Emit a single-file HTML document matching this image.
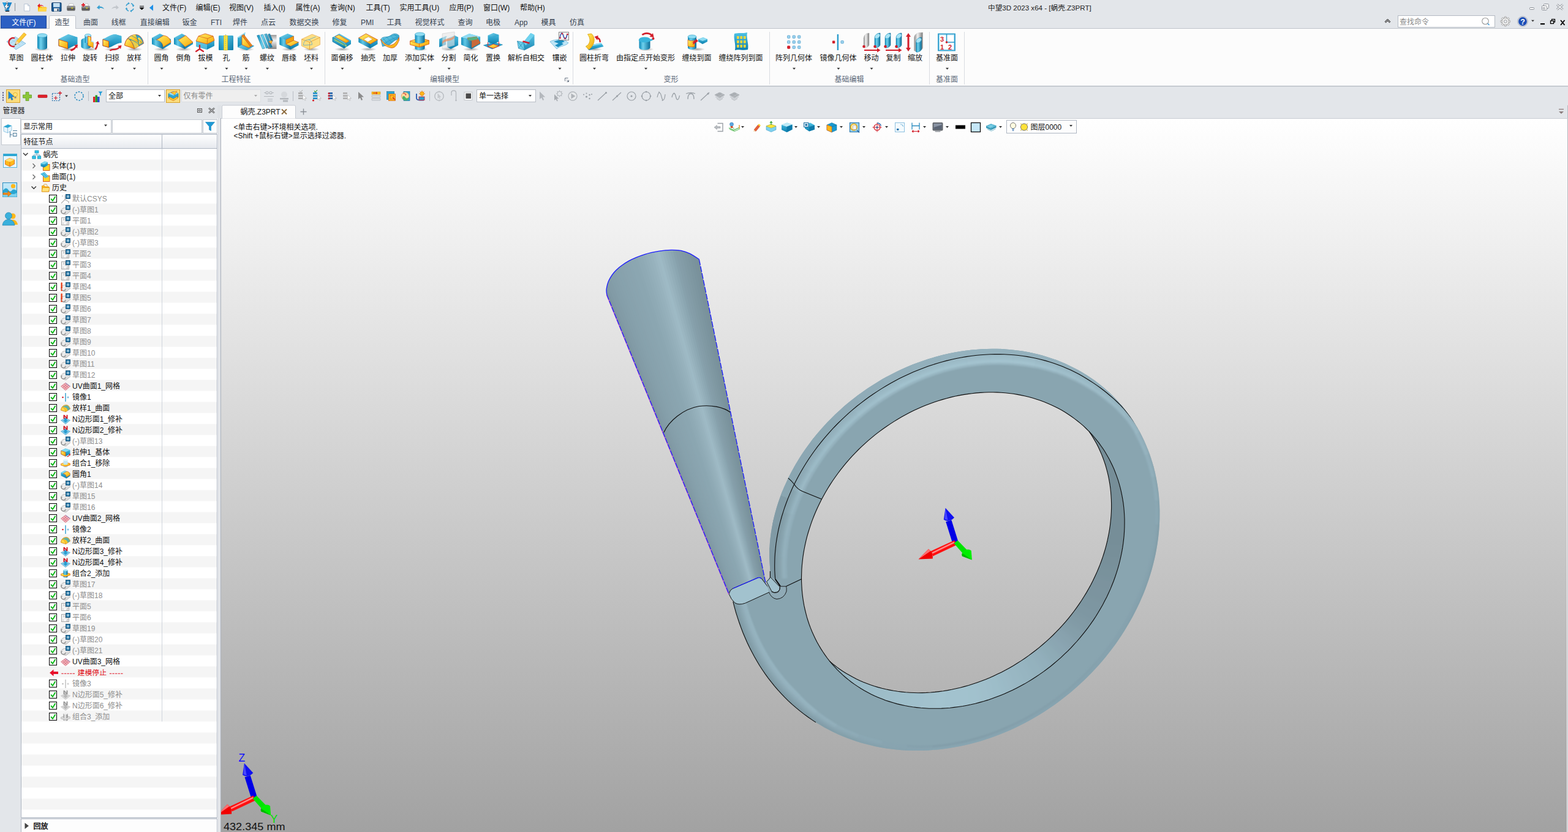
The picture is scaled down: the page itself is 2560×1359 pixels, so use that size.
<!DOCTYPE html>
<html><head><meta charset="utf-8"><title>ZW3D</title>
<style>
html,body{margin:0;padding:0;background:#e3e6ea;overflow:hidden}
body{width:2560px;height:1359px;position:relative;font-family:"Liberation Sans",sans-serif}
#scr{position:absolute;left:0;top:0;display:block}
#txt span{position:absolute;white-space:pre;color:transparent;line-height:1;pointer-events:none}
#txt{position:absolute;left:0;top:0;width:2560px;height:1359px;overflow:hidden}
#scr text.t{font-family:"Liberation Sans","Noto Sans CJK SC",sans-serif}
</style></head><body>
<div id="txt"><span style="left:1613px;top:5px;font-size:11.6px">中望3D 2023 x64 - [蜗壳.Z3PRT]</span><span style="left:265px;top:5px;font-size:12px">文件(F)</span><span style="left:320px;top:5px;font-size:12px">编辑(E)</span><span style="left:374px;top:5px;font-size:12px">视图(V)</span><span style="left:430px;top:5px;font-size:12px">插入(I)</span><span style="left:482px;top:5px;font-size:12px">属性(A)</span><span style="left:539px;top:5px;font-size:12px">查询(N)</span><span style="left:598px;top:5px;font-size:12px">工具(T)</span><span style="left:652px;top:5px;font-size:12px">实用工具(U)</span><span style="left:734px;top:5px;font-size:12px">应用(P)</span><span style="left:789px;top:5px;font-size:12px">窗口(W)</span><span style="left:849px;top:5px;font-size:12px">帮助(H)</span><span style="left:19px;top:29px;font-size:12px">文件(F)</span><span style="left:90px;top:29px;font-size:12px">造型</span><span style="left:136px;top:29px;font-size:12px">曲面</span><span style="left:182px;top:29px;font-size:12px">线框</span><span style="left:229px;top:29px;font-size:12px">直接编辑</span><span style="left:298px;top:29px;font-size:12px">钣金</span><span style="left:344px;top:29px;font-size:12px">FTI</span><span style="left:380px;top:29px;font-size:12px">焊件</span><span style="left:426px;top:29px;font-size:12px">点云</span><span style="left:472px;top:29px;font-size:12px">数据交换</span><span style="left:542px;top:29px;font-size:12px">修复</span><span style="left:589px;top:29px;font-size:12px">PMI</span><span style="left:632px;top:29px;font-size:12px">工具</span><span style="left:678px;top:29px;font-size:12px">视觉样式</span><span style="left:748px;top:29px;font-size:12px">查询</span><span style="left:793px;top:29px;font-size:12px">电极</span><span style="left:840px;top:29px;font-size:12px">App</span><span style="left:884px;top:29px;font-size:12px">模具</span><span style="left:930px;top:29px;font-size:12px">仿真</span><span style="left:14px;top:87px;font-size:12px">草图</span><span style="left:50px;top:87px;font-size:12px">圆柱体</span><span style="left:99px;top:87px;font-size:12px">拉伸</span><span style="left:135px;top:87px;font-size:12px">旋转</span><span style="left:171px;top:87px;font-size:12px">扫掠</span><span style="left:207px;top:87px;font-size:12px">放样</span><span style="left:252px;top:87px;font-size:12px">圆角</span><span style="left:288px;top:87px;font-size:12px">倒角</span><span style="left:324px;top:87px;font-size:12px">拔模</span><span style="left:364px;top:87px;font-size:12px">孔</span><span style="left:396px;top:87px;font-size:12px">筋</span><span style="left:424px;top:87px;font-size:12px">螺纹</span><span style="left:460px;top:87px;font-size:12px">唇缘</span><span style="left:496px;top:87px;font-size:12px">坯料</span><span style="left:540px;top:87px;font-size:12px">面偏移</span><span style="left:589px;top:87px;font-size:12px">抽壳</span><span style="left:625px;top:87px;font-size:12px">加厚</span><span style="left:661px;top:87px;font-size:12px">添加实体</span><span style="left:721px;top:87px;font-size:12px">分割</span><span style="left:757px;top:87px;font-size:12px">简化</span><span style="left:793px;top:87px;font-size:12px">置换</span><span style="left:829px;top:87px;font-size:12px">解析自相交</span><span style="left:902px;top:87px;font-size:12px">镶嵌</span><span style="left:946px;top:87px;font-size:12px">圆柱折弯</span><span style="left:1006px;top:87px;font-size:12px">由指定点开始变形</span><span style="left:1114px;top:87px;font-size:12px">缠绕到面</span><span style="left:1174px;top:87px;font-size:12px">缠绕阵列到面</span><span style="left:1266px;top:87px;font-size:12px">阵列几何体</span><span style="left:1338px;top:87px;font-size:12px">镜像几何体</span><span style="left:1410px;top:87px;font-size:12px">移动</span><span style="left:1446px;top:87px;font-size:12px">复制</span><span style="left:1482px;top:87px;font-size:12px">缩放</span><span style="left:1528px;top:87px;font-size:12px">基准面</span><span style="left:98px;top:122px;font-size:12px">基础造型</span><span style="left:362px;top:122px;font-size:12px">工程特征</span><span style="left:702px;top:122px;font-size:12px">编辑模型</span><span style="left:1084px;top:122px;font-size:12px">变形</span><span style="left:1362px;top:122px;font-size:12px">基础编辑</span><span style="left:1528px;top:122px;font-size:12px">基准面</span><span style="left:177px;top:149px;font-size:12px">全部</span><span style="left:300px;top:149px;font-size:12px">仅有零件</span><span style="left:782px;top:149px;font-size:12px">单一选择</span><span style="left:4px;top:173px;font-size:12px">管理器</span><span style="left:38px;top:199px;font-size:12px">显示常用</span><span style="left:38px;top:224px;font-size:12px">特征节点</span><span style="left:54px;top:1342px;font-size:12px">回放</span><span style="left:392px;top:175px;font-size:12px">蜗壳.Z3PRT</span><span style="left:382px;top:200px;font-size:12px">&lt;单击右键&gt;环境相关选项.</span><span style="left:382px;top:214px;font-size:12px">&lt;Shift +鼠标右键&gt;显示选择过滤器.</span><span style="left:1682px;top:200px;font-size:12px">图层0000</span><span style="left:70px;top:245px;font-size:12px">蜗壳</span><span style="left:84px;top:263px;font-size:12px">实体(1)</span><span style="left:84px;top:281px;font-size:12px">曲面(1)</span><span style="left:85px;top:299px;font-size:12px">历史</span><span style="left:118px;top:317px;font-size:12px">默认CSYS</span><span style="left:118px;top:335px;font-size:12px">(-)草图1</span><span style="left:118px;top:353px;font-size:12px">平面1</span><span style="left:118px;top:371px;font-size:12px">(-)草图2</span><span style="left:118px;top:389px;font-size:12px">(-)草图3</span><span style="left:118px;top:407px;font-size:12px">平面2</span><span style="left:118px;top:425px;font-size:12px">平面3</span><span style="left:118px;top:443px;font-size:12px">平面4</span><span style="left:118px;top:461px;font-size:12px">草图4</span><span style="left:118px;top:479px;font-size:12px">草图5</span><span style="left:118px;top:497px;font-size:12px">草图6</span><span style="left:118px;top:515px;font-size:12px">草图7</span><span style="left:118px;top:533px;font-size:12px">草图8</span><span style="left:118px;top:551px;font-size:12px">草图9</span><span style="left:118px;top:569px;font-size:12px">草图10</span><span style="left:118px;top:587px;font-size:12px">草图11</span><span style="left:118px;top:605px;font-size:12px">草图12</span><span style="left:118px;top:623px;font-size:12px">UV曲面1_网格</span><span style="left:118px;top:641px;font-size:12px">镜像1</span><span style="left:118px;top:659px;font-size:12px">放样1_曲面</span><span style="left:118px;top:677px;font-size:12px">N边形面1_修补</span><span style="left:118px;top:695px;font-size:12px">N边形面2_修补</span><span style="left:118px;top:713px;font-size:12px">(-)草图13</span><span style="left:118px;top:731px;font-size:12px">拉伸1_基体</span><span style="left:118px;top:749px;font-size:12px">组合1_移除</span><span style="left:118px;top:767px;font-size:12px">圆角1</span><span style="left:118px;top:785px;font-size:12px">(-)草图14</span><span style="left:118px;top:803px;font-size:12px">草图15</span><span style="left:118px;top:821px;font-size:12px">草图16</span><span style="left:118px;top:839px;font-size:12px">UV曲面2_网格</span><span style="left:118px;top:857px;font-size:12px">镜像2</span><span style="left:118px;top:875px;font-size:12px">放样2_曲面</span><span style="left:118px;top:893px;font-size:12px">N边形面3_修补</span><span style="left:118px;top:911px;font-size:12px">N边形面4_修补</span><span style="left:118px;top:929px;font-size:12px">组合2_添加</span><span style="left:118px;top:947px;font-size:12px">草图17</span><span style="left:118px;top:965px;font-size:12px">(-)草图18</span><span style="left:118px;top:983px;font-size:12px">平面5</span><span style="left:118px;top:1001px;font-size:12px">平面6</span><span style="left:118px;top:1019px;font-size:12px">草图19</span><span style="left:118px;top:1037px;font-size:12px">(-)草图20</span><span style="left:118px;top:1055px;font-size:12px">(-)草图21</span><span style="left:118px;top:1073px;font-size:12px">UV曲面3_网格</span><span style="left:126px;top:1092px;font-size:11.9px">建模停止</span><span style="left:99px;top:1092px;font-size:12px">----- 建模停止 -----</span><span style="left:118px;top:1109px;font-size:12px">镜像3</span><span style="left:118px;top:1127px;font-size:12px">N边形面5_修补</span><span style="left:118px;top:1145px;font-size:12px">N边形面6_修补</span><span style="left:118px;top:1163px;font-size:12px">组合3_添加</span><span style="left:2285px;top:28px;font-size:12px">查找命令</span></div>
<svg id="scr" width="2560" height="1359" viewBox="0 0 2560 1359">
<defs><linearGradient id="vbg" x1="0" y1="0" x2="0" y2="1"><stop offset="0" stop-color="#ffffff"/><stop offset="1" stop-color="#a2a2a2"/></linearGradient><linearGradient id="hdr" x1="0" y1="0" x2="0" y2="1"><stop offset="0" stop-color="#ffffff"/><stop offset="1" stop-color="#e6e9ee"/></linearGradient></defs>
<rect x="0" y="0" width="2560" height="1359" fill="#e3e6ea"/>
<rect x="0" y="47" width="2560" height="93" fill="#fcfcfc"/>
<line x1="0" y1="46.5" x2="2560" y2="46.5" stroke="#bfc4cb" stroke-width="1"/>
<line x1="0" y1="140.5" x2="2560" y2="140.5" stroke="#b4bac3" stroke-width="1"/>
<line x1="0" y1="141.5" x2="2560" y2="141.5" stroke="#d5d9de" stroke-width="1"/>
<rect x="361" y="194" width="2197" height="1165" fill="url(#vbg)"/>
<line x1="2558.5" y1="194" x2="2558.5" y2="1359" stroke="#fafafa" stroke-width="1"/>
<line x1="2559.5" y1="172" x2="2559.5" y2="1359" stroke="#b4b9c0" stroke-width="1"/>
<line x1="361" y1="193.5" x2="2560" y2="193.5" stroke="#c9cdd3" stroke-width="1"/>
<text class="t" x="1613.1" y="16.79" font-size="11.6" fill="#222">中望3D 2023 x64 - [蜗壳.Z3PRT]</text>
<text class="t" x="265" y="17.44" font-size="12" fill="#111">文件(F)</text>
<text class="t" x="319.5" y="17.44" font-size="12" fill="#111">编辑(E)</text>
<text class="t" x="374" y="17.44" font-size="12" fill="#111">视图(V)</text>
<text class="t" x="430.5" y="17.44" font-size="12" fill="#111">插入(I)</text>
<text class="t" x="482.5" y="17.44" font-size="12" fill="#111">属性(A)</text>
<text class="t" x="539" y="17.44" font-size="12" fill="#111">查询(N)</text>
<text class="t" x="597.5" y="17.44" font-size="12" fill="#111">工具(T)</text>
<text class="t" x="652.5" y="17.44" font-size="12" fill="#111">实用工具(U)</text>
<text class="t" x="733.5" y="17.44" font-size="12" fill="#111">应用(P)</text>
<text class="t" x="789" y="17.44" font-size="12" fill="#111">窗口(W)</text>
<text class="t" x="849" y="17.44" font-size="12" fill="#111">帮助(H)</text>
<rect x="1.5" y="26" width="74" height="20" fill="#2b5fc3" stroke="#1d469b" stroke-width="1"/>
<text class="t" x="19.13" y="40.94" font-size="12" fill="#fff">文件(F)</text>
<path d="M80.5 47V27.5a2 2 0 0 1 2-2h39a2 2 0 0 1 2 2V47" fill="#fcfcfc" stroke="#bfc4cb"/>
<text class="t" x="89.5" y="40.94" font-size="12" fill="#35414f">造型</text>
<text class="t" x="136" y="40.94" font-size="12" fill="#35414f">曲面</text>
<text class="t" x="181.7" y="40.94" font-size="12" fill="#35414f">线框</text>
<text class="t" x="228.7" y="40.94" font-size="12" fill="#35414f">直接编辑</text>
<text class="t" x="297.5" y="40.94" font-size="12" fill="#35414f">钣金</text>
<text class="t" x="344" y="40.94" font-size="12" fill="#35414f">FTI</text>
<text class="t" x="380" y="40.94" font-size="12" fill="#35414f">焊件</text>
<text class="t" x="426" y="40.94" font-size="12" fill="#35414f">点云</text>
<text class="t" x="472.5" y="40.94" font-size="12" fill="#35414f">数据交换</text>
<text class="t" x="542.5" y="40.94" font-size="12" fill="#35414f">修复</text>
<text class="t" x="589" y="40.94" font-size="12" fill="#35414f">PMI</text>
<text class="t" x="631.5" y="40.94" font-size="12" fill="#35414f">工具</text>
<text class="t" x="677.5" y="40.94" font-size="12" fill="#35414f">视觉样式</text>
<text class="t" x="747.5" y="40.94" font-size="12" fill="#35414f">查询</text>
<text class="t" x="793" y="40.94" font-size="12" fill="#35414f">电极</text>
<text class="t" x="840" y="40.94" font-size="12" fill="#35414f">App</text>
<text class="t" x="883.5" y="40.94" font-size="12" fill="#35414f">模具</text>
<text class="t" x="930" y="40.94" font-size="12" fill="#35414f">仿真</text>
<text class="t" x="14.5" y="99.44" font-size="12" fill="#111">草图</text>
<path d="M24.5 110.8h5l-2.5 3z" fill="#333"/>
<text class="t" x="50.5" y="99.44" font-size="12" fill="#111">圆柱体</text>
<path d="M66.5 110.8h5l-2.5 3z" fill="#333"/>
<text class="t" x="99" y="99.44" font-size="12" fill="#111">拉伸</text>
<text class="t" x="135" y="99.44" font-size="12" fill="#111">旋转</text>
<text class="t" x="171" y="99.44" font-size="12" fill="#111">扫掠</text>
<path d="M181 110.8h5l-2.5 3z" fill="#333"/>
<text class="t" x="207" y="99.44" font-size="12" fill="#111">放样</text>
<path d="M217 110.8h5l-2.5 3z" fill="#333"/>
<text class="t" x="251.5" y="99.44" font-size="12" fill="#111">圆角</text>
<path d="M261.5 110.8h5l-2.5 3z" fill="#333"/>
<text class="t" x="287.5" y="99.44" font-size="12" fill="#111">倒角</text>
<text class="t" x="323.5" y="99.44" font-size="12" fill="#111">拔模</text>
<path d="M333.5 110.8h5l-2.5 3z" fill="#333"/>
<text class="t" x="363.5" y="99.44" font-size="12" fill="#111">孔</text>
<path d="M367.5 110.8h5l-2.5 3z" fill="#333"/>
<text class="t" x="395.5" y="99.44" font-size="12" fill="#111">筋</text>
<path d="M399.5 110.8h5l-2.5 3z" fill="#333"/>
<text class="t" x="424" y="99.44" font-size="12" fill="#111">螺纹</text>
<path d="M434 110.8h5l-2.5 3z" fill="#333"/>
<text class="t" x="460" y="99.44" font-size="12" fill="#111">唇缘</text>
<text class="t" x="496" y="99.44" font-size="12" fill="#111">坯料</text>
<path d="M506 110.8h5l-2.5 3z" fill="#333"/>
<text class="t" x="540.5" y="99.44" font-size="12" fill="#111">面偏移</text>
<path d="M556.5 110.8h5l-2.5 3z" fill="#333"/>
<text class="t" x="589" y="99.44" font-size="12" fill="#111">抽壳</text>
<text class="t" x="625" y="99.44" font-size="12" fill="#111">加厚</text>
<text class="t" x="661" y="99.44" font-size="12" fill="#111">添加实体</text>
<path d="M683 110.8h5l-2.5 3z" fill="#333"/>
<text class="t" x="720.6" y="99.44" font-size="12" fill="#111">分割</text>
<path d="M730.6 110.8h5l-2.5 3z" fill="#333"/>
<text class="t" x="756.6" y="99.44" font-size="12" fill="#111">简化</text>
<text class="t" x="793" y="99.44" font-size="12" fill="#111">置换</text>
<text class="t" x="829" y="99.44" font-size="12" fill="#111">解析自相交</text>
<text class="t" x="901.5" y="99.44" font-size="12" fill="#111">镶嵌</text>
<path d="M911.5 110.8h5l-2.5 3z" fill="#333"/>
<text class="t" x="946" y="99.44" font-size="12" fill="#111">圆柱折弯</text>
<path d="M968 110.8h5l-2.5 3z" fill="#333"/>
<text class="t" x="1006" y="99.44" font-size="12" fill="#111">由指定点开始变形</text>
<path d="M1052 110.8h5l-2.5 3z" fill="#333"/>
<text class="t" x="1113.5" y="99.44" font-size="12" fill="#111">缠绕到面</text>
<text class="t" x="1173.5" y="99.44" font-size="12" fill="#111">缠绕阵列到面</text>
<text class="t" x="1266" y="99.44" font-size="12" fill="#111">阵列几何体</text>
<path d="M1294 110.8h5l-2.5 3z" fill="#333"/>
<text class="t" x="1338.4" y="99.44" font-size="12" fill="#111">镜像几何体</text>
<path d="M1366.4 110.8h5l-2.5 3z" fill="#333"/>
<text class="t" x="1410.5" y="99.44" font-size="12" fill="#111">移动</text>
<path d="M1420.5 110.8h5l-2.5 3z" fill="#333"/>
<text class="t" x="1446.5" y="99.44" font-size="12" fill="#111">复制</text>
<text class="t" x="1482" y="99.44" font-size="12" fill="#111">缩放</text>
<text class="t" x="1528" y="99.44" font-size="12" fill="#111">基准面</text>
<path d="M1544 110.8h5l-2.5 3z" fill="#333"/>
<text class="t" x="98.5" y="134.44" font-size="12" fill="#5b6878">基础造型</text>
<text class="t" x="361.5" y="134.44" font-size="12" fill="#5b6878">工程特征</text>
<text class="t" x="702" y="134.44" font-size="12" fill="#5b6878">编辑模型</text>
<text class="t" x="1083.5" y="134.44" font-size="12" fill="#5b6878">变形</text>
<text class="t" x="1362.5" y="134.44" font-size="12" fill="#5b6878">基础编辑</text>
<text class="t" x="1528" y="134.44" font-size="12" fill="#5b6878">基准面</text>
<line x1="241.5" y1="52" x2="241.5" y2="138" stroke="#d9dce1" stroke-width="1"/>
<line x1="530.5" y1="52" x2="530.5" y2="138" stroke="#d9dce1" stroke-width="1"/>
<line x1="935.5" y1="52" x2="935.5" y2="138" stroke="#d9dce1" stroke-width="1"/>
<line x1="1256.5" y1="52" x2="1256.5" y2="138" stroke="#d9dce1" stroke-width="1"/>
<line x1="1517.5" y1="52" x2="1517.5" y2="138" stroke="#d9dce1" stroke-width="1"/>
<line x1="1574.5" y1="52" x2="1574.5" y2="138" stroke="#d9dce1" stroke-width="1"/>
<path d="M922.5 127.5h5M922.5 127.5v5M925 130l3.5 3.5M928.5 130.5v3h-3" stroke="#6b7685" fill="none"/>
<rect x="4" y="150.5" width="2" height="2" fill="#4a4a7a"/>
<rect x="4" y="154.5" width="2" height="2" fill="#4a4a7a"/>
<rect x="4" y="158.5" width="2" height="2" fill="#4a4a7a"/>
<rect x="4" y="162.5" width="2" height="2" fill="#4a4a7a"/>
<rect x="10.5" y="146.5" width="22" height="21" fill="#fbdc7c" stroke="#d6a12c" stroke-width="1"/>
<rect x="271.5" y="146.5" width="22" height="21" fill="#fbdc7c" stroke="#d6a12c" stroke-width="1"/>
<rect x="173.5" y="146.5" width="95" height="20" fill="#fff" stroke="#b9bec6" stroke-width="1"/>
<text class="t" x="177" y="161.44" font-size="12" fill="#111">全部</text>
<path d="M258 155h5l-2.5 3z" fill="#333"/>
<rect x="296.5" y="146.5" width="129" height="20" fill="#efefef" stroke="#dcdfe3" stroke-width="1"/>
<text class="t" x="299.5" y="161.44" font-size="12" fill="#8a8a8a">仅有零件</text>
<path d="M415 155h5l-2.5 3z" fill="#aaa"/>
<rect x="778.5" y="146.5" width="96" height="20" fill="#fff" stroke="#b9bec6" stroke-width="1"/>
<text class="t" x="782" y="161.44" font-size="12" fill="#111">单一选择</text>
<path d="M863 155h5l-2.5 3z" fill="#333"/>
<line x1="144.5" y1="149" x2="144.5" y2="165" stroke="#b9bec6" stroke-width="1"/>
<line x1="478.5" y1="149" x2="478.5" y2="165" stroke="#b9bec6" stroke-width="1"/>
<line x1="701.5" y1="149" x2="701.5" y2="165" stroke="#b9bec6" stroke-width="1"/>
<text class="t" x="4.5" y="185.44" font-size="12" fill="#222">管理器</text>
<rect x="322.5" y="177.5" width="7" height="6" fill="none" stroke="#555"/><rect x="324.5" y="179.5" width="3" height="2" fill="none" stroke="#555" stroke-width=".8"/>
<path d="M341 176.5l9 8M350 176.5l-9 8" stroke="#555" stroke-width="2.6" fill="none"/><path d="M341 176.5l9 8M350 176.5l-9 8" stroke="#e3e6ea" stroke-width="1" fill="none"/>
<rect x="2.5" y="193.5" width="31" height="43" fill="#fdfdfd" stroke="#c5cad1" stroke-width="1"/>
<rect x="34.5" y="195.5" width="147" height="22" fill="#fff" stroke="#c5cad1" stroke-width="1"/>
<text class="t" x="38" y="211.44" font-size="12" fill="#111">显示常用</text>
<path d="M170 203.5h5l-2.5 3z" fill="#333"/>
<rect x="183.5" y="195.5" width="146" height="22" fill="#fff" stroke="#c5cad1" stroke-width="1"/>
<rect x="331.5" y="195.5" width="23" height="22" fill="#fdfdfd" stroke="#c5cad1" stroke-width="1"/>
<path d="M335.5 199.5h15l-6 7v7l-3-1.5v-5.5z" fill="#1e9ad6" stroke="#0f7db5" stroke-width=".6"/>
<rect x="34.5" y="219.5" width="320" height="1116" fill="#fff" stroke="#aeb6c2" stroke-width="1"/>
<rect x="35" y="220" width="319" height="22" fill="url(#hdr)"/>
<line x1="35" y1="242.5" x2="354" y2="242.5" stroke="#aeb6c2" stroke-width="1"/>
<line x1="264.5" y1="220" x2="264.5" y2="242" stroke="#aeb6c2" stroke-width="1"/>
<text class="t" x="38.5" y="235.94" font-size="12" fill="#111">特征节点</text>
<rect x="35" y="260.5" width="319" height="18" fill="#f5f5f5"/>
<rect x="35" y="296.5" width="319" height="18" fill="#f5f5f5"/>
<rect x="35" y="332.5" width="319" height="18" fill="#f5f5f5"/>
<rect x="35" y="368.5" width="319" height="18" fill="#f5f5f5"/>
<rect x="35" y="404.5" width="319" height="18" fill="#f5f5f5"/>
<rect x="35" y="440.5" width="319" height="18" fill="#f5f5f5"/>
<rect x="35" y="476.5" width="319" height="18" fill="#f5f5f5"/>
<rect x="35" y="512.5" width="319" height="18" fill="#f5f5f5"/>
<rect x="35" y="548.5" width="319" height="18" fill="#f5f5f5"/>
<rect x="35" y="584.5" width="319" height="18" fill="#f5f5f5"/>
<rect x="35" y="620.5" width="319" height="18" fill="#f5f5f5"/>
<rect x="35" y="656.5" width="319" height="18" fill="#f5f5f5"/>
<rect x="35" y="692.5" width="319" height="18" fill="#f5f5f5"/>
<rect x="35" y="728.5" width="319" height="18" fill="#f5f5f5"/>
<rect x="35" y="764.5" width="319" height="18" fill="#f5f5f5"/>
<rect x="35" y="800.5" width="319" height="18" fill="#f5f5f5"/>
<rect x="35" y="836.5" width="319" height="18" fill="#f5f5f5"/>
<rect x="35" y="872.5" width="319" height="18" fill="#f5f5f5"/>
<rect x="35" y="908.5" width="319" height="18" fill="#f5f5f5"/>
<rect x="35" y="944.5" width="319" height="18" fill="#f5f5f5"/>
<rect x="35" y="980.5" width="319" height="18" fill="#f5f5f5"/>
<rect x="35" y="1016.5" width="319" height="18" fill="#f5f5f5"/>
<rect x="35" y="1052.5" width="319" height="18" fill="#f5f5f5"/>
<rect x="35" y="1088.5" width="319" height="18" fill="#f5f5f5"/>
<rect x="35" y="1124.5" width="319" height="18" fill="#f5f5f5"/>
<rect x="35" y="1160.5" width="319" height="18" fill="#f5f5f5"/>
<rect x="35" y="1196.5" width="319" height="18" fill="#f5f5f5"/>
<rect x="35" y="1232.5" width="319" height="18" fill="#f5f5f5"/>
<rect x="35" y="1268.5" width="319" height="18" fill="#f5f5f5"/>
<rect x="35" y="1304.5" width="319" height="18" fill="#f5f5f5"/>
<line x1="264.5" y1="243" x2="264.5" y2="1178.5" stroke="#d0d5dd" stroke-width="1"/>
<rect x="355" y="172" width="6" height="1187" fill="#dfe2e6"/>
<line x1="356" y1="193" x2="356" y2="1359" stroke="#fafbfc" stroke-width="1.4"/>
<line x1="358.6" y1="193" x2="358.6" y2="1359" stroke="#fafbfc" stroke-width="1.6"/>
<line x1="357.3" y1="193" x2="357.3" y2="1359" stroke="#c3c8cf" stroke-width="1"/>
<line x1="360.3" y1="193" x2="360.3" y2="1359" stroke="#a9afb8" stroke-width="1.2"/>
<rect x="34.5" y="1337.5" width="320" height="24" fill="#fdfdfd" stroke="#aeb6c2" stroke-width="1"/>
<path d="M40.5 1344l6.500 5-6.500 5z" fill="#444"/>
<text class="t" x="54.5" y="1353.94" font-size="12" fill="#111" stroke="#111" stroke-width="0.54">回放</text>
<path d="M362.5 193.5V174a2 2 0 0 1 2-2h116a2 2 0 0 1 2 2v19.5" fill="#fdfdfd" stroke="#c5cad1"/>
<text class="t" x="392.5" y="186.94" font-size="12" fill="#111">蜗壳.Z3PRT</text>
<path d="M460 178.5l8 8M468 178.5l-8 8" stroke="#8c6a3c" stroke-width="1.8"/>
<path d="M490.5 182.5h10M495.5 177.5v10" stroke="#8a8f96" stroke-width="1.4"/>
<path d="M2545 178.500h8" stroke="#9a8c8c" stroke-width="1.600"/><path d="M2545 182h8l-4 4z" fill="#8a7c7c"/>
<text class="t" x="381.5" y="211.94" font-size="12" fill="#111">&lt;单击右键&gt;环境相关选项.</text>
<text class="t" x="381.5" y="226.44" font-size="12" fill="#111">&lt;Shift +鼠标右键&gt;显示选择过滤器.</text>
<rect x="1643.5" y="196.5" width="114" height="21" fill="#fdfdfd" stroke="#aeb6c2" stroke-width="1"/>
<text class="t" x="1682.5" y="211.94" font-size="12" fill="#111">图层0000</text>
<path d="M1746 204h5l-2.5 3z" fill="#333"/>
<path d="M38 250l3.7 3.7 3.7-3.7" stroke="#333" stroke-width="1.4" fill="none"/>
<text class="t" x="70.5" y="257.44" font-size="12" fill="#111">蜗壳</text>
<path d="M53.5 267.3l3.7 3.7-3.7 3.7" stroke="#666" stroke-width="1.3" fill="none"/>
<text class="t" x="84.5" y="275.44" font-size="12" fill="#111">实体(1)</text>
<path d="M53.5 285.3l3.7 3.7-3.7 3.7" stroke="#666" stroke-width="1.3" fill="none"/>
<text class="t" x="84.5" y="293.44" font-size="12" fill="#111">曲面(1)</text>
<path d="M51.5 304.5l3.7 3.7 3.7-3.7" stroke="#333" stroke-width="1.4" fill="none"/>
<text class="t" x="85" y="311.44" font-size="12" fill="#111">历史</text>
<rect x="80.5" y="318.5" width="12" height="12" fill="#fff" stroke="#000" stroke-width="1"/>
<path d="M83 324.7l3 3.3 4.5-7.3" stroke="#0cb818" stroke-width="1.9" fill="none"/>
<text class="t" x="118" y="329.44" font-size="12" fill="#8e8e8e">默认CSYS</text>
<rect x="80.5" y="336.5" width="12" height="12" fill="#fff" stroke="#000" stroke-width="1"/>
<path d="M83 342.7l3 3.3 4.5-7.3" stroke="#0cb818" stroke-width="1.9" fill="none"/>
<text class="t" x="118" y="347.44" font-size="12" fill="#8e8e8e">(-)草图1</text>
<rect x="80.5" y="354.5" width="12" height="12" fill="#fff" stroke="#000" stroke-width="1"/>
<path d="M83 360.7l3 3.3 4.5-7.3" stroke="#0cb818" stroke-width="1.9" fill="none"/>
<text class="t" x="118" y="365.44" font-size="12" fill="#8e8e8e">平面1</text>
<rect x="80.5" y="372.5" width="12" height="12" fill="#fff" stroke="#000" stroke-width="1"/>
<path d="M83 378.7l3 3.3 4.5-7.3" stroke="#0cb818" stroke-width="1.9" fill="none"/>
<text class="t" x="118" y="383.44" font-size="12" fill="#8e8e8e">(-)草图2</text>
<rect x="80.5" y="390.5" width="12" height="12" fill="#fff" stroke="#000" stroke-width="1"/>
<path d="M83 396.7l3 3.3 4.5-7.3" stroke="#0cb818" stroke-width="1.9" fill="none"/>
<text class="t" x="118" y="401.44" font-size="12" fill="#8e8e8e">(-)草图3</text>
<rect x="80.5" y="408.5" width="12" height="12" fill="#fff" stroke="#000" stroke-width="1"/>
<path d="M83 414.7l3 3.3 4.5-7.3" stroke="#0cb818" stroke-width="1.9" fill="none"/>
<text class="t" x="118" y="419.44" font-size="12" fill="#8e8e8e">平面2</text>
<rect x="80.5" y="426.5" width="12" height="12" fill="#fff" stroke="#000" stroke-width="1"/>
<path d="M83 432.7l3 3.3 4.5-7.3" stroke="#0cb818" stroke-width="1.9" fill="none"/>
<text class="t" x="118" y="437.44" font-size="12" fill="#8e8e8e">平面3</text>
<rect x="80.5" y="444.5" width="12" height="12" fill="#fff" stroke="#000" stroke-width="1"/>
<path d="M83 450.7l3 3.3 4.5-7.3" stroke="#0cb818" stroke-width="1.9" fill="none"/>
<text class="t" x="118" y="455.44" font-size="12" fill="#8e8e8e">平面4</text>
<rect x="80.5" y="462.5" width="12" height="12" fill="#fff" stroke="#000" stroke-width="1"/>
<path d="M83 468.7l3 3.3 4.5-7.3" stroke="#0cb818" stroke-width="1.9" fill="none"/>
<text class="t" x="118" y="473.44" font-size="12" fill="#8e8e8e">草图4</text>
<rect x="80.5" y="480.5" width="12" height="12" fill="#fff" stroke="#000" stroke-width="1"/>
<path d="M83 486.7l3 3.3 4.5-7.3" stroke="#0cb818" stroke-width="1.9" fill="none"/>
<text class="t" x="118" y="491.44" font-size="12" fill="#8e8e8e">草图5</text>
<rect x="80.5" y="498.5" width="12" height="12" fill="#fff" stroke="#000" stroke-width="1"/>
<path d="M83 504.7l3 3.3 4.5-7.3" stroke="#0cb818" stroke-width="1.9" fill="none"/>
<text class="t" x="118" y="509.44" font-size="12" fill="#8e8e8e">草图6</text>
<rect x="80.5" y="516.5" width="12" height="12" fill="#fff" stroke="#000" stroke-width="1"/>
<path d="M83 522.7l3 3.3 4.5-7.3" stroke="#0cb818" stroke-width="1.9" fill="none"/>
<text class="t" x="118" y="527.44" font-size="12" fill="#8e8e8e">草图7</text>
<rect x="80.5" y="534.5" width="12" height="12" fill="#fff" stroke="#000" stroke-width="1"/>
<path d="M83 540.7l3 3.3 4.5-7.3" stroke="#0cb818" stroke-width="1.9" fill="none"/>
<text class="t" x="118" y="545.44" font-size="12" fill="#8e8e8e">草图8</text>
<rect x="80.5" y="552.5" width="12" height="12" fill="#fff" stroke="#000" stroke-width="1"/>
<path d="M83 558.7l3 3.3 4.5-7.3" stroke="#0cb818" stroke-width="1.9" fill="none"/>
<text class="t" x="118" y="563.44" font-size="12" fill="#8e8e8e">草图9</text>
<rect x="80.5" y="570.5" width="12" height="12" fill="#fff" stroke="#000" stroke-width="1"/>
<path d="M83 576.7l3 3.3 4.5-7.3" stroke="#0cb818" stroke-width="1.9" fill="none"/>
<text class="t" x="118" y="581.44" font-size="12" fill="#8e8e8e">草图10</text>
<rect x="80.5" y="588.5" width="12" height="12" fill="#fff" stroke="#000" stroke-width="1"/>
<path d="M83 594.7l3 3.3 4.5-7.3" stroke="#0cb818" stroke-width="1.9" fill="none"/>
<text class="t" x="118" y="599.44" font-size="12" fill="#8e8e8e">草图11</text>
<rect x="80.5" y="606.5" width="12" height="12" fill="#fff" stroke="#000" stroke-width="1"/>
<path d="M83 612.7l3 3.3 4.5-7.3" stroke="#0cb818" stroke-width="1.9" fill="none"/>
<text class="t" x="118" y="617.44" font-size="12" fill="#8e8e8e">草图12</text>
<rect x="80.5" y="624.5" width="12" height="12" fill="#fff" stroke="#000" stroke-width="1"/>
<path d="M83 630.7l3 3.3 4.5-7.3" stroke="#0cb818" stroke-width="1.9" fill="none"/>
<text class="t" x="118" y="635.44" font-size="12" fill="#111">UV曲面1_网格</text>
<rect x="80.5" y="642.5" width="12" height="12" fill="#fff" stroke="#000" stroke-width="1"/>
<path d="M83 648.7l3 3.3 4.5-7.3" stroke="#0cb818" stroke-width="1.9" fill="none"/>
<text class="t" x="118" y="653.44" font-size="12" fill="#111">镜像1</text>
<rect x="80.5" y="660.5" width="12" height="12" fill="#fff" stroke="#000" stroke-width="1"/>
<path d="M83 666.7l3 3.3 4.5-7.3" stroke="#0cb818" stroke-width="1.9" fill="none"/>
<text class="t" x="118" y="671.44" font-size="12" fill="#111">放样1_曲面</text>
<rect x="80.5" y="678.5" width="12" height="12" fill="#fff" stroke="#000" stroke-width="1"/>
<path d="M83 684.7l3 3.3 4.5-7.3" stroke="#0cb818" stroke-width="1.9" fill="none"/>
<text class="t" x="118" y="689.44" font-size="12" fill="#111">N边形面1_修补</text>
<rect x="80.5" y="696.5" width="12" height="12" fill="#fff" stroke="#000" stroke-width="1"/>
<path d="M83 702.7l3 3.3 4.5-7.3" stroke="#0cb818" stroke-width="1.9" fill="none"/>
<text class="t" x="118" y="707.44" font-size="12" fill="#111">N边形面2_修补</text>
<rect x="80.5" y="714.5" width="12" height="12" fill="#fff" stroke="#000" stroke-width="1"/>
<path d="M83 720.7l3 3.3 4.5-7.3" stroke="#0cb818" stroke-width="1.9" fill="none"/>
<text class="t" x="118" y="725.44" font-size="12" fill="#8e8e8e">(-)草图13</text>
<rect x="80.5" y="732.5" width="12" height="12" fill="#fff" stroke="#000" stroke-width="1"/>
<path d="M83 738.7l3 3.3 4.5-7.3" stroke="#0cb818" stroke-width="1.9" fill="none"/>
<text class="t" x="118" y="743.44" font-size="12" fill="#111">拉伸1_基体</text>
<rect x="80.5" y="750.5" width="12" height="12" fill="#fff" stroke="#000" stroke-width="1"/>
<path d="M83 756.7l3 3.3 4.5-7.3" stroke="#0cb818" stroke-width="1.9" fill="none"/>
<text class="t" x="118" y="761.44" font-size="12" fill="#111">组合1_移除</text>
<rect x="80.5" y="768.5" width="12" height="12" fill="#fff" stroke="#000" stroke-width="1"/>
<path d="M83 774.7l3 3.3 4.5-7.3" stroke="#0cb818" stroke-width="1.9" fill="none"/>
<text class="t" x="118" y="779.44" font-size="12" fill="#111">圆角1</text>
<rect x="80.5" y="786.5" width="12" height="12" fill="#fff" stroke="#000" stroke-width="1"/>
<path d="M83 792.7l3 3.3 4.5-7.3" stroke="#0cb818" stroke-width="1.9" fill="none"/>
<text class="t" x="118" y="797.44" font-size="12" fill="#8e8e8e">(-)草图14</text>
<rect x="80.5" y="804.5" width="12" height="12" fill="#fff" stroke="#000" stroke-width="1"/>
<path d="M83 810.7l3 3.3 4.5-7.3" stroke="#0cb818" stroke-width="1.9" fill="none"/>
<text class="t" x="118" y="815.44" font-size="12" fill="#8e8e8e">草图15</text>
<rect x="80.5" y="822.5" width="12" height="12" fill="#fff" stroke="#000" stroke-width="1"/>
<path d="M83 828.7l3 3.3 4.5-7.3" stroke="#0cb818" stroke-width="1.9" fill="none"/>
<text class="t" x="118" y="833.44" font-size="12" fill="#8e8e8e">草图16</text>
<rect x="80.5" y="840.5" width="12" height="12" fill="#fff" stroke="#000" stroke-width="1"/>
<path d="M83 846.7l3 3.3 4.5-7.3" stroke="#0cb818" stroke-width="1.9" fill="none"/>
<text class="t" x="118" y="851.44" font-size="12" fill="#111">UV曲面2_网格</text>
<rect x="80.5" y="858.5" width="12" height="12" fill="#fff" stroke="#000" stroke-width="1"/>
<path d="M83 864.7l3 3.3 4.5-7.3" stroke="#0cb818" stroke-width="1.9" fill="none"/>
<text class="t" x="118" y="869.44" font-size="12" fill="#111">镜像2</text>
<rect x="80.5" y="876.5" width="12" height="12" fill="#fff" stroke="#000" stroke-width="1"/>
<path d="M83 882.7l3 3.3 4.5-7.3" stroke="#0cb818" stroke-width="1.9" fill="none"/>
<text class="t" x="118" y="887.44" font-size="12" fill="#111">放样2_曲面</text>
<rect x="80.5" y="894.5" width="12" height="12" fill="#fff" stroke="#000" stroke-width="1"/>
<path d="M83 900.7l3 3.3 4.5-7.3" stroke="#0cb818" stroke-width="1.9" fill="none"/>
<text class="t" x="118" y="905.44" font-size="12" fill="#111">N边形面3_修补</text>
<rect x="80.5" y="912.5" width="12" height="12" fill="#fff" stroke="#000" stroke-width="1"/>
<path d="M83 918.7l3 3.3 4.5-7.3" stroke="#0cb818" stroke-width="1.9" fill="none"/>
<text class="t" x="118" y="923.44" font-size="12" fill="#111">N边形面4_修补</text>
<rect x="80.5" y="930.5" width="12" height="12" fill="#fff" stroke="#000" stroke-width="1"/>
<path d="M83 936.7l3 3.3 4.5-7.3" stroke="#0cb818" stroke-width="1.9" fill="none"/>
<text class="t" x="118" y="941.44" font-size="12" fill="#111">组合2_添加</text>
<rect x="80.5" y="948.5" width="12" height="12" fill="#fff" stroke="#000" stroke-width="1"/>
<path d="M83 954.7l3 3.3 4.5-7.3" stroke="#0cb818" stroke-width="1.9" fill="none"/>
<text class="t" x="118" y="959.44" font-size="12" fill="#8e8e8e">草图17</text>
<rect x="80.5" y="966.5" width="12" height="12" fill="#fff" stroke="#000" stroke-width="1"/>
<path d="M83 972.7l3 3.3 4.5-7.3" stroke="#0cb818" stroke-width="1.9" fill="none"/>
<text class="t" x="118" y="977.44" font-size="12" fill="#8e8e8e">(-)草图18</text>
<rect x="80.5" y="984.5" width="12" height="12" fill="#fff" stroke="#000" stroke-width="1"/>
<path d="M83 990.7l3 3.3 4.5-7.3" stroke="#0cb818" stroke-width="1.9" fill="none"/>
<text class="t" x="118" y="995.44" font-size="12" fill="#8e8e8e">平面5</text>
<rect x="80.5" y="1002.5" width="12" height="12" fill="#fff" stroke="#000" stroke-width="1"/>
<path d="M83 1008.7l3 3.3 4.5-7.3" stroke="#0cb818" stroke-width="1.9" fill="none"/>
<text class="t" x="118" y="1013.44" font-size="12" fill="#8e8e8e">平面6</text>
<rect x="80.5" y="1020.5" width="12" height="12" fill="#fff" stroke="#000" stroke-width="1"/>
<path d="M83 1026.7l3 3.3 4.5-7.3" stroke="#0cb818" stroke-width="1.9" fill="none"/>
<text class="t" x="118" y="1031.44" font-size="12" fill="#8e8e8e">草图19</text>
<rect x="80.5" y="1038.5" width="12" height="12" fill="#fff" stroke="#000" stroke-width="1"/>
<path d="M83 1044.7l3 3.3 4.5-7.3" stroke="#0cb818" stroke-width="1.9" fill="none"/>
<text class="t" x="118" y="1049.44" font-size="12" fill="#8e8e8e">(-)草图20</text>
<rect x="80.5" y="1056.5" width="12" height="12" fill="#fff" stroke="#000" stroke-width="1"/>
<path d="M83 1062.7l3 3.3 4.5-7.3" stroke="#0cb818" stroke-width="1.9" fill="none"/>
<text class="t" x="118" y="1067.44" font-size="12" fill="#8e8e8e">(-)草图21</text>
<rect x="80.5" y="1074.5" width="12" height="12" fill="#fff" stroke="#000" stroke-width="1"/>
<path d="M83 1080.7l3 3.3 4.5-7.3" stroke="#0cb818" stroke-width="1.9" fill="none"/>
<text class="t" x="118" y="1085.44" font-size="12" fill="#111">UV曲面3_网格</text>
<path d="M81 1099l6.5-5.5v3.5h7.5v4h-7.5v3.5z" fill="#e8102a"/>
<path d="M100.300 1100.2h22.800M178.800 1100.2h22.800" stroke="#e01020" stroke-width="1.100" stroke-dasharray="3.300 1.300"/>
<text class="t" x="126.5" y="1103.4" font-size="11.9" fill="#e01020">建模停止</text>
<rect x="80.5" y="1110.5" width="12" height="12" fill="#fff" stroke="#000" stroke-width="1"/>
<path d="M83 1116.7l3 3.3 4.5-7.3" stroke="#0cb818" stroke-width="1.9" fill="none"/>
<text class="t" x="118" y="1121.44" font-size="12" fill="#8e8e8e">镜像3</text>
<rect x="80.5" y="1128.5" width="12" height="12" fill="#fff" stroke="#000" stroke-width="1"/>
<path d="M83 1134.7l3 3.3 4.5-7.3" stroke="#0cb818" stroke-width="1.9" fill="none"/>
<text class="t" x="118" y="1139.44" font-size="12" fill="#8e8e8e">N边形面5_修补</text>
<rect x="80.5" y="1146.5" width="12" height="12" fill="#fff" stroke="#000" stroke-width="1"/>
<path d="M83 1152.7l3 3.3 4.5-7.3" stroke="#0cb818" stroke-width="1.9" fill="none"/>
<text class="t" x="118" y="1157.44" font-size="12" fill="#8e8e8e">N边形面6_修补</text>
<rect x="80.5" y="1164.5" width="12" height="12" fill="#fff" stroke="#000" stroke-width="1"/>
<path d="M83 1170.7l3 3.3 4.5-7.3" stroke="#0cb818" stroke-width="1.9" fill="none"/>
<text class="t" x="118" y="1175.44" font-size="12" fill="#8e8e8e">组合3_添加</text>
<defs><clipPath id="ringclip"><path d="M1259.1 942.8 1258.0 935.1 1257.1 927.3 1256.6 919.4 1256.2 911.4 1256.2 903.4 1256.4 895.3 1256.9 887.1 1257.7 878.9 1258.8 870.6 1260.1 862.3 1261.7 854.0 1263.5 845.7 1265.6 837.4 1268.0 829.1 1270.6 820.8 1273.5 812.5 1276.6 804.2 1280.0 796.0 1283.7 787.9 1287.5 779.8 1291.6 771.7 1296.0 763.7 1300.5 755.9 1305.3 748.1 1310.3 740.3 1315.5 732.7 1321.0 725.2 1326.6 717.8 1332.4 710.6 1338.4 703.4 1344.6 696.4 1351.0 689.6 1357.6 682.9 1364.3 676.3 1371.2 669.9 1378.2 663.6 1385.4 657.6 1392.7 651.7 1400.2 645.9 1407.8 640.4 1415.5 635.0 1423.3 629.9 1431.3 624.9 1439.3 620.1 1447.5 615.5 1455.7 611.2 1464.0 607.0 1472.4 603.0 1480.8 599.3 1489.3 595.8 1497.9 592.5 1506.5 589.4 1515.1 586.5 1523.8 583.9 1532.5 581.5 1541.2 579.3 1549.9 577.3 1558.7 575.5 1567.4 574.0 1576.1 572.8 1584.8 571.7 1593.5 570.9 1602.2 570.3 1610.8 569.9 1619.4 569.8 1627.9 569.8 1636.4 570.1 1644.9 570.7 1653.2 571.4 1661.5 572.4 1669.7 573.6 1677.9 575.0 1685.9 576.7 1693.9 578.5 1701.7 580.6 1709.5 582.9 1717.1 585.4 1724.7 588.1 1732.1 591.0 1739.4 594.1 1746.5 597.4 1753.6 600.9 1760.5 604.5 1767.2 608.4 1773.9 612.5 1780.3 616.7 1786.7 621.1 1792.8 625.7 1798.8 630.5 1804.7 635.4 1810.4 640.5 1815.9 645.8 1821.2 651.2 1826.4 656.8 1831.4 662.5 1836.2 668.4 1840.8 674.4 1845.3 680.5 1849.5 686.8 1853.6 693.2 1857.5 699.7 1861.2 706.3 1864.7 713.1 1868.0 719.9 1871.1 726.9 1874.0 734.0 1876.7 741.1 1879.2 748.4 1881.5 755.7 1883.6 763.1 1885.5 770.6 1887.2 778.2 1888.7 785.9 1890.0 793.6 1891.1 801.3 1892.0 809.1 1892.6 817.0 1893.1 824.9 1893.4 832.9 1893.4 840.9 1893.3 848.9 1892.9 856.9 1892.4 865.0 1891.6 873.1 1890.7 881.2 1889.5 889.3 1888.1 897.4 1886.6 905.5 1884.8 913.6 1882.8 921.7 1880.7 929.7 1878.3 937.8 1875.8 945.8 1873.0 953.8 1870.1 961.7 1867.0 969.7 1863.6 977.5 1860.1 985.4 1856.5 993.1 1852.6 1000.8 1848.6 1008.5 1844.3 1016.1 1839.9 1023.6 1835.4 1031.1 1830.6 1038.4 1825.7 1045.7 1820.7 1052.9 1815.4 1060.0 1810.0 1067.0 1804.5 1073.9 1798.8 1080.7 1792.9 1087.4 1786.9 1094.0 1780.7 1100.4 1774.5 1106.8 1768.0 1113.0 1761.5 1119.1 1754.8 1125.0 1747.9 1130.9 1741.0 1136.5 1733.9 1142.1 1726.8 1147.5 1719.5 1152.7 1712.1 1157.8 1704.6 1162.7 1697.0 1167.5 1689.3 1172.0 1681.5 1176.5 1673.6 1180.7 1665.7 1184.8 1657.7 1188.7 1649.6 1192.4 1641.4 1196.0 1633.2 1199.3 1624.9 1202.5 1616.5 1205.5 1608.2 1208.3 1599.7 1210.9 1591.3 1213.3 1582.8 1215.5 1574.3 1217.5 1565.7 1219.2 1557.2 1220.8 1548.6 1222.2 1540.0 1223.4 1531.4 1224.4 1522.9 1225.1 1514.3 1225.7 1505.7 1226.0 1497.2 1226.1 1488.7 1226.0 1480.2 1225.7 1471.8 1225.2 1463.4 1224.5 1455.1 1223.5 1446.8 1222.4 1438.5 1221.0 1430.4 1219.4 1422.3 1217.6 1414.2 1215.6 1406.3 1213.4 1398.4 1210.9 1390.6 1208.3 1382.9 1205.5 1375.3 1202.4 1367.8 1199.2 1360.4 1195.7 1353.1 1192.0 1345.9 1188.2 1338.9 1184.1 1331.9 1179.9 1325.1 1175.4 1318.5 1170.8 1311.9 1165.9 1305.5 1160.9 1299.2 1155.7 1293.1 1150.4 1287.1 1144.8 1281.3 1139.1 1275.6 1133.2 1270.1 1127.1 1264.7 1120.8 1259.5 1114.4 1254.4 1107.8 1249.5 1101.1 1244.8 1094.2 1240.2 1087.2 1235.9 1080.0 1231.6 1072.6 1227.6 1065.1 1223.7 1057.5 1220.0 1049.7 1216.5 1041.8 1213.1 1033.8 1210.0 1025.6 1207.0 1017.3 1204.2 1008.8 1201.5 1000.3 1199.1 991.6 1196.8 982.7L1195.6 983L1212 986L1259.2 965.8L1257.4 943Z M1354.5 1079.8 1350.7 1075.0 1347.0 1069.9 1343.5 1064.8 1340.2 1059.6 1337.0 1054.2 1333.9 1048.8 1331.1 1043.2 1328.4 1037.5 1325.8 1031.8 1323.4 1025.9 1321.2 1020.0 1319.2 1014.0 1317.3 1007.9 1315.7 1001.7 1314.2 995.5 1312.8 989.2 1311.7 982.8 1310.7 976.4 1309.9 969.9 1309.3 963.4 1308.9 956.8 1308.6 950.2 1308.5 943.6 1308.7 936.9 1308.9 930.2 1309.4 923.5 1310.1 916.7 1310.9 910.0 1311.9 903.2 1313.1 896.5 1314.5 889.7 1316.0 882.9 1317.7 876.2 1319.6 869.5 1321.7 862.8 1323.9 856.1 1326.3 849.4 1328.9 842.8 1331.6 836.2 1334.5 829.7 1337.6 823.2 1340.8 816.8 1344.2 810.4 1347.8 804.1 1351.5 797.8 1355.3 791.6 1359.3 785.5 1363.5 779.5 1367.8 773.5 1372.2 767.7 1376.8 761.9 1381.5 756.2 1386.3 750.6 1391.2 745.2 1396.3 739.8 1401.5 734.5 1406.8 729.4 1412.3 724.3 1417.8 719.4 1423.5 714.6 1429.2 709.9 1435.1 705.4 1441.0 701.0 1447.1 696.7 1453.2 692.6 1459.4 688.6 1465.7 684.7 1472.0 681.0 1478.4 677.5 1484.9 674.1 1491.4 670.8 1498.0 667.8 1504.7 664.8 1511.4 662.1 1518.1 659.5 1524.9 657.0 1531.7 654.7 1538.6 652.6 1545.4 650.7 1552.3 648.9 1559.2 647.3 1566.1 645.9 1573.0 644.6 1579.9 643.6 1586.8 642.7 1593.7 641.9 1600.6 641.4 1607.4 641.0 1614.2 640.8 1621.0 640.8 1627.8 640.9 1634.5 641.3 1641.2 641.8 1647.9 642.5 1654.5 643.3 1661.0 644.4 1667.5 645.6 1673.9 647.0 1680.2 648.5 1686.5 650.3 1692.6 652.2 1698.8 654.2 1704.8 656.5 1710.7 658.9 1716.5 661.4 1722.3 664.2 1727.9 667.1 1733.4 670.1 1738.8 673.3 1744.1 676.7 1749.3 680.2 1754.3 683.9 1759.3 687.7 1764.1 691.6 1768.8 695.7 1773.3 700.0 1777.7 704.3L1781.1 709.2 1784.4 714.4 1787.5 719.7 1790.5 725.1 1793.3 730.6 1795.9 736.2 1798.4 741.9 1800.7 747.7 1802.8 753.6 1804.8 759.5 1806.5 765.6 1808.1 771.7 1809.6 777.9 1810.8 784.1 1811.9 790.4 1812.8 796.8 1813.5 803.2 1814.0 809.7 1814.4 816.2 1814.6 822.8 1814.6 829.4 1814.4 836.0 1814.0 842.7 1813.4 849.4 1812.7 856.0 1811.8 862.8 1810.7 869.5 1809.4 876.2 1808.0 882.9 1806.4 889.6 1804.6 896.3 1802.6 903.0 1800.5 909.7 1798.2 916.3 1795.7 922.9 1793.0 929.5 1790.2 936.1 1787.2 942.6 1784.1 949.0 1780.8 955.4 1777.3 961.8 1773.7 968.1 1769.9 974.3 1766.0 980.5 1761.9 986.6 1757.7 992.6 1753.4 998.5 1748.9 1004.4 1744.3 1010.1 1739.5 1015.8 1734.6 1021.4 1729.6 1026.8 1724.4 1032.2 1719.2 1037.5 1713.8 1042.6 1708.3 1047.6 1702.7 1052.5 1697.0 1057.3 1691.2 1062.0 1685.3 1066.5 1679.4 1070.9 1673.3 1075.2 1667.1 1079.4 1660.9 1083.3 1654.6 1087.2 1648.2 1090.9 1641.7 1094.5 1635.2 1097.9 1628.6 1101.1 1622.0 1104.2 1615.3 1107.2 1608.6 1110.0 1601.9 1112.6 1595.1 1115.0 1588.2 1117.3 1581.4 1119.5 1574.5 1121.4 1567.6 1123.2 1560.7 1124.8 1553.8 1126.3 1546.9 1127.6 1540.0 1128.7 1533.1 1129.6 1526.2 1130.4 1519.4 1131.0 1512.5 1131.4 1505.7 1131.6 1498.9 1131.7 1492.1 1131.5 1485.4 1131.2 1478.7 1130.8 1472.1 1130.1 1465.6 1129.3 1459.1 1128.3 1452.6 1127.1 1446.2 1125.8 1439.9 1124.3 1433.7 1122.6 1427.5 1120.7 1421.5 1118.7 1415.5 1116.5 1409.6 1114.2 1403.8 1111.7 1398.1 1109.0 1392.5 1106.1 1387.1 1103.1 1381.7 1100.0 1376.4 1096.7 1371.3 1093.2 1366.3 1089.6 1361.4 1085.8 1356.7 1081.9 1354.5 1079.8Z" clip-rule="evenodd"/></clipPath>
<clipPath id="coneclip"><path d="M990.7 481.3C990.6 479.7 989.6 475.8 990.2 471.9C990.8 468.0 991.6 462.8 994.2 457.7C996.8 452.6 1000.5 446.5 1006.0 441.2C1011.5 435.9 1019.4 430.2 1027.2 425.9C1035.0 421.6 1044.9 417.9 1053.1 415.3C1061.3 412.7 1069.5 411.3 1076.6 410.1C1083.7 408.9 1089.6 408.4 1095.5 408.3C1101.4 408.2 1106.9 408.4 1112.0 409.4C1117.1 410.4 1121.2 411.8 1126.1 414.2C1131.0 416.6 1138.9 422.0 1141.4 423.6 L1250.4 953.9 L1190.3 970.6 Z"/></clipPath>
<linearGradient id="innerg" gradientUnits="userSpaceOnUse" x1="1815" y1="800" x2="1500" y2="1140"><stop offset="0" stop-color="#768e98"/><stop offset=".35" stop-color="#7e97a2"/><stop offset=".7" stop-color="#94b1bd"/><stop offset="1" stop-color="#a2c2ce"/></linearGradient>
<filter id="b2" x="-5%" y="-5%" width="110%" height="110%"><feGaussianBlur stdDeviation="1.6"/></filter>
<filter id="b3" filterUnits="userSpaceOnUse" x="1100" y="450" width="900" height="900"><feGaussianBlur stdDeviation="5"/></filter>
<filter id="b1" x="-5%" y="-5%" width="110%" height="110%"><feGaussianBlur stdDeviation="0.8"/></filter></defs>
<defs><clipPath id="innerclip"><path d="M1777.7 704.3 1782.0 708.9 1786.1 713.5 1790.0 718.3 1793.9 723.1 1797.5 728.2 1801.1 733.3 1804.4 738.5 1807.6 743.9 1810.6 749.3 1813.5 754.9 1816.2 760.6 1818.8 766.3 1821.1 772.2 1823.3 778.1 1825.4 784.1 1827.2 790.2 1828.9 796.4 1830.4 802.6 1831.7 808.9 1832.9 815.3 1833.9 821.7 1834.7 828.2 1835.3 834.7 1835.7 841.3 1836.0 847.9 1836.0 854.5 1835.9 861.2 1835.6 867.9 1835.2 874.6 1834.5 881.4 1833.7 888.1 1832.7 894.9 1831.5 901.6 1830.1 908.4 1828.6 915.2 1826.9 921.9 1825.0 928.6 1822.9 935.3 1820.7 942.0 1818.3 948.7 1815.7 955.3 1813.0 961.9 1810.0 968.4 1807.0 974.9 1803.7 981.3 1800.4 987.7 1796.8 994.0 1793.1 1000.3 1789.3 1006.5 1785.3 1012.6 1781.1 1018.6 1776.8 1024.6 1772.4 1030.4 1767.8 1036.2 1763.1 1041.9 1758.3 1047.5 1753.3 1052.9 1748.3 1058.3 1743.1 1063.6 1737.7 1068.7 1732.3 1073.8 1726.8 1078.7 1721.1 1083.5 1715.4 1088.2 1709.5 1092.7 1703.6 1097.1 1697.5 1101.4 1691.4 1105.5 1685.2 1109.5 1678.9 1113.4 1672.6 1117.1 1666.2 1120.6 1659.7 1124.0 1653.1 1127.3 1646.5 1130.3 1639.9 1133.3 1633.2 1136.0 1626.4 1138.6 1619.7 1141.1 1612.9 1143.4 1606.0 1145.5 1599.2 1147.4 1592.3 1149.2 1585.4 1150.8 1578.5 1152.2 1571.6 1153.5 1564.7 1154.5 1557.8 1155.4 1550.9 1156.2 1544.0 1156.7 1537.2 1157.1 1530.3 1157.3 1523.5 1157.3 1516.8 1157.2 1510.0 1156.8 1503.4 1156.3 1496.7 1155.6 1490.1 1154.8 1483.6 1153.7 1477.1 1152.5 1470.7 1151.1 1464.4 1149.6 1458.1 1147.8 1451.9 1145.9 1445.8 1143.9 1439.8 1141.6 1433.9 1139.2 1428.1 1136.7 1422.3 1133.9 1416.7 1131.0 1411.2 1128.0 1405.8 1124.8 1400.5 1121.4 1395.3 1117.9 1390.2 1114.2 1385.3 1110.4 1380.5 1106.5 1375.8 1102.4 1371.3 1098.1 1366.9 1093.8 1362.6 1089.2 1358.5 1084.6 1354.5 1079.8L1354.5 1079.8 1356.7 1081.9 1361.4 1085.8 1366.3 1089.6 1371.3 1093.2 1376.4 1096.7 1381.7 1100.0 1387.1 1103.1 1392.5 1106.1 1398.1 1109.0 1403.8 1111.7 1409.6 1114.2 1415.5 1116.5 1421.5 1118.7 1427.5 1120.7 1433.7 1122.6 1439.9 1124.3 1446.2 1125.8 1452.6 1127.1 1459.1 1128.3 1465.6 1129.3 1472.1 1130.1 1478.7 1130.8 1485.4 1131.2 1492.1 1131.5 1498.9 1131.7 1505.7 1131.6 1512.5 1131.4 1519.4 1131.0 1526.2 1130.4 1533.1 1129.6 1540.0 1128.7 1546.9 1127.6 1553.8 1126.3 1560.7 1124.8 1567.6 1123.2 1574.5 1121.4 1581.4 1119.5 1588.2 1117.3 1595.1 1115.0 1601.9 1112.6 1608.6 1110.0 1615.3 1107.2 1622.0 1104.2 1628.6 1101.1 1635.2 1097.9 1641.7 1094.5 1648.2 1090.9 1654.6 1087.2 1660.9 1083.3 1667.1 1079.4 1673.3 1075.2 1679.4 1070.9 1685.3 1066.5 1691.2 1062.0 1697.0 1057.3 1702.7 1052.5 1708.3 1047.6 1713.8 1042.6 1719.2 1037.5 1724.4 1032.2 1729.6 1026.8 1734.6 1021.4 1739.5 1015.8 1744.3 1010.1 1748.9 1004.4 1753.4 998.5 1757.7 992.6 1761.9 986.6 1766.0 980.5 1769.9 974.3 1773.7 968.1 1777.3 961.8 1780.8 955.4 1784.1 949.0 1787.2 942.6 1790.2 936.1 1793.0 929.5 1795.7 922.9 1798.2 916.3 1800.5 909.7 1802.6 903.0 1804.6 896.3 1806.4 889.6 1808.0 882.9 1809.4 876.2 1810.7 869.5 1811.8 862.8 1812.7 856.0 1813.4 849.4 1814.0 842.7 1814.4 836.0 1814.6 829.4 1814.6 822.8 1814.4 816.2 1814.0 809.7 1813.5 803.2 1812.8 796.8 1811.9 790.4 1810.8 784.1 1809.6 777.9 1808.1 771.7 1806.5 765.6 1804.8 759.5 1802.8 753.6 1800.7 747.7 1798.4 741.9 1795.9 736.2 1793.3 730.6 1790.5 725.1 1787.5 719.7 1784.4 714.4 1781.1 709.2 1777.7 704.3Z"/></clipPath></defs>
<g clip-path="url(#innerclip)"><g filter="url(#b3)">
<path d="M1560 890L1770.0 526.3L1801.3 546.3Z" fill="#768e98"/>
<path d="M1560 890L1796.5 542.9L1826.3 565.2Z" fill="#768e98"/>
<path d="M1560 890L1821.7 561.5L1849.7 585.9Z" fill="#768e98"/>
<path d="M1560 890L1845.4 581.9L1871.5 608.3Z" fill="#768e98"/>
<path d="M1560 890L1867.6 604.0L1891.7 632.3Z" fill="#768e98"/>
<path d="M1560 890L1888.0 627.7L1909.9 657.7Z" fill="#768e98"/>
<path d="M1560 890L1906.7 652.9L1926.3 684.4Z" fill="#768e98"/>
<path d="M1560 890L1923.3 679.3L1940.5 712.3Z" fill="#768e98"/>
<path d="M1560 890L1938.0 707.0L1952.7 741.1Z" fill="#768e98"/>
<path d="M1560 890L1950.6 735.6L1962.7 770.8Z" fill="#768e98"/>
<path d="M1560 890L1961.0 765.2L1970.5 801.1Z" fill="#768e98"/>
<path d="M1560 890L1969.2 795.4L1976.0 831.9Z" fill="#768e98"/>
<path d="M1560 890L1975.1 826.1L1979.1 863.0Z" fill="#768e98"/>
<path d="M1560 890L1978.7 857.2L1980.0 894.3Z" fill="#768e98"/>
<path d="M1560 890L1980.0 888.5L1978.5 925.6Z" fill="#778f99"/>
<path d="M1560 890L1978.9 919.8L1974.7 956.7Z" fill="#78909a"/>
<path d="M1560 890L1975.6 950.9L1968.6 987.4Z" fill="#79929c"/>
<path d="M1560 890L1969.9 981.6L1960.2 1017.5Z" fill="#7b939e"/>
<path d="M1560 890L1961.9 1011.9L1949.6 1047.0Z" fill="#7c949f"/>
<path d="M1560 890L1951.7 1041.5L1936.8 1075.5Z" fill="#7d96a1"/>
<path d="M1560 890L1939.3 1070.3L1921.9 1103.1Z" fill="#7e97a2"/>
<path d="M1560 890L1924.9 1098.0L1905.1 1129.4Z" fill="#819aa5"/>
<path d="M1560 890L1908.4 1124.6L1886.3 1154.5Z" fill="#849ea9"/>
<path d="M1560 890L1889.9 1149.9L1865.7 1178.0Z" fill="#88a2ae"/>
<path d="M1560 890L1869.7 1173.7L1843.4 1200.0Z" fill="#8ba6b2"/>
<path d="M1560 890L1847.7 1196.0L1819.5 1220.2Z" fill="#8eabb6"/>
<path d="M1560 890L1824.1 1216.6L1794.2 1238.7Z" fill="#92afbb"/>
<path d="M1560 890L1799.0 1235.4L1767.6 1255.1Z" fill="#94b2be"/>
<path d="M1560 890L1772.6 1252.2L1739.8 1269.6Z" fill="#97b5c1"/>
<path d="M1560 890L1745.1 1267.0L1711.0 1281.9Z" fill="#99b7c3"/>
<path d="M1560 890L1716.5 1279.8L1681.4 1292.1Z" fill="#9bbac6"/>
<path d="M1560 890L1687.0 1290.3L1651.1 1300.0Z" fill="#9dbdc9"/>
<path d="M1560 890L1656.9 1298.7L1620.4 1305.6Z" fill="#a0bfcb"/>
<path d="M1560 890L1626.2 1304.8L1589.2 1309.0Z" fill="#a1c1cd"/>
<path d="M1560 890L1595.1 1308.5L1558.0 1310.0Z" fill="#a2c2ce"/>
<path d="M1560 890L1563.8 1310.0L1526.7 1308.7Z" fill="#a2c2ce"/>
<path d="M1560 890L1532.5 1309.1L1495.6 1305.0Z" fill="#a3c3cf"/>
<path d="M1560 890L1501.4 1305.9L1464.9 1299.1Z" fill="#a2c1cd"/>
<path d="M1560 890L1470.6 1300.4L1434.7 1290.9Z" fill="#a0c0cc"/>
<path d="M1560 890L1440.3 1292.6L1405.2 1280.4Z" fill="#9fbfcb"/>
<path d="M1560 890L1410.6 1282.5L1376.5 1267.8Z" fill="#9ebdc9"/>
<path d="M1560 890L1381.8 1270.3L1348.9 1253.1Z" fill="#9dbcc8"/>
<path d="M1560 890L1354.0 1256.0L1322.4 1236.4Z" fill="#9cbbc7"/>
<path d="M1560 890L1327.3 1239.6L1297.3 1217.7Z" fill="#9ab9c5"/>
<path d="M1560 890L1301.9 1221.3L1273.6 1197.2Z" fill="#98b6c2"/>
<path d="M1560 890L1277.9 1201.2L1251.5 1175.1Z" fill="#95b3bf"/>
<path d="M1560 890L1255.6 1179.3L1231.2 1151.3Z" fill="#93afbb"/>
<path d="M1560 890L1234.9 1155.9L1212.6 1126.1Z" fill="#91adb9"/>
</g></g>
<path d="M1259.1 942.8 1258.0 935.1 1257.1 927.3 1256.6 919.4 1256.2 911.4 1256.2 903.4 1256.4 895.3 1256.9 887.1 1257.7 878.9 1258.8 870.6 1260.1 862.3 1261.7 854.0 1263.5 845.7 1265.6 837.4 1268.0 829.1 1270.6 820.8 1273.5 812.5 1276.6 804.2 1280.0 796.0 1283.7 787.9 1287.5 779.8 1291.6 771.7 1296.0 763.7 1300.5 755.9 1305.3 748.1 1310.3 740.3 1315.5 732.7 1321.0 725.2 1326.6 717.8 1332.4 710.6 1338.4 703.4 1344.6 696.4 1351.0 689.6 1357.6 682.9 1364.3 676.3 1371.2 669.9 1378.2 663.6 1385.4 657.6 1392.7 651.7 1400.2 645.9 1407.8 640.4 1415.5 635.0 1423.3 629.9 1431.3 624.9 1439.3 620.1 1447.5 615.5 1455.7 611.2 1464.0 607.0 1472.4 603.0 1480.8 599.3 1489.3 595.8 1497.9 592.5 1506.5 589.4 1515.1 586.5 1523.8 583.9 1532.5 581.5 1541.2 579.3 1549.9 577.3 1558.7 575.5 1567.4 574.0 1576.1 572.8 1584.8 571.7 1593.5 570.9 1602.2 570.3 1610.8 569.9 1619.4 569.8 1627.9 569.8 1636.4 570.1 1644.9 570.7 1653.2 571.4 1661.5 572.4 1669.7 573.6 1677.9 575.0 1685.9 576.7 1693.9 578.5 1701.7 580.6 1709.5 582.9 1717.1 585.4 1724.7 588.1 1732.1 591.0 1739.4 594.1 1746.5 597.4 1753.6 600.9 1760.5 604.5 1767.2 608.4 1773.9 612.5 1780.3 616.7 1786.7 621.1 1792.8 625.7 1798.8 630.5 1804.7 635.4 1810.4 640.5 1815.9 645.8 1821.2 651.2 1826.4 656.8 1831.4 662.5 1836.2 668.4 1840.8 674.4 1845.3 680.5 1849.5 686.8 1853.6 693.2 1857.5 699.7 1861.2 706.3 1864.7 713.1 1868.0 719.9 1871.1 726.9 1874.0 734.0 1876.7 741.1 1879.2 748.4 1881.5 755.7 1883.6 763.1 1885.5 770.6 1887.2 778.2 1888.7 785.9 1890.0 793.6 1891.1 801.3 1892.0 809.1 1892.6 817.0 1893.1 824.9 1893.4 832.9 1893.4 840.9 1893.3 848.9 1892.9 856.9 1892.4 865.0 1891.6 873.1 1890.7 881.2 1889.5 889.3 1888.1 897.4 1886.6 905.5 1884.8 913.6 1882.8 921.7 1880.7 929.7 1878.3 937.8 1875.8 945.8 1873.0 953.8 1870.1 961.7 1867.0 969.7 1863.6 977.5 1860.1 985.4 1856.5 993.1 1852.6 1000.8 1848.6 1008.5 1844.3 1016.1 1839.9 1023.6 1835.4 1031.1 1830.6 1038.4 1825.7 1045.7 1820.7 1052.9 1815.4 1060.0 1810.0 1067.0 1804.5 1073.9 1798.8 1080.7 1792.9 1087.4 1786.9 1094.0 1780.7 1100.4 1774.5 1106.8 1768.0 1113.0 1761.5 1119.1 1754.8 1125.0 1747.9 1130.9 1741.0 1136.5 1733.9 1142.1 1726.8 1147.5 1719.5 1152.7 1712.1 1157.8 1704.6 1162.7 1697.0 1167.5 1689.3 1172.0 1681.5 1176.5 1673.6 1180.7 1665.7 1184.8 1657.7 1188.7 1649.6 1192.4 1641.4 1196.0 1633.2 1199.3 1624.9 1202.5 1616.5 1205.5 1608.2 1208.3 1599.7 1210.9 1591.3 1213.3 1582.8 1215.5 1574.3 1217.5 1565.7 1219.2 1557.2 1220.8 1548.6 1222.2 1540.0 1223.4 1531.4 1224.4 1522.9 1225.1 1514.3 1225.7 1505.7 1226.0 1497.2 1226.1 1488.7 1226.0 1480.2 1225.7 1471.8 1225.2 1463.4 1224.5 1455.1 1223.5 1446.8 1222.4 1438.5 1221.0 1430.4 1219.4 1422.3 1217.6 1414.2 1215.6 1406.3 1213.4 1398.4 1210.9 1390.6 1208.3 1382.9 1205.5 1375.3 1202.4 1367.8 1199.2 1360.4 1195.7 1353.1 1192.0 1345.9 1188.2 1338.9 1184.1 1331.9 1179.9 1325.1 1175.4 1318.5 1170.8 1311.9 1165.9 1305.5 1160.9 1299.2 1155.7 1293.1 1150.4 1287.1 1144.8 1281.3 1139.1 1275.6 1133.2 1270.1 1127.1 1264.7 1120.8 1259.5 1114.4 1254.4 1107.8 1249.5 1101.1 1244.8 1094.2 1240.2 1087.2 1235.9 1080.0 1231.6 1072.6 1227.6 1065.1 1223.7 1057.5 1220.0 1049.7 1216.5 1041.8 1213.1 1033.8 1210.0 1025.6 1207.0 1017.3 1204.2 1008.8 1201.5 1000.3 1199.1 991.6 1196.8 982.7L1195.6 983L1212 986L1259.2 965.8L1257.4 943Z M1354.5 1079.8 1350.7 1075.0 1347.0 1069.9 1343.5 1064.8 1340.2 1059.6 1337.0 1054.2 1333.9 1048.8 1331.1 1043.2 1328.4 1037.5 1325.8 1031.8 1323.4 1025.9 1321.2 1020.0 1319.2 1014.0 1317.3 1007.9 1315.7 1001.7 1314.2 995.5 1312.8 989.2 1311.7 982.8 1310.7 976.4 1309.9 969.9 1309.3 963.4 1308.9 956.8 1308.6 950.2 1308.5 943.6 1308.7 936.9 1308.9 930.2 1309.4 923.5 1310.1 916.7 1310.9 910.0 1311.9 903.2 1313.1 896.5 1314.5 889.7 1316.0 882.9 1317.7 876.2 1319.6 869.5 1321.7 862.8 1323.9 856.1 1326.3 849.4 1328.9 842.8 1331.6 836.2 1334.5 829.7 1337.6 823.2 1340.8 816.8 1344.2 810.4 1347.8 804.1 1351.5 797.8 1355.3 791.6 1359.3 785.5 1363.5 779.5 1367.8 773.5 1372.2 767.7 1376.8 761.9 1381.5 756.2 1386.3 750.6 1391.2 745.2 1396.3 739.8 1401.5 734.5 1406.8 729.4 1412.3 724.3 1417.8 719.4 1423.5 714.6 1429.2 709.9 1435.1 705.4 1441.0 701.0 1447.1 696.7 1453.2 692.6 1459.4 688.6 1465.7 684.7 1472.0 681.0 1478.4 677.5 1484.9 674.1 1491.4 670.8 1498.0 667.8 1504.7 664.8 1511.4 662.1 1518.1 659.5 1524.9 657.0 1531.7 654.7 1538.6 652.6 1545.4 650.7 1552.3 648.9 1559.2 647.3 1566.1 645.9 1573.0 644.6 1579.9 643.6 1586.8 642.7 1593.7 641.9 1600.6 641.4 1607.4 641.0 1614.2 640.8 1621.0 640.8 1627.8 640.9 1634.5 641.3 1641.2 641.8 1647.9 642.5 1654.5 643.3 1661.0 644.4 1667.5 645.6 1673.9 647.0 1680.2 648.5 1686.5 650.3 1692.6 652.2 1698.8 654.2 1704.8 656.5 1710.7 658.9 1716.5 661.4 1722.3 664.2 1727.9 667.1 1733.4 670.1 1738.8 673.3 1744.1 676.7 1749.3 680.2 1754.3 683.9 1759.3 687.7 1764.1 691.6 1768.8 695.7 1773.3 700.0 1777.7 704.3L1782.0 708.9 1786.1 713.5 1790.0 718.3 1793.9 723.1 1797.5 728.2 1801.1 733.3 1804.4 738.5 1807.6 743.9 1810.6 749.3 1813.5 754.9 1816.2 760.6 1818.8 766.3 1821.1 772.2 1823.3 778.1 1825.4 784.1 1827.2 790.2 1828.9 796.4 1830.4 802.6 1831.7 808.9 1832.9 815.3 1833.9 821.7 1834.7 828.2 1835.3 834.7 1835.7 841.3 1836.0 847.9 1836.0 854.5 1835.9 861.2 1835.6 867.9 1835.2 874.6 1834.5 881.4 1833.7 888.1 1832.7 894.9 1831.5 901.6 1830.1 908.4 1828.6 915.2 1826.9 921.9 1825.0 928.6 1822.9 935.3 1820.7 942.0 1818.3 948.7 1815.7 955.3 1813.0 961.9 1810.0 968.4 1807.0 974.9 1803.7 981.3 1800.4 987.7 1796.8 994.0 1793.1 1000.3 1789.3 1006.5 1785.3 1012.6 1781.1 1018.6 1776.8 1024.6 1772.4 1030.4 1767.8 1036.2 1763.1 1041.9 1758.3 1047.5 1753.3 1052.9 1748.3 1058.3 1743.1 1063.6 1737.7 1068.7 1732.3 1073.8 1726.8 1078.7 1721.1 1083.5 1715.4 1088.2 1709.5 1092.7 1703.6 1097.1 1697.5 1101.4 1691.4 1105.5 1685.2 1109.5 1678.9 1113.4 1672.6 1117.1 1666.2 1120.6 1659.7 1124.0 1653.1 1127.3 1646.5 1130.3 1639.9 1133.3 1633.2 1136.0 1626.4 1138.6 1619.7 1141.1 1612.9 1143.4 1606.0 1145.5 1599.2 1147.4 1592.3 1149.2 1585.4 1150.8 1578.5 1152.2 1571.6 1153.5 1564.7 1154.5 1557.8 1155.4 1550.9 1156.2 1544.0 1156.7 1537.2 1157.1 1530.3 1157.3 1523.5 1157.3 1516.8 1157.2 1510.0 1156.8 1503.4 1156.3 1496.7 1155.6 1490.1 1154.8 1483.6 1153.7 1477.1 1152.5 1470.7 1151.1 1464.4 1149.6 1458.1 1147.8 1451.9 1145.9 1445.8 1143.9 1439.8 1141.6 1433.9 1139.2 1428.1 1136.7 1422.3 1133.9 1416.7 1131.0 1411.2 1128.0 1405.8 1124.8 1400.5 1121.4 1395.3 1117.9 1390.2 1114.2 1385.3 1110.4 1380.5 1106.5 1375.8 1102.4 1371.3 1098.1 1366.9 1093.8 1362.6 1089.2 1358.5 1084.6 1354.5 1079.8Z" fill="#89a5b0" fill-rule="evenodd"/>
<g clip-path="url(#ringclip)">
<path d="M1265.7 945.9 1265.2 938.9 1264.8 931.7 1264.7 924.6 1264.8 917.3 1265.0 910.1 1265.5 902.7 1266.2 895.4L1236.3 892.3 1235.6 900.4 1235.1 908.6 1234.8 916.7 1234.7 924.7 1234.9 932.7 1235.2 940.7 1235.8 948.2Z" fill="#7e98a3"/>
<path d="M1265.5 902.7 1266.2 895.4 1267.0 888.0 1268.1 880.6 1269.4 873.2 1270.8 865.8 1272.5 858.4 1274.4 850.9L1245.4 843.3 1243.3 851.4 1241.5 859.6 1239.9 867.8 1238.5 876.0 1237.3 884.1 1236.3 892.3 1235.6 900.4Z" fill="#809aa5"/>
<path d="M1272.5 858.4 1274.4 850.9 1276.4 843.5 1278.7 836.1 1281.1 828.7 1283.8 821.3 1286.6 813.9 1289.6 806.6L1262.0 794.8 1258.7 802.8 1255.7 810.8 1252.8 818.9 1250.1 827.0 1247.6 835.1 1245.4 843.3 1243.3 851.4Z" fill="#829ca7"/>
<path d="M1286.6 813.9 1289.6 806.6 1292.8 799.3 1296.2 792.1 1299.8 784.9 1303.6 777.8 1307.5 770.7 1311.6 763.7L1285.9 748.2 1281.5 755.8 1277.2 763.5 1273.1 771.2 1269.2 779.0 1265.5 786.9 1262.0 794.8 1258.7 802.8Z" fill="#8aa6b1"/>
<path d="M1307.5 770.7 1311.6 763.7 1315.9 756.7 1320.4 749.8 1325.0 743.0 1329.8 736.3 1334.7 729.7 1339.8 723.2L1316.4 704.5 1310.9 711.5 1305.5 718.7 1300.4 725.9 1295.4 733.3 1290.6 740.7 1285.9 748.2 1281.5 755.8Z" fill="#8ca7b3"/>
<path d="M1334.7 729.7 1339.8 723.2 1345.1 716.7 1350.5 710.4 1356.0 704.2 1361.7 698.0 1367.5 692.0 1373.5 686.1L1352.7 664.6 1346.2 670.9 1340.0 677.4 1333.8 684.0 1327.9 690.7 1322.0 697.5 1316.4 704.5 1310.9 711.5Z" fill="#8da9b4"/>
<path d="M1367.5 692.0 1373.5 686.1 1379.6 680.4 1385.8 674.7 1392.2 669.2 1398.6 663.8 1405.2 658.6 1411.9 653.5L1394.0 629.4 1386.8 634.9 1379.7 640.6 1372.7 646.4 1365.9 652.3 1359.2 658.4 1352.7 664.6 1346.2 670.9Z" fill="#8faab6"/>
<path d="M1405.2 658.6 1411.9 653.5 1418.7 648.5 1425.6 643.7 1432.6 639.1 1439.6 634.6 1446.8 630.2 1454.1 626.0L1439.3 599.9 1431.5 604.4 1423.8 609.1 1416.2 613.9 1408.7 618.9 1401.3 624.1 1394.0 629.4 1386.8 634.9Z" fill="#90acb8"/>
<path d="M1446.8 630.2 1454.1 626.0 1461.4 622.0 1468.8 618.1 1476.2 614.5 1483.8 610.9 1491.4 607.6 1499.0 604.4L1487.8 576.6 1479.5 580.0 1471.4 583.6 1463.2 587.4 1455.2 591.4 1447.2 595.6 1439.3 599.9 1431.5 604.4Z" fill="#92aeba"/>
<path d="M1491.4 607.6 1499.0 604.4 1506.7 601.4 1514.4 598.6 1522.2 596.0 1530.0 593.5 1537.8 591.2 1545.6 589.1L1538.3 560.1 1529.7 562.3 1521.3 564.8 1512.8 567.4 1504.4 570.3 1496.1 573.3 1487.8 576.6 1479.5 580.0Z" fill="#93b0bc"/>
<path d="M1537.8 591.2 1545.6 589.1 1553.5 587.2 1561.4 585.5 1569.3 584.0 1577.2 582.6 1585.1 581.5 1592.9 580.5L1589.7 550.7 1581.1 551.8 1572.5 553.0 1563.9 554.5 1555.3 556.1 1546.8 558.0 1538.3 560.1 1529.7 562.3Z" fill="#95b2be"/>
<path d="M1585.1 581.5 1592.9 580.5 1600.8 579.8 1608.6 579.2 1616.5 578.8 1624.3 578.6 1632.0 578.6 1639.8 578.8L1640.9 548.8 1632.4 548.6 1623.9 548.6 1615.4 548.8 1606.8 549.2 1598.2 549.9 1589.7 550.7 1581.1 551.8Z" fill="#95b2be"/>
<path d="M1632.0 578.6 1639.8 578.8 1647.4 579.2 1655.1 579.8 1662.7 580.5 1670.2 581.5 1677.7 582.6 1685.1 584.0L1690.8 554.5 1682.6 553.1 1674.4 551.8 1666.1 550.7 1657.7 549.9 1649.3 549.3 1640.9 548.8 1632.4 548.6Z" fill="#94b1bd"/>
<path d="M1677.7 582.6 1685.1 584.0 1692.4 585.5 1699.6 587.2 1706.8 589.1 1713.9 591.2 1720.9 593.5 1727.8 595.9L1738.2 567.8 1730.5 565.1 1722.8 562.5 1714.9 560.2 1706.9 558.1 1698.9 556.2 1690.8 554.5 1682.6 553.1Z" fill="#94b1bd"/>
<path d="M1720.9 593.5 1727.8 595.9 1734.6 598.5 1741.3 601.4 1747.9 604.3 1754.4 607.5 1760.8 610.8 1767.0 614.3L1782.0 588.3 1775.0 584.4 1767.9 580.7 1760.7 577.2 1753.3 573.8 1745.8 570.7 1738.2 567.8 1730.5 565.1Z" fill="#94b1bd"/>
<path d="M1760.8 610.8 1767.0 614.3 1773.2 618.0 1779.2 621.7 1785.2 625.6 1791.1 629.6 1796.8 633.7 1802.4 638.0L1820.9 614.4 1814.7 609.6 1808.3 605.0 1801.8 600.6 1795.3 596.4 1788.7 592.3 1782.0 588.3 1775.0 584.4Z" fill="#93b0bc"/>
<path d="M1796.8 633.7 1802.4 638.0 1808.0 642.5 1813.3 647.0 1818.7 651.7 1823.9 656.5 1828.9 661.4 1833.8 666.5L1855.9 646.3 1850.3 640.4 1844.5 634.7 1838.7 629.3 1832.9 624.3 1827.1 619.3 1820.9 614.4 1814.7 609.6Z" fill="#93b0bc"/>
<path d="M1828.9 661.4 1833.8 666.5 1838.4 671.8 1842.9 677.3 1847.2 682.9 1851.3 688.6 1855.3 694.5 1859.0 700.6L1884.8 685.3 1880.5 678.4 1876.0 671.6 1871.3 665.0 1866.4 658.6 1861.2 652.3 1855.9 646.3 1850.3 640.4Z" fill="#91aeba"/>
<path d="M1855.3 694.5 1859.0 700.6 1862.5 706.7 1865.8 713.0 1868.9 719.4 1871.9 725.9 1874.6 732.5 1877.2 739.2L1905.3 728.8 1902.5 721.4 1899.4 714.0 1896.1 706.7 1892.6 699.4 1888.8 692.3 1884.8 685.3 1880.5 678.4Z" fill="#90adb9"/>
<path d="M1874.6 732.5 1877.2 739.2 1879.6 746.0 1881.8 752.8 1883.8 759.8 1885.7 766.8 1887.4 773.8L1916.6 766.8 1914.8 759.4 1912.7 751.7 1910.5 744.0 1908.0 736.4 1905.3 728.8 1902.5 721.4Z" fill="#8facb8"/>
<g filter="url(#b1)" fill="none" stroke-linecap="butt">
<path d="M1267.1 945.8 1266.6 938.8 1266.2 931.7 1266.1 924.6 1266.1 917.4 1266.4 910.1" stroke="#809aa5" stroke-width="4.0"/>
<path d="M1266.4 910.1 1266.9 902.9 1267.5 895.5 1268.4 888.2 1269.4 880.8 1270.7 873.5" stroke="#819ba5" stroke-width="4.0"/>
<path d="M1270.7 873.5 1272.2 866.1 1273.8 858.7 1275.7 851.3 1277.7 843.9 1280.0 836.5" stroke="#819ba5" stroke-width="4.0"/>
<path d="M1280.0 836.5 1282.4 829.1 1285.1 821.8 1287.9 814.5 1290.9 807.2 1294.1 799.9" stroke="#85a0aa" stroke-width="4.0"/>
<path d="M1294.1 799.9 1297.5 792.7 1301.0 785.5 1304.8 778.4 1308.7 771.4 1312.8 764.4" stroke="#8ca8b3" stroke-width="4.0"/>
<path d="M1312.8 764.4 1317.1 757.4 1321.5 750.6 1326.1 743.8 1330.9 737.1 1335.8 730.5" stroke="#8fabb6" stroke-width="3.9"/>
<path d="M1335.8 730.5 1340.9 724.0 1346.1 717.6 1351.5 711.3 1357.0 705.0 1362.7 698.9" stroke="#91aeb9" stroke-width="3.9"/>
<path d="M1362.7 698.9 1368.5 692.9 1374.4 687.1 1380.5 681.3 1386.7 675.7 1393.0 670.2" stroke="#93b0bb" stroke-width="3.8"/>
<path d="M1393.0 670.2 1399.4 664.8 1406.0 659.6 1412.7 654.5 1419.4 649.6 1426.3 644.8" stroke="#95b2be" stroke-width="3.7"/>
<path d="M1426.3 644.8 1433.3 640.1 1440.3 635.6 1447.4 631.3 1454.7 627.1 1462.0 623.1" stroke="#97b5c1" stroke-width="3.6"/>
<path d="M1462.0 623.1 1469.3 619.3 1476.8 615.6 1484.3 612.1 1491.8 608.7 1499.4 605.5" stroke="#99b7c3" stroke-width="3.6"/>
<path d="M1499.4 605.5 1507.1 602.5 1514.8 599.7 1522.5 597.1 1530.3 594.6 1538.1 592.4" stroke="#99b7c3" stroke-width="3.5"/>
<path d="M1538.1 592.4 1545.9 590.3 1553.8 588.4 1561.6 586.7 1569.5 585.2 1577.4 583.8" stroke="#9ab8c4" stroke-width="3.5"/>
<path d="M1577.4 583.8 1585.2 582.7 1593.1 581.7 1600.9 581.0 1608.7 580.4 1616.5 580.0" stroke="#9ab8c4" stroke-width="3.5"/>
<path d="M1616.5 580.0 1624.3 579.8 1632.0 579.8 1639.7 580.0 1647.4 580.4 1655.0 580.9" stroke="#9bb9c5" stroke-width="3.4"/>
<path d="M1655.0 580.9 1662.5 581.7 1670.0 582.7 1677.5 583.8 1684.8 585.1 1692.1 586.6" stroke="#9bb9c5" stroke-width="3.4"/>
<path d="M1692.1 586.6 1699.4 588.3 1706.5 590.2 1713.6 592.2 1720.6 594.5 1727.4 596.9" stroke="#9ab7c3" stroke-width="3.1"/>
<path d="M1727.4 596.9 1734.2 599.5 1740.9 602.3 1747.5 605.2 1754.0 608.4 1760.3 611.7" stroke="#98b6c2" stroke-width="2.9"/>
<path d="M1760.3 611.7 1766.6 615.1 1772.7 618.7 1778.7 622.5 1784.7 626.3 1790.6 630.3" stroke="#97b5c1" stroke-width="2.6"/>
<path d="M1790.6 630.3 1796.3 634.4 1801.9 638.7 1807.4 643.1 1812.8 647.6 1818.1 652.3" stroke="#96b3bf" stroke-width="2.4"/>
<path d="M1818.1 652.3 1823.3 657.0 1828.4 661.9 1833.2 667.0 1837.9 672.3 1842.4 677.7" stroke="#95b2be" stroke-width="2.1"/>
<path d="M1842.4 677.7 1846.7 683.3 1850.8 689.0 1854.7 694.9 1858.4 700.8 1860.6 706.6" stroke="#93b0bc" stroke-width="1.9"/>
<path d="M1860.6 706.6 1864.1 713.4 1867.4 720.2 1870.5 727.1 1873.4 734.2 1876.1 741.3" stroke="#90acb8" stroke-width="1.9"/>
<path d="M1876.1 741.3 1878.6 748.6 1880.9 755.9 1883.0 763.3 1884.9 770.8 1886.6 778.3" stroke="#8ca8b3" stroke-width="1.8"/>
<path d="M1886.6 778.3 1888.1 786.0 1889.4 793.7 1890.5 801.4 1891.4 809.2 1892.1 817.1" stroke="#88a3af" stroke-width="1.7"/>
<path d="M1892.1 817.1 1892.6 824.9 1892.8 832.9 1892.9 840.9 1892.7 848.9 1892.4 856.9" stroke="#849faa" stroke-width="1.6"/>
<path d="M1892.4 856.9 1891.8 864.9 1891.1 873.0 1890.1 881.1 1889.0 889.2 1887.6 897.3" stroke="#819ba6" stroke-width="1.6"/>
<path d="M1887.6 897.3 1886.0 905.4 1884.3 913.4 1882.3 921.5 1880.2 929.6 1877.8 937.6" stroke="#819ba6" stroke-width="1.6"/>
<path d="M1877.8 937.6 1875.3 945.6 1872.5 953.6 1869.6 961.5 1866.5 969.5 1863.2 977.3" stroke="#829da8" stroke-width="1.6"/>
<path d="M1863.2 977.3 1859.7 985.1 1856.0 992.9 1852.1 1000.6 1848.1 1008.2 1843.9 1015.8" stroke="#839eaa" stroke-width="1.6"/>
<path d="M1843.9 1015.8 1839.5 1023.3 1834.9 1030.8 1830.2 1038.1 1825.3 1045.4 1820.2 1052.6" stroke="#84a0ab" stroke-width="1.6"/>
<path d="M1820.2 1052.6 1815.0 1059.7 1809.6 1066.7 1804.1 1073.6 1798.4 1080.4 1792.5 1087.0" stroke="#85a1ad" stroke-width="1.6"/>
<path d="M1792.5 1087.0 1786.5 1093.6 1780.4 1100.1 1774.1 1106.4 1767.7 1112.6 1761.1 1118.7" stroke="#86a2ae" stroke-width="1.6"/>
<path d="M1761.1 1118.7 1754.4 1124.6 1747.6 1130.4 1740.7 1136.1 1733.6 1141.6 1726.4 1147.0" stroke="#86a3af" stroke-width="1.6"/>
<path d="M1726.4 1147.0 1719.2 1152.3 1711.8 1157.3 1704.3 1162.2 1696.7 1167.0 1689.0 1171.6" stroke="#87a4b0" stroke-width="1.6"/>
<path d="M1689.0 1171.6 1681.2 1176.0 1673.4 1180.3 1665.4 1184.3 1657.4 1188.2 1649.3 1192.0" stroke="#88a5b1" stroke-width="1.6"/>
<path d="M1649.3 1192.0 1641.2 1195.5 1633.0 1198.8 1624.7 1202.0 1616.4 1205.0 1608.0 1207.8" stroke="#89a6b2" stroke-width="1.6"/>
<path d="M1608.0 1207.8 1599.6 1210.4 1591.1 1212.7 1582.7 1214.9 1574.1 1216.9 1565.6 1218.7" stroke="#89a6b2" stroke-width="1.6"/>
<path d="M1565.6 1218.7 1557.1 1220.3 1548.5 1221.7 1539.9 1222.9 1531.4 1223.8 1522.8 1224.6" stroke="#8aa7b3" stroke-width="1.6"/>
<path d="M1522.8 1224.6 1514.3 1225.1 1505.7 1225.4 1497.2 1225.5 1488.7 1225.4 1480.3 1225.1" stroke="#88a4b0" stroke-width="1.7"/>
<path d="M1480.3 1225.1 1471.9 1224.5 1463.5 1223.8 1455.2 1222.8 1446.9 1221.7 1438.7 1220.3" stroke="#86a2ad" stroke-width="2.0"/>
<path d="M1438.7 1220.3 1430.5 1218.7 1422.4 1216.9 1414.4 1214.8 1406.5 1212.6 1398.6 1210.2" stroke="#84a0ab" stroke-width="2.3"/>
<path d="M1398.6 1210.2 1390.9 1207.5 1383.2 1204.6 1375.6 1201.6 1368.2 1198.3 1360.8 1194.8" stroke="#829ea8" stroke-width="2.6"/>
<path d="M1360.8 1194.8 1353.6 1191.1 1346.4 1187.3 1339.4 1183.2 1332.5 1178.9 1325.8 1174.4" stroke="#809ba6" stroke-width="3.0"/>
<path d="M1325.8 1174.4 1319.2 1169.8 1312.7 1164.9 1306.3 1159.9 1300.1 1154.7 1294.0 1149.3" stroke="#7e99a3" stroke-width="3.6"/>
<path d="M1294.0 1149.3 1288.1 1143.8 1282.3 1138.1 1276.6 1132.2 1271.1 1126.1 1265.8 1119.9" stroke="#7e99a3" stroke-width="4.1"/>
<path d="M1265.8 1119.9 1260.6 1113.5 1255.6 1107.0 1250.7 1100.3 1246.0 1093.4 1241.5 1086.4" stroke="#7e99a3" stroke-width="4.1"/>
<path d="M1241.5 1086.4 1237.1 1079.3 1232.9 1071.9 1228.9 1064.5 1225.0 1056.9 1221.3 1049.1" stroke="#7e99a3" stroke-width="4.1"/>
<path d="M1221.3 1049.1 1217.8 1041.3 1214.5 1033.2 1211.3 1025.1 1208.3 1016.8 1205.5 1008.4" stroke="#7e99a3" stroke-width="4.1"/>
<path d="M1205.5 1008.4 1202.9 999.8 1200.4 991.2 1198.2 982.4" stroke="#7e99a3" stroke-width="4.1"/>
<path d="M1269.9 945.6 1269.3 938.6 1269.0 931.6 1268.9 924.5 1268.9 917.4 1269.2 910.3" stroke="#829da7" stroke-width="4.0"/>
<path d="M1269.2 910.3 1269.6 903.1 1270.3 895.8 1271.1 888.6 1272.2 881.3 1273.4 874.0" stroke="#839da8" stroke-width="4.0"/>
<path d="M1273.4 874.0 1274.9 866.6 1276.5 859.3 1278.3 852.0 1280.4 844.6 1282.6 837.3" stroke="#839ea8" stroke-width="4.0"/>
<path d="M1282.6 837.3 1285.0 830.0 1287.6 822.7 1290.4 815.5 1293.4 808.2 1296.6 801.0" stroke="#87a2ad" stroke-width="4.0"/>
<path d="M1296.6 801.0 1299.9 793.9 1303.5 786.8 1307.2 779.7 1311.1 772.7 1315.1 765.8" stroke="#8ea9b5" stroke-width="4.0"/>
<path d="M1315.1 765.8 1319.4 758.9 1323.8 752.1 1328.3 745.4 1333.0 738.7 1337.9 732.1" stroke="#91acb8" stroke-width="3.9"/>
<path d="M1337.9 732.1 1342.9 725.7 1348.1 719.3 1353.5 713.0 1359.0 706.8 1364.6 700.7" stroke="#93afbb" stroke-width="3.9"/>
<path d="M1364.6 700.7 1370.3 694.8 1376.2 688.9 1382.3 683.2 1388.4 677.6 1394.7 672.2" stroke="#95b1bd" stroke-width="3.8"/>
<path d="M1394.7 672.2 1401.1 666.8 1407.6 661.6 1414.2 656.6 1420.9 651.6 1427.7 646.9" stroke="#97b4c0" stroke-width="3.7"/>
<path d="M1427.7 646.9 1434.6 642.2 1441.6 637.8 1448.7 633.5 1455.9 629.3 1463.1 625.3" stroke="#99b7c3" stroke-width="3.6"/>
<path d="M1463.1 625.3 1470.5 621.5 1477.8 617.8 1485.3 614.3 1492.8 611.0 1500.4 607.8" stroke="#9bb9c5" stroke-width="3.6"/>
<path d="M1500.4 607.8 1508.0 604.8 1515.6 602.0 1523.3 599.4 1531.0 597.0 1538.8 594.7" stroke="#9bb9c5" stroke-width="3.5"/>
<path d="M1538.8 594.7 1546.5 592.6 1554.3 590.7 1562.1 589.0 1569.9 587.5 1577.7 586.2" stroke="#9cbac6" stroke-width="3.5"/>
<path d="M1577.7 586.2 1585.5 585.0 1593.3 584.1 1601.1 583.3 1608.9 582.8 1616.6 582.4" stroke="#9cbac6" stroke-width="3.5"/>
<path d="M1616.6 582.4 1624.3 582.2 1632.0 582.2 1639.6 582.4 1647.2 582.7 1654.8 583.3" stroke="#9dbbc7" stroke-width="3.4"/>
<path d="M1654.8 583.3 1662.3 584.1 1669.7 585.0 1677.1 586.1 1684.4 587.3 1691.7 588.8" stroke="#9dbbc7" stroke-width="3.4"/>
<path d="M1691.7 588.8 1698.8 590.4 1705.9 592.3 1713.0 594.3 1719.9 596.4 1726.7 598.8" stroke="#9cb9c5" stroke-width="3.1"/>
<path d="M1726.7 598.8 1733.5 601.4 1740.1 604.1 1746.7 607.0 1753.1 610.1 1759.4 613.3" stroke="#9ab8c4" stroke-width="2.9"/>
<path d="M1759.4 613.3 1765.6 616.7 1771.8 620.3 1777.8 624.0 1783.7 627.8 1789.6 631.7" stroke="#99b7c3" stroke-width="2.6"/>
<path d="M1789.6 631.7 1795.3 635.8 1800.9 640.0 1806.4 644.3 1811.8 648.8 1817.1 653.4" stroke="#98b5c1" stroke-width="2.4"/>
<path d="M1817.1 653.4 1822.3 658.1 1827.3 663.0 1832.2 668.0 1836.8 673.2 1841.3 678.5" stroke="#97b4c0" stroke-width="2.1"/>
<path d="M1841.3 678.5 1845.6 684.1 1849.7 689.8 1853.6 695.6 1857.2 701.4 1859.4 707.1" stroke="#95b2be" stroke-width="1.9"/>
<path d="M1859.4 707.1 1862.9 713.9 1866.2 720.7 1869.3 727.6 1872.2 734.7 1874.9 741.8" stroke="#92aeba" stroke-width="1.9"/>
<path d="M1874.9 741.8 1877.5 749.0 1879.8 756.2 1881.9 763.6 1883.8 771.1 1885.5 778.6" stroke="#8eaab6" stroke-width="1.8"/>
<path d="M1885.5 778.6 1887.0 786.2 1888.3 793.8 1889.4 801.5 1890.3 809.3 1891.0 817.1" stroke="#8aa6b1" stroke-width="1.7"/>
<path d="M1891.0 817.1 1891.4 825.0 1891.7 832.9 1891.8 840.9 1891.7 848.8 1891.3 856.8" stroke="#86a2ad" stroke-width="1.6"/>
<path d="M1891.3 856.8 1890.8 864.9 1890.0 872.9 1889.1 881.0 1887.9 889.0 1886.5 897.1" stroke="#839ea9" stroke-width="1.6"/>
<path d="M1886.5 897.1 1885.0 905.2 1883.2 913.2 1881.3 921.3 1879.1 929.3 1876.8 937.3" stroke="#839ea9" stroke-width="1.6"/>
<path d="M1876.8 937.3 1874.2 945.3 1871.5 953.2 1868.6 961.2 1865.5 969.0 1862.2 976.9" stroke="#839faa" stroke-width="1.6"/>
<path d="M1862.2 976.9 1858.7 984.7 1855.0 992.4 1851.2 1000.1 1847.1 1007.7 1842.9 1015.3" stroke="#84a0ab" stroke-width="1.6"/>
<path d="M1842.9 1015.3 1838.6 1022.8 1834.0 1030.2 1829.3 1037.5 1824.4 1044.8 1819.3 1052.0" stroke="#85a1ac" stroke-width="1.6"/>
<path d="M1819.3 1052.0 1814.1 1059.0 1808.8 1066.0 1803.2 1072.9 1797.5 1079.7 1791.7 1086.3" stroke="#86a2ad" stroke-width="1.6"/>
<path d="M1791.7 1086.3 1785.7 1092.9 1779.6 1099.3 1773.3 1105.6 1766.9 1111.8 1760.4 1117.9" stroke="#87a3af" stroke-width="1.6"/>
<path d="M1760.4 1117.9 1753.7 1123.8 1746.9 1129.6 1740.0 1135.3 1733.0 1140.8 1725.8 1146.2" stroke="#87a3af" stroke-width="1.6"/>
<path d="M1725.8 1146.2 1718.5 1151.4 1711.2 1156.4 1703.7 1161.3 1696.1 1166.1 1688.5 1170.7" stroke="#88a4b0" stroke-width="1.6"/>
<path d="M1688.5 1170.7 1680.7 1175.1 1672.9 1179.3 1665.0 1183.4 1657.0 1187.3 1648.9 1191.0" stroke="#88a4b0" stroke-width="1.6"/>
<path d="M1648.9 1191.0 1640.8 1194.5 1632.6 1197.8 1624.3 1201.0 1616.0 1204.0 1607.7 1206.7" stroke="#88a5b1" stroke-width="1.6"/>
<path d="M1607.7 1206.7 1599.3 1209.3 1590.9 1211.7 1582.4 1213.9 1573.9 1215.9 1565.4 1217.7" stroke="#89a6b2" stroke-width="1.6"/>
<path d="M1565.4 1217.7 1556.9 1219.3 1548.3 1220.6 1539.8 1221.8 1531.3 1222.8 1522.7 1223.5" stroke="#89a6b2" stroke-width="1.6"/>
<path d="M1522.7 1223.5 1514.2 1224.0 1505.7 1224.3 1497.2 1224.3 1488.8 1224.2 1480.3 1223.8" stroke="#88a4b0" stroke-width="1.7"/>
<path d="M1480.3 1223.8 1472.0 1223.2 1463.6 1222.4 1455.3 1221.4 1447.1 1220.2 1438.9 1218.8" stroke="#87a3ae" stroke-width="2.0"/>
<path d="M1438.9 1218.8 1430.8 1217.2 1422.8 1215.3 1414.8 1213.3 1407.0 1211.0 1399.2 1208.6" stroke="#86a2ad" stroke-width="2.3"/>
<path d="M1399.2 1208.6 1391.5 1205.9 1383.8 1203.0 1376.3 1199.9 1368.9 1196.6 1361.6 1193.1" stroke="#85a1ab" stroke-width="2.6"/>
<path d="M1361.6 1193.1 1354.5 1189.4 1347.5 1185.4 1340.5 1181.3 1333.8 1177.0 1327.1 1172.5" stroke="#849faa" stroke-width="3.0"/>
<path d="M1327.1 1172.5 1320.6 1167.8 1314.2 1162.9 1307.9 1157.9 1301.8 1152.7 1295.9 1147.3" stroke="#839ea8" stroke-width="3.6"/>
<path d="M1295.9 1147.3 1290.1 1141.7 1284.3 1136.0 1278.7 1130.2 1273.3 1124.2 1268.0 1118.1" stroke="#839ea8" stroke-width="4.1"/>
<path d="M1268.0 1118.1 1262.8 1111.8 1257.8 1105.3 1253.0 1098.6 1248.4 1091.8 1243.9 1084.9" stroke="#839ea8" stroke-width="4.1"/>
<path d="M1243.9 1084.9 1239.5 1077.8 1235.4 1070.5 1231.4 1063.2 1227.6 1055.6 1223.9 1047.9" stroke="#839ea8" stroke-width="4.1"/>
<path d="M1223.9 1047.9 1220.4 1040.1 1217.1 1032.2 1214.0 1024.1 1211.0 1015.9 1208.2 1007.5" stroke="#839ea8" stroke-width="4.1"/>
<path d="M1208.2 1007.5 1205.6 999.0 1203.2 990.4 1200.9 981.7" stroke="#839ea8" stroke-width="4.1"/>
<path d="M1272.7 945.4 1272.1 938.4 1271.8 931.5 1271.6 924.5 1271.7 917.5 1271.9 910.4" stroke="#86a1ab" stroke-width="4.0"/>
<path d="M1271.9 910.4 1272.4 903.3 1273.0 896.1 1273.9 888.9 1274.9 881.7 1276.1 874.5" stroke="#86a1ac" stroke-width="4.0"/>
<path d="M1276.1 874.5 1277.6 867.2 1279.2 859.9 1281.0 852.7 1283.0 845.4 1285.2 838.2" stroke="#87a2ac" stroke-width="4.0"/>
<path d="M1285.2 838.2 1287.6 830.9 1290.2 823.7 1293.0 816.5 1295.9 809.3 1299.1 802.2" stroke="#8aa6b0" stroke-width="4.0"/>
<path d="M1299.1 802.2 1302.4 795.1 1305.9 788.0 1309.6 781.0 1313.4 774.1 1317.5 767.2" stroke="#90acb8" stroke-width="4.0"/>
<path d="M1317.5 767.2 1321.7 760.3 1326.0 753.6 1330.5 746.9 1335.2 740.3 1340.0 733.8" stroke="#93afbb" stroke-width="3.9"/>
<path d="M1340.0 733.8 1345.0 727.3 1350.2 721.0 1355.5 714.7 1360.9 708.6 1366.5 702.6" stroke="#95b2be" stroke-width="3.9"/>
<path d="M1366.5 702.6 1372.2 696.6 1378.0 690.8 1384.0 685.1 1390.1 679.6 1396.4 674.1" stroke="#97b4c0" stroke-width="3.8"/>
<path d="M1396.4 674.1 1402.7 668.8 1409.2 663.6 1415.7 658.6 1422.4 653.7 1429.1 649.0" stroke="#99b6c2" stroke-width="3.7"/>
<path d="M1429.1 649.0 1436.0 644.4 1443.0 639.9 1450.0 635.6 1457.1 631.5 1464.3 627.5" stroke="#9bb9c5" stroke-width="3.6"/>
<path d="M1464.3 627.5 1471.6 623.7 1478.9 620.0 1486.3 616.5 1493.8 613.2 1501.3 610.1" stroke="#9dbbc7" stroke-width="3.6"/>
<path d="M1501.3 610.1 1508.8 607.1 1516.4 604.3 1524.1 601.7 1531.7 599.3 1539.4 597.0" stroke="#9dbbc7" stroke-width="3.5"/>
<path d="M1539.4 597.0 1547.1 595.0 1554.9 593.1 1562.6 591.4 1570.3 589.9 1578.1 588.6" stroke="#9dbcc8" stroke-width="3.5"/>
<path d="M1578.1 588.6 1585.8 587.4 1593.6 586.5 1601.3 585.7 1609.0 585.1 1616.7 584.8" stroke="#9ebcc8" stroke-width="3.5"/>
<path d="M1616.7 584.8 1624.3 584.6 1632.0 584.5 1639.5 584.7 1647.1 585.1 1654.6 585.7" stroke="#9ebdc9" stroke-width="3.4"/>
<path d="M1654.6 585.7 1662.0 586.4 1669.4 587.3 1676.7 588.3 1684.0 589.6 1691.2 591.0" stroke="#9ebdc9" stroke-width="3.4"/>
<path d="M1691.2 591.0 1698.3 592.6 1705.4 594.3 1712.3 596.3 1719.2 598.4 1726.0 600.8" stroke="#9dbbc7" stroke-width="3.1"/>
<path d="M1726.0 600.8 1732.7 603.3 1739.3 605.9 1745.8 608.8 1752.2 611.8 1758.5 615.0" stroke="#9bbac6" stroke-width="2.9"/>
<path d="M1758.5 615.0 1764.7 618.3 1770.8 621.9 1776.8 625.5 1782.8 629.2 1788.6 633.1" stroke="#9ab9c5" stroke-width="2.6"/>
<path d="M1788.6 633.1 1794.3 637.1 1799.9 641.3 1805.4 645.6 1810.8 650.0 1816.1 654.6" stroke="#99b7c3" stroke-width="2.4"/>
<path d="M1816.1 654.6 1821.3 659.2 1826.3 664.0 1831.1 669.0 1835.8 674.1 1840.2 679.4" stroke="#98b6c2" stroke-width="2.1"/>
<path d="M1840.2 679.4 1844.5 684.9 1848.6 690.5 1852.5 696.3 1856.0 702.0 1858.2 707.7" stroke="#96b4c0" stroke-width="1.9"/>
<path d="M1858.2 707.7 1861.8 714.5 1865.1 721.3 1868.2 728.1 1871.1 735.1 1873.8 742.2" stroke="#93b0bc" stroke-width="1.9"/>
<path d="M1873.8 742.2 1876.3 749.3 1878.6 756.6 1880.7 763.9 1882.6 771.3 1884.3 778.8" stroke="#8facb8" stroke-width="1.8"/>
<path d="M1884.3 778.8 1885.8 786.4 1887.1 794.0 1888.2 801.7 1889.1 809.4 1889.8 817.2" stroke="#8ca9b4" stroke-width="1.7"/>
<path d="M1889.8 817.2 1890.3 825.1 1890.6 832.9 1890.7 840.8 1890.6 848.8 1890.3 856.8" stroke="#88a5b0" stroke-width="1.6"/>
<path d="M1890.3 856.8 1889.7 864.8 1889.0 872.8 1888.0 880.8 1886.8 888.9 1885.5 896.9" stroke="#85a1ac" stroke-width="1.6"/>
<path d="M1885.5 896.9 1883.9 904.9 1882.2 913.0 1880.2 921.0 1878.1 929.0 1875.7 937.0" stroke="#84a0ac" stroke-width="1.6"/>
<path d="M1875.7 937.0 1873.2 944.9 1870.5 952.9 1867.6 960.8 1864.5 968.6 1861.2 976.5" stroke="#85a1ac" stroke-width="1.6"/>
<path d="M1861.2 976.5 1857.7 984.2 1854.1 992.0 1850.2 999.6 1846.2 1007.2 1842.0 1014.8" stroke="#85a1ad" stroke-width="1.6"/>
<path d="M1842.0 1014.8 1837.6 1022.2 1833.1 1029.6 1828.4 1036.9 1823.5 1044.2 1818.5 1051.3" stroke="#86a2ad" stroke-width="1.6"/>
<path d="M1818.5 1051.3 1813.3 1058.4 1807.9 1065.4 1802.4 1072.2 1796.7 1079.0 1790.9 1085.6" stroke="#86a2ae" stroke-width="1.6"/>
<path d="M1790.9 1085.6 1784.9 1092.2 1778.8 1098.6 1772.6 1104.9 1766.2 1111.1 1759.7 1117.1" stroke="#87a3af" stroke-width="1.6"/>
<path d="M1759.7 1117.1 1753.0 1123.0 1746.2 1128.8 1739.3 1134.4 1732.3 1139.9 1725.2 1145.3" stroke="#87a3af" stroke-width="1.6"/>
<path d="M1725.2 1145.3 1717.9 1150.5 1710.6 1155.5 1703.1 1160.4 1695.6 1165.2 1687.9 1169.7" stroke="#87a4b0" stroke-width="1.6"/>
<path d="M1687.9 1169.7 1680.2 1174.1 1672.4 1178.4 1664.5 1182.4 1656.5 1186.3 1648.5 1190.0" stroke="#87a4b0" stroke-width="1.6"/>
<path d="M1648.5 1190.0 1640.4 1193.5 1632.2 1196.9 1624.0 1200.0 1615.7 1203.0 1607.4 1205.7" stroke="#88a4b0" stroke-width="1.6"/>
<path d="M1607.4 1205.7 1599.0 1208.3 1590.6 1210.7 1582.1 1212.9 1573.7 1214.8 1565.2 1216.6" stroke="#88a5b1" stroke-width="1.6"/>
<path d="M1565.2 1216.6 1556.7 1218.2 1548.2 1219.6 1539.7 1220.7 1531.2 1221.7 1522.7 1222.4" stroke="#88a5b1" stroke-width="1.6"/>
<path d="M1522.7 1222.4 1514.1 1222.9 1505.7 1223.1 1497.2 1223.1 1488.8 1222.9 1480.4 1222.5" stroke="#88a4b0" stroke-width="1.7"/>
<path d="M1480.4 1222.5 1472.1 1221.9 1463.8 1221.1 1455.5 1220.1 1447.3 1218.8 1439.2 1217.4" stroke="#88a4b0" stroke-width="2.0"/>
<path d="M1439.2 1217.4 1431.1 1215.7 1423.1 1213.8 1415.2 1211.7 1407.4 1209.4 1399.7 1207.0" stroke="#87a3af" stroke-width="2.3"/>
<path d="M1399.7 1207.0 1392.0 1204.3 1384.5 1201.4 1377.0 1198.3 1369.7 1195.0 1362.5 1191.4" stroke="#87a3ae" stroke-width="2.6"/>
<path d="M1362.5 1191.4 1355.4 1187.6 1348.5 1183.6 1341.6 1179.4 1335.0 1175.1 1328.4 1170.6" stroke="#87a2ae" stroke-width="3.0"/>
<path d="M1328.4 1170.6 1322.0 1165.8 1315.7 1160.9 1309.6 1155.9 1303.6 1150.6 1297.7 1145.2" stroke="#87a2ad" stroke-width="3.6"/>
<path d="M1297.7 1145.2 1292.0 1139.6 1286.3 1134.0 1280.8 1128.3 1275.4 1122.3 1270.2 1116.2" stroke="#87a2ad" stroke-width="4.1"/>
<path d="M1270.2 1116.2 1265.1 1110.0 1260.1 1103.6 1255.4 1097.0 1250.7 1090.3 1246.3 1083.4" stroke="#87a2ad" stroke-width="4.1"/>
<path d="M1246.3 1083.4 1242.0 1076.3 1237.9 1069.2 1233.9 1061.8 1230.1 1054.4 1226.5 1046.7" stroke="#87a2ad" stroke-width="4.1"/>
<path d="M1226.5 1046.7 1223.0 1039.0 1219.8 1031.1 1216.7 1023.1 1213.7 1014.9 1211.0 1006.6" stroke="#87a2ad" stroke-width="4.1"/>
<path d="M1211.0 1006.6 1208.4 998.2 1206.0 989.7 1203.7 980.9" stroke="#87a2ad" stroke-width="4.1"/>
<path d="M1275.4 945.2 1274.9 938.3 1274.5 931.4 1274.4 924.5 1274.5 917.5 1274.7 910.5" stroke="#89a4af" stroke-width="4.0"/>
<path d="M1274.7 910.5 1275.1 903.5 1275.8 896.4 1276.6 889.3 1277.6 882.1 1278.8 875.0" stroke="#89a5b0" stroke-width="4.0"/>
<path d="M1278.8 875.0 1280.3 867.8 1281.9 860.6 1283.7 853.4 1285.6 846.2 1287.8 839.0" stroke="#8aa6b1" stroke-width="4.0"/>
<path d="M1287.8 839.0 1290.2 831.8 1292.8 824.6 1295.5 817.5 1298.4 810.4 1301.5 803.3" stroke="#8daab5" stroke-width="4.0"/>
<path d="M1301.5 803.3 1304.8 796.3 1308.3 789.3 1312.0 782.3 1315.8 775.4 1319.8 768.6" stroke="#93b0bc" stroke-width="4.0"/>
<path d="M1319.8 768.6 1323.9 761.8 1328.3 755.1 1332.7 748.4 1337.4 741.9 1342.2 735.4" stroke="#96b3bf" stroke-width="3.9"/>
<path d="M1342.2 735.4 1347.1 729.0 1352.2 722.7 1357.5 716.5 1362.9 710.4 1368.4 704.4" stroke="#98b5c1" stroke-width="3.9"/>
<path d="M1368.4 704.4 1374.1 698.5 1379.9 692.7 1385.8 687.0 1391.9 681.5 1398.0 676.1" stroke="#99b7c3" stroke-width="3.8"/>
<path d="M1398.0 676.1 1404.3 670.8 1410.7 665.7 1417.2 660.7 1423.9 655.8 1430.6 651.1" stroke="#9bb9c5" stroke-width="3.7"/>
<path d="M1430.6 651.1 1437.4 646.5 1444.3 642.0 1451.3 637.8 1458.3 633.6 1465.5 629.7" stroke="#9dbbc7" stroke-width="3.6"/>
<path d="M1465.5 629.7 1472.7 625.9 1480.0 622.2 1487.3 618.8 1494.7 615.5 1502.2 612.3" stroke="#9fbdc9" stroke-width="3.6"/>
<path d="M1502.2 612.3 1509.7 609.4 1517.2 606.6 1524.8 604.0 1532.4 601.6 1540.1 599.4" stroke="#9fbdc9" stroke-width="3.5"/>
<path d="M1540.1 599.4 1547.7 597.3 1555.4 595.4 1563.1 593.7 1570.8 592.2 1578.5 590.9" stroke="#9fbeca" stroke-width="3.5"/>
<path d="M1578.5 590.9 1586.2 589.8 1593.8 588.8 1601.5 588.1 1609.2 587.5 1616.8 587.1" stroke="#a0beca" stroke-width="3.5"/>
<path d="M1616.8 587.1 1624.4 586.9 1631.9 586.9 1639.4 587.1 1646.9 587.5 1654.4 588.0" stroke="#a0bfcb" stroke-width="3.4"/>
<path d="M1654.4 588.0 1661.7 588.7 1669.1 589.6 1676.3 590.6 1683.5 591.8 1690.7 593.1" stroke="#a0bfcb" stroke-width="3.4"/>
<path d="M1690.7 593.1 1697.8 594.7 1704.8 596.4 1711.7 598.3 1718.5 600.4 1725.3 602.7" stroke="#9fbdc9" stroke-width="3.1"/>
<path d="M1725.3 602.7 1732.0 605.1 1738.5 607.7 1745.0 610.5 1751.4 613.5 1757.6 616.6" stroke="#9dbcc8" stroke-width="2.9"/>
<path d="M1757.6 616.6 1763.8 619.9 1769.9 623.4 1775.9 627.0 1781.8 630.7 1787.6 634.5" stroke="#9cbbc7" stroke-width="2.6"/>
<path d="M1787.6 634.5 1793.3 638.5 1798.9 642.6 1804.4 646.8 1809.7 651.2 1815.1 655.7" stroke="#9bb9c5" stroke-width="2.4"/>
<path d="M1815.1 655.7 1820.2 660.3 1825.2 665.0 1830.0 669.9 1834.7 675.0 1839.2 680.3" stroke="#9ab8c4" stroke-width="2.1"/>
<path d="M1839.2 680.3 1843.4 685.7 1847.5 691.3 1851.3 697.0 1854.9 702.6 1857.0 708.2" stroke="#98b6c2" stroke-width="1.9"/>
<path d="M1857.0 708.2 1860.6 715.1 1863.9 721.8 1867.0 728.6 1869.9 735.6 1872.6 742.6" stroke="#95b2be" stroke-width="1.9"/>
<path d="M1872.6 742.6 1875.1 749.7 1877.4 756.9 1879.5 764.2 1881.4 771.6 1883.2 779.1" stroke="#91aeba" stroke-width="1.8"/>
<path d="M1883.2 779.1 1884.7 786.6 1886.0 794.2 1887.1 801.8 1888.0 809.5 1888.7 817.3" stroke="#8eabb6" stroke-width="1.7"/>
<path d="M1888.7 817.3 1889.2 825.1 1889.5 833.0 1889.6 840.8 1889.5 848.8 1889.2 856.7" stroke="#8aa7b2" stroke-width="1.6"/>
<path d="M1889.2 856.7 1888.6 864.7 1887.9 872.7 1886.9 880.7 1885.8 888.7 1884.4 896.7" stroke="#87a3ae" stroke-width="1.6"/>
<path d="M1884.4 896.7 1882.9 904.7 1881.1 912.7 1879.2 920.7 1877.1 928.7 1874.7 936.7" stroke="#86a2ad" stroke-width="1.6"/>
<path d="M1874.7 936.7 1872.2 944.6 1869.5 952.5 1866.6 960.4 1863.5 968.2 1860.2 976.0" stroke="#86a2ae" stroke-width="1.6"/>
<path d="M1860.2 976.0 1856.7 983.8 1853.1 991.5 1849.3 999.1 1845.3 1006.7 1841.1 1014.2" stroke="#86a2ae" stroke-width="1.6"/>
<path d="M1841.1 1014.2 1836.7 1021.7 1832.2 1029.1 1827.5 1036.4 1822.6 1043.6 1817.6 1050.7" stroke="#87a3ae" stroke-width="1.6"/>
<path d="M1817.6 1050.7 1812.4 1057.7 1807.1 1064.7 1801.6 1071.5 1795.9 1078.3 1790.1 1084.9" stroke="#87a3af" stroke-width="1.6"/>
<path d="M1790.1 1084.9 1784.2 1091.4 1778.1 1097.8 1771.8 1104.1 1765.4 1110.3 1758.9 1116.3" stroke="#87a3af" stroke-width="1.6"/>
<path d="M1758.9 1116.3 1752.3 1122.2 1745.5 1128.0 1738.7 1133.6 1731.7 1139.1 1724.5 1144.4" stroke="#87a3af" stroke-width="1.6"/>
<path d="M1724.5 1144.4 1717.3 1149.6 1710.0 1154.7 1702.6 1159.5 1695.0 1164.3 1687.4 1168.8" stroke="#87a3af" stroke-width="1.6"/>
<path d="M1687.4 1168.8 1679.7 1173.2 1671.9 1177.4 1664.0 1181.5 1656.1 1185.3 1648.0 1189.0" stroke="#87a3af" stroke-width="1.6"/>
<path d="M1648.0 1189.0 1639.9 1192.5 1631.8 1195.9 1623.6 1199.0 1615.3 1201.9 1607.0 1204.7" stroke="#87a3af" stroke-width="1.6"/>
<path d="M1607.0 1204.7 1598.7 1207.3 1590.3 1209.6 1581.9 1211.8 1573.4 1213.8 1565.0 1215.6" stroke="#87a3af" stroke-width="1.6"/>
<path d="M1565.0 1215.6 1556.5 1217.1 1548.0 1218.5 1539.5 1219.7 1531.1 1220.6 1522.6 1221.4" stroke="#87a3af" stroke-width="1.6"/>
<path d="M1522.6 1221.4 1514.1 1221.8 1505.6 1222.0 1497.2 1221.9 1488.8 1221.7 1480.5 1221.3" stroke="#88a4b0" stroke-width="1.7"/>
<path d="M1480.5 1221.3 1472.1 1220.6 1463.9 1219.7 1455.7 1218.7 1447.5 1217.4 1439.5 1215.9" stroke="#88a4b0" stroke-width="2.0"/>
<path d="M1439.5 1215.9 1431.4 1214.2 1423.5 1212.3 1415.6 1210.2 1407.9 1207.9 1400.2 1205.4" stroke="#89a5b1" stroke-width="2.3"/>
<path d="M1400.2 1205.4 1392.6 1202.6 1385.1 1199.7 1377.7 1196.6 1370.4 1193.3 1363.3 1189.7" stroke="#8aa6b1" stroke-width="2.6"/>
<path d="M1363.3 1189.7 1356.3 1185.8 1349.5 1181.8 1342.8 1177.6 1336.2 1173.2 1329.7 1168.6" stroke="#8aa6b2" stroke-width="3.0"/>
<path d="M1329.7 1168.6 1323.4 1163.9 1317.2 1158.9 1311.2 1153.8 1305.3 1148.6 1299.6 1143.2" stroke="#8ba7b2" stroke-width="3.6"/>
<path d="M1299.6 1143.2 1294.0 1137.6 1288.4 1132.0 1282.9 1126.3 1277.5 1120.4 1272.4 1114.4" stroke="#8ba7b2" stroke-width="4.1"/>
<path d="M1272.4 1114.4 1267.3 1108.2 1262.4 1101.9 1257.7 1095.3 1253.1 1088.7 1248.7 1081.9" stroke="#8ba7b2" stroke-width="4.1"/>
<path d="M1248.7 1081.9 1244.5 1074.9 1240.4 1067.8 1236.4 1060.5 1232.7 1053.1 1229.1 1045.6" stroke="#8ba7b2" stroke-width="4.1"/>
<path d="M1229.1 1045.6 1225.7 1037.9 1222.4 1030.0 1219.3 1022.1 1216.4 1014.0 1213.7 1005.8" stroke="#8ba7b2" stroke-width="4.1"/>
<path d="M1213.7 1005.8 1211.1 997.4 1208.7 988.9 1206.5 980.2" stroke="#8ba7b2" stroke-width="4.1"/>
<path d="M1278.2 945.0 1277.7 938.1 1277.3 931.3 1277.2 924.5 1277.2 917.6 1277.5 910.7" stroke="#8fabb6" stroke-width="4.0"/>
<path d="M1277.5 910.7 1277.9 903.7 1278.5 896.7 1279.3 889.6 1280.3 882.6 1281.5 875.5" stroke="#8facb7" stroke-width="4.0"/>
<path d="M1281.5 875.5 1282.9 868.3 1284.5 861.2 1286.3 854.1 1288.3 846.9 1290.4 839.8" stroke="#90adb8" stroke-width="4.0"/>
<path d="M1290.4 839.8 1292.8 832.7 1295.3 825.6 1298.0 818.5 1300.9 811.5 1304.0 804.4" stroke="#93b0bc" stroke-width="4.0"/>
<path d="M1304.0 804.4 1307.3 797.4 1310.7 790.5 1314.4 783.6 1318.1 776.8 1322.1 770.0" stroke="#98b6c2" stroke-width="4.0"/>
<path d="M1322.1 770.0 1326.2 763.2 1330.5 756.6 1335.0 750.0 1339.6 743.5 1344.3 737.0" stroke="#9ab9c5" stroke-width="3.9"/>
<path d="M1344.3 737.0 1349.2 730.7 1354.3 724.4 1359.5 718.2 1364.8 712.2 1370.3 706.2" stroke="#9cbbc7" stroke-width="3.9"/>
<path d="M1370.3 706.2 1375.9 700.3 1381.7 694.6 1387.6 689.0 1393.6 683.4 1399.7 678.1" stroke="#9dbcc8" stroke-width="3.8"/>
<path d="M1399.7 678.1 1405.9 672.8 1412.3 667.7 1418.8 662.7 1425.3 657.9 1432.0 653.1" stroke="#9fbeca" stroke-width="3.7"/>
<path d="M1432.0 653.1 1438.8 648.6 1445.6 644.2 1452.6 639.9 1459.6 635.8 1466.7 631.9" stroke="#a1c0cc" stroke-width="3.6"/>
<path d="M1466.7 631.9 1473.8 628.1 1481.1 624.5 1488.3 621.0 1495.7 617.7 1503.1 614.6" stroke="#a2c2ce" stroke-width="3.6"/>
<path d="M1503.1 614.6 1510.5 611.6 1518.0 608.9 1525.6 606.3 1533.1 603.9 1540.7 601.7" stroke="#a2c2ce" stroke-width="3.5"/>
<path d="M1540.7 601.7 1548.3 599.6 1555.9 597.8 1563.6 596.1 1571.2 594.6 1578.8 593.3" stroke="#a2c2ce" stroke-width="3.5"/>
<path d="M1578.8 593.3 1586.5 592.2 1594.1 591.2 1601.7 590.5 1609.3 589.9 1616.9 589.5" stroke="#a3c3cf" stroke-width="3.5"/>
<path d="M1616.9 589.5 1624.4 589.3 1631.9 589.3 1639.4 589.5 1646.8 589.8 1654.1 590.4" stroke="#a3c3cf" stroke-width="3.4"/>
<path d="M1654.1 590.4 1661.5 591.1 1668.7 591.9 1676.0 592.9 1683.1 594.0 1690.2 595.3" stroke="#a3c3cf" stroke-width="3.4"/>
<path d="M1690.2 595.3 1697.2 596.8 1704.2 598.5 1711.1 600.4 1717.9 602.4 1724.6 604.6" stroke="#a1c1cd" stroke-width="3.1"/>
<path d="M1724.6 604.6 1731.2 607.0 1737.7 609.6 1744.2 612.3 1750.5 615.2 1756.7 618.3" stroke="#a0bfcb" stroke-width="2.9"/>
<path d="M1756.7 618.3 1762.9 621.6 1768.9 625.0 1774.9 628.5 1780.8 632.1 1786.6 635.9" stroke="#9fbeca" stroke-width="2.6"/>
<path d="M1786.6 635.9 1792.3 639.8 1797.9 643.9 1803.3 648.1 1808.7 652.4 1814.0 656.9" stroke="#9dbcc8" stroke-width="2.4"/>
<path d="M1814.0 656.9 1819.2 661.4 1824.1 666.1 1829.0 670.9 1833.6 675.9 1838.1 681.1" stroke="#9cbac6" stroke-width="2.1"/>
<path d="M1838.1 681.1 1842.3 686.5 1846.4 692.0 1850.2 697.7 1853.7 703.2 1855.8 708.8" stroke="#9ab8c4" stroke-width="1.9"/>
<path d="M1855.8 708.8 1859.5 715.7 1862.7 722.4 1865.8 729.1 1868.7 736.0 1871.4 743.0" stroke="#97b4c0" stroke-width="1.9"/>
<path d="M1871.4 743.0 1873.9 750.1 1876.3 757.3 1878.4 764.6 1880.3 771.9 1882.0 779.3" stroke="#93b0bc" stroke-width="1.8"/>
<path d="M1882.0 779.3 1883.5 786.8 1884.8 794.4 1886.0 802.0 1886.9 809.6 1887.6 817.4" stroke="#8facb8" stroke-width="1.7"/>
<path d="M1887.6 817.4 1888.1 825.2 1888.4 833.0 1888.5 840.8 1888.5 848.7 1888.1 856.7" stroke="#8ba8b4" stroke-width="1.6"/>
<path d="M1888.1 856.7 1887.6 864.6 1886.8 872.6 1885.9 880.5 1884.7 888.5 1883.4 896.5" stroke="#88a4b0" stroke-width="1.6"/>
<path d="M1883.4 896.5 1881.8 904.5 1880.1 912.5 1878.2 920.5 1876.0 928.4 1873.7 936.4" stroke="#87a3af" stroke-width="1.6"/>
<path d="M1873.7 936.4 1871.2 944.3 1868.5 952.2 1865.6 960.0 1862.5 967.8 1859.2 975.6" stroke="#87a3af" stroke-width="1.6"/>
<path d="M1859.2 975.6 1855.8 983.3 1852.1 991.0 1848.3 998.6 1844.3 1006.2 1840.2 1013.7" stroke="#87a3af" stroke-width="1.6"/>
<path d="M1840.2 1013.7 1835.8 1021.1 1831.3 1028.5 1826.6 1035.8 1821.8 1043.0 1816.7 1050.1" stroke="#86a2ae" stroke-width="1.6"/>
<path d="M1816.7 1050.1 1811.6 1057.1 1806.2 1064.0 1800.7 1070.9 1795.1 1077.6 1789.3 1084.2" stroke="#86a2ae" stroke-width="1.6"/>
<path d="M1789.3 1084.2 1783.4 1090.7 1777.3 1097.1 1771.1 1103.4 1764.7 1109.5 1758.2 1115.5" stroke="#86a2ae" stroke-width="1.6"/>
<path d="M1758.2 1115.5 1751.6 1121.4 1744.9 1127.2 1738.0 1132.8 1731.0 1138.2 1723.9 1143.6" stroke="#86a2ae" stroke-width="1.6"/>
<path d="M1723.9 1143.6 1716.7 1148.7 1709.4 1153.8 1702.0 1158.6 1694.5 1163.3 1686.9 1167.9" stroke="#86a1ad" stroke-width="1.6"/>
<path d="M1686.9 1167.9 1679.2 1172.3 1671.4 1176.5 1663.5 1180.5 1655.6 1184.4 1647.6 1188.0" stroke="#86a1ad" stroke-width="1.6"/>
<path d="M1647.6 1188.0 1639.5 1191.5 1631.4 1194.9 1623.2 1198.0 1615.0 1200.9 1606.7 1203.7" stroke="#85a1ad" stroke-width="1.6"/>
<path d="M1606.7 1203.7 1598.4 1206.2 1590.0 1208.6 1581.6 1210.8 1573.2 1212.7 1564.8 1214.5" stroke="#85a0ac" stroke-width="1.6"/>
<path d="M1564.8 1214.5 1556.3 1216.1 1547.9 1217.4 1539.4 1218.6 1530.9 1219.6 1522.5 1220.3" stroke="#85a0ac" stroke-width="1.6"/>
<path d="M1522.5 1220.3 1514.0 1220.7 1505.6 1220.8 1497.2 1220.7 1488.8 1220.5 1480.5 1220.0" stroke="#87a2ae" stroke-width="1.7"/>
<path d="M1480.5 1220.0 1472.2 1219.3 1464.0 1218.4 1455.9 1217.3 1447.8 1216.0 1439.7 1214.4" stroke="#89a4b0" stroke-width="2.0"/>
<path d="M1439.7 1214.4 1431.8 1212.7 1423.9 1210.8 1416.1 1208.6 1408.3 1206.3 1400.7 1203.8" stroke="#8ba6b2" stroke-width="2.3"/>
<path d="M1400.7 1203.8 1393.2 1201.0 1385.7 1198.1 1378.4 1194.9 1371.2 1191.6 1364.1 1188.0" stroke="#8ca8b4" stroke-width="2.6"/>
<path d="M1364.1 1188.0 1357.3 1184.1 1350.5 1180.0 1343.9 1175.7 1337.4 1171.3 1331.0 1166.7" stroke="#8eaab6" stroke-width="3.0"/>
<path d="M1331.0 1166.7 1324.8 1161.9 1318.7 1156.9 1312.8 1151.8 1307.1 1146.5 1301.5 1141.1" stroke="#90acb8" stroke-width="3.6"/>
<path d="M1301.5 1141.1 1296.0 1135.5 1290.4 1130.0 1285.0 1124.4 1279.7 1118.6 1274.5 1112.6" stroke="#90acb8" stroke-width="4.1"/>
<path d="M1274.5 1112.6 1269.6 1106.4 1264.7 1100.1 1260.0 1093.7 1255.5 1087.1 1251.1 1080.3" stroke="#90acb8" stroke-width="4.1"/>
<path d="M1251.1 1080.3 1246.9 1073.4 1242.9 1066.4 1239.0 1059.2 1235.2 1051.8 1231.7 1044.4" stroke="#90acb8" stroke-width="4.1"/>
<path d="M1231.7 1044.4 1228.3 1036.7 1225.1 1029.0 1222.0 1021.1 1219.1 1013.1 1216.4 1004.9" stroke="#90acb8" stroke-width="4.1"/>
<path d="M1216.4 1004.9 1213.8 996.6 1211.5 988.2 1209.2 979.5" stroke="#90acb8" stroke-width="4.1"/>
<path d="M1281.0 944.8 1280.4 937.9 1280.1 931.2 1280.0 924.5 1280.0 917.7 1280.2 910.8" stroke="#93b0bc" stroke-width="4.0"/>
<path d="M1280.2 910.8 1280.7 903.9 1281.3 897.0 1282.1 890.0 1283.1 883.0 1284.3 876.0" stroke="#94b1bd" stroke-width="4.0"/>
<path d="M1284.3 876.0 1285.6 868.9 1287.2 861.9 1289.0 854.8 1290.9 847.7 1293.1 840.6" stroke="#95b2be" stroke-width="4.0"/>
<path d="M1293.1 840.6 1295.4 833.6 1297.9 826.5 1300.6 819.5 1303.5 812.5 1306.5 805.6" stroke="#97b5c1" stroke-width="4.0"/>
<path d="M1306.5 805.6 1309.8 798.6 1313.2 791.7 1316.8 784.9 1320.5 778.1 1324.4 771.4" stroke="#9cbac6" stroke-width="4.0"/>
<path d="M1324.4 771.4 1328.5 764.7 1332.8 758.1 1337.2 751.5 1341.7 745.0 1346.4 738.6" stroke="#9dbbc7" stroke-width="3.9"/>
<path d="M1346.4 738.6 1351.3 732.3 1356.3 726.1 1361.5 720.0 1366.8 713.9 1372.2 708.0" stroke="#9ebdc9" stroke-width="3.9"/>
<path d="M1372.2 708.0 1377.8 702.2 1383.5 696.5 1389.3 690.9 1395.3 685.4 1401.4 680.0" stroke="#9fbeca" stroke-width="3.8"/>
<path d="M1401.4 680.0 1407.6 674.8 1413.9 669.7 1420.3 664.7 1426.8 659.9 1433.4 655.2" stroke="#a1bfcb" stroke-width="3.7"/>
<path d="M1433.4 655.2 1440.1 650.7 1446.9 646.3 1453.8 642.1 1460.8 638.0 1467.8 634.1" stroke="#a2c1cd" stroke-width="3.6"/>
<path d="M1467.8 634.1 1474.9 630.3 1482.1 626.7 1489.4 623.2 1496.7 619.9 1504.0 616.8" stroke="#a3c2ce" stroke-width="3.6"/>
<path d="M1504.0 616.8 1511.4 613.9 1518.8 611.2 1526.3 608.6 1533.8 606.2 1541.4 604.0" stroke="#a3c2ce" stroke-width="3.5"/>
<path d="M1541.4 604.0 1548.9 602.0 1556.5 600.1 1564.1 598.5 1571.6 597.0 1579.2 595.7" stroke="#a3c2ce" stroke-width="3.5"/>
<path d="M1579.2 595.7 1586.8 594.5 1594.4 593.6 1601.9 592.8 1609.4 592.3 1616.9 591.9" stroke="#a4c3cf" stroke-width="3.5"/>
<path d="M1616.9 591.9 1624.4 591.7 1631.9 591.7 1639.3 591.8 1646.6 592.2 1653.9 592.7" stroke="#a4c3cf" stroke-width="3.4"/>
<path d="M1653.9 592.7 1661.2 593.4 1668.4 594.2 1675.6 595.1 1682.7 596.2 1689.7 597.5" stroke="#a4c3cf" stroke-width="3.4"/>
<path d="M1689.7 597.5 1696.7 599.0 1703.6 600.6 1710.4 602.4 1717.2 604.4 1723.9 606.6" stroke="#a2c1cd" stroke-width="3.1"/>
<path d="M1723.9 606.6 1730.4 608.9 1736.9 611.4 1743.3 614.1 1749.6 616.9 1755.8 620.0" stroke="#a0bfcb" stroke-width="2.9"/>
<path d="M1755.8 620.0 1761.9 623.2 1768.0 626.5 1774.0 630.0 1779.8 633.6 1785.6 637.3" stroke="#9fbdc9" stroke-width="2.6"/>
<path d="M1785.6 637.3 1791.3 641.2 1796.9 645.2 1802.3 649.3 1807.7 653.6 1813.0 658.0" stroke="#9dbbc7" stroke-width="2.4"/>
<path d="M1813.0 658.0 1818.1 662.5 1823.1 667.1 1827.9 671.9 1832.5 676.8 1837.0 682.0" stroke="#9bb9c5" stroke-width="2.1"/>
<path d="M1837.0 682.0 1841.3 687.3 1845.3 692.8 1849.1 698.5 1852.5 703.8 1854.6 709.3" stroke="#99b7c3" stroke-width="1.9"/>
<path d="M1854.6 709.3 1858.3 716.3 1861.6 722.9 1864.7 729.6 1867.6 736.5 1870.3 743.5" stroke="#96b4c0" stroke-width="1.9"/>
<path d="M1870.3 743.5 1872.8 750.5 1875.1 757.6 1877.2 764.9 1879.1 772.2 1880.8 779.6" stroke="#93b0bc" stroke-width="1.8"/>
<path d="M1880.8 779.6 1882.4 787.0 1883.7 794.5 1884.8 802.1 1885.8 809.8 1886.5 817.5" stroke="#8facb8" stroke-width="1.7"/>
<path d="M1886.5 817.5 1887.0 825.2 1887.3 833.0 1887.5 840.8 1887.4 848.7 1887.0 856.6" stroke="#8ca8b4" stroke-width="1.6"/>
<path d="M1887.0 856.6 1886.5 864.5 1885.8 872.4 1884.8 880.4 1883.7 888.4 1882.3 896.3" stroke="#89a5b1" stroke-width="1.6"/>
<path d="M1882.3 896.3 1880.8 904.3 1879.0 912.2 1877.1 920.2 1875.0 928.1 1872.7 936.0" stroke="#88a4af" stroke-width="1.6"/>
<path d="M1872.7 936.0 1870.2 943.9 1867.5 951.8 1864.6 959.6 1861.5 967.4 1858.2 975.2" stroke="#87a3af" stroke-width="1.6"/>
<path d="M1858.2 975.2 1854.8 982.9 1851.2 990.6 1847.4 998.2 1843.4 1005.7 1839.2 1013.2" stroke="#87a3ae" stroke-width="1.6"/>
<path d="M1839.2 1013.2 1834.9 1020.6 1830.4 1027.9 1825.7 1035.2 1820.9 1042.4 1815.9 1049.5" stroke="#87a2ae" stroke-width="1.6"/>
<path d="M1815.9 1049.5 1810.7 1056.5 1805.4 1063.4 1799.9 1070.2 1794.3 1076.9 1788.5 1083.5" stroke="#86a2ad" stroke-width="1.6"/>
<path d="M1788.5 1083.5 1782.6 1090.0 1776.5 1096.3 1770.3 1102.6 1764.0 1108.7 1757.5 1114.7" stroke="#86a1ac" stroke-width="1.6"/>
<path d="M1757.5 1114.7 1750.9 1120.6 1744.2 1126.3 1737.3 1131.9 1730.4 1137.4 1723.3 1142.7" stroke="#86a1ac" stroke-width="1.6"/>
<path d="M1723.3 1142.7 1716.1 1147.9 1708.8 1152.9 1701.4 1157.7 1693.9 1162.4 1686.3 1167.0" stroke="#85a0ab" stroke-width="1.6"/>
<path d="M1686.3 1167.0 1678.6 1171.3 1670.9 1175.5 1663.0 1179.5 1655.1 1183.4 1647.2 1187.1" stroke="#849fab" stroke-width="1.6"/>
<path d="M1647.2 1187.1 1639.1 1190.6 1631.0 1193.9 1622.8 1197.0 1614.6 1199.9 1606.4 1202.7" stroke="#839eaa" stroke-width="1.6"/>
<path d="M1606.4 1202.7 1598.1 1205.2 1589.7 1207.6 1581.4 1209.7 1573.0 1211.7 1564.6 1213.5" stroke="#839ea9" stroke-width="1.6"/>
<path d="M1564.6 1213.5 1556.2 1215.0 1547.7 1216.4 1539.3 1217.5 1530.8 1218.5 1522.4 1219.2" stroke="#839eaa" stroke-width="1.6"/>
<path d="M1522.4 1219.2 1514.0 1219.5 1505.6 1219.7 1497.2 1219.5 1488.9 1219.2 1480.6 1218.7" stroke="#85a1ad" stroke-width="1.7"/>
<path d="M1480.6 1218.7 1472.3 1218.0 1464.2 1217.0 1456.0 1215.9 1448.0 1214.6 1440.0 1213.0" stroke="#88a4b0" stroke-width="2.0"/>
<path d="M1440.0 1213.0 1432.1 1211.2 1424.2 1209.3 1416.5 1207.1 1408.8 1204.7 1401.2 1202.2" stroke="#8ba7b3" stroke-width="2.3"/>
<path d="M1401.2 1202.2 1393.8 1199.4 1386.4 1196.4 1379.1 1193.3 1372.0 1189.9 1365.0 1186.2" stroke="#8eaab6" stroke-width="2.6"/>
<path d="M1365.0 1186.2 1358.2 1182.3 1351.5 1178.2 1345.0 1173.9 1338.6 1169.4 1332.3 1164.7" stroke="#91aeba" stroke-width="3.0"/>
<path d="M1332.3 1164.7 1326.2 1159.9 1320.3 1154.9 1314.5 1149.8 1308.8 1144.5 1303.3 1139.0" stroke="#94b1bd" stroke-width="3.6"/>
<path d="M1303.3 1139.0 1298.0 1133.4 1292.4 1128.0 1287.1 1122.4 1281.8 1116.7 1276.7 1110.7" stroke="#94b1bd" stroke-width="4.1"/>
<path d="M1276.7 1110.7 1271.8 1104.7 1267.0 1098.4 1262.4 1092.0 1257.9 1085.5 1253.5 1078.8" stroke="#94b1bd" stroke-width="4.1"/>
<path d="M1253.5 1078.8 1249.4 1072.0 1245.4 1065.0 1241.5 1057.9 1237.8 1050.6 1234.3 1043.2" stroke="#94b1bd" stroke-width="4.1"/>
<path d="M1234.3 1043.2 1230.9 1035.6 1227.7 1027.9 1224.7 1020.1 1221.8 1012.1 1219.1 1004.0" stroke="#94b1bd" stroke-width="4.1"/>
<path d="M1219.1 1004.0 1216.6 995.8 1214.2 987.5 1212.0 978.8" stroke="#94b1bd" stroke-width="4.1"/>
<path d="M1283.7 944.5 1283.2 937.7 1282.9 931.1 1282.7 924.5 1282.8 917.7 1283.0 911.0" stroke="#90adb9" stroke-width="4.0"/>
<path d="M1283.0 911.0 1283.4 904.1 1284.0 897.3 1284.8 890.4 1285.8 883.4 1287.0 876.5" stroke="#91aeba" stroke-width="4.0"/>
<path d="M1287.0 876.5 1288.3 869.5 1289.9 862.5 1291.6 855.5 1293.6 848.5 1295.7 841.5" stroke="#91aeba" stroke-width="4.0"/>
<path d="M1295.7 841.5 1298.0 834.5 1300.5 827.5 1303.1 820.5 1306.0 813.6 1309.0 806.7" stroke="#92afbb" stroke-width="4.0"/>
<path d="M1309.0 806.7 1312.2 799.8 1315.6 793.0 1319.1 786.2 1322.9 779.5 1326.8 772.8" stroke="#94b1bd" stroke-width="4.0"/>
<path d="M1326.8 772.8 1330.8 766.1 1335.0 759.6 1339.4 753.1 1343.9 746.6 1348.6 740.3" stroke="#94b2be" stroke-width="3.9"/>
<path d="M1348.6 740.3 1353.4 734.0 1358.4 727.8 1363.5 721.7 1368.7 715.7 1374.1 709.8" stroke="#95b2be" stroke-width="3.9"/>
<path d="M1374.1 709.8 1379.6 704.0 1385.3 698.3 1391.1 692.8 1397.0 687.3 1403.0 682.0" stroke="#95b3bf" stroke-width="3.8"/>
<path d="M1403.0 682.0 1409.2 676.8 1415.5 671.7 1421.8 666.8 1428.3 662.0 1434.9 657.3" stroke="#96b4c0" stroke-width="3.7"/>
<path d="M1434.9 657.3 1441.5 652.8 1448.3 648.4 1455.1 644.2 1462.0 640.2 1469.0 636.2" stroke="#97b4c0" stroke-width="3.6"/>
<path d="M1469.0 636.2 1476.1 632.5 1483.2 628.9 1490.4 625.5 1497.6 622.2 1504.9 619.1" stroke="#97b5c1" stroke-width="3.6"/>
<path d="M1504.9 619.1 1512.2 616.2 1519.6 613.5 1527.1 610.9 1534.5 608.5 1542.0 606.3" stroke="#97b5c1" stroke-width="3.5"/>
<path d="M1542.0 606.3 1549.5 604.3 1557.0 602.5 1564.5 600.8 1572.1 599.3 1579.6 598.0" stroke="#97b5c1" stroke-width="3.5"/>
<path d="M1579.6 598.0 1587.1 596.9 1594.6 596.0 1602.1 595.2 1609.6 594.6 1617.0 594.3" stroke="#97b5c1" stroke-width="3.5"/>
<path d="M1617.0 594.3 1624.5 594.1 1631.8 594.0 1639.2 594.2 1646.5 594.5 1653.7 595.1" stroke="#97b5c1" stroke-width="3.4"/>
<path d="M1653.7 595.1 1660.9 595.8 1668.1 596.5 1675.2 597.4 1682.2 598.5 1689.2 599.7" stroke="#97b5c1" stroke-width="3.4"/>
<path d="M1689.2 599.7 1696.2 601.1 1703.0 602.7 1709.8 604.4 1716.5 606.4 1723.1 608.5" stroke="#96b4c0" stroke-width="3.1"/>
<path d="M1723.1 608.5 1729.7 610.8 1736.1 613.2 1742.5 615.9 1748.8 618.7 1754.9 621.6" stroke="#95b2be" stroke-width="2.9"/>
<path d="M1754.9 621.6 1761.0 624.8 1767.0 628.1 1773.0 631.5 1778.9 635.1 1784.6 638.7" stroke="#94b1bd" stroke-width="2.6"/>
<path d="M1784.6 638.7 1790.3 642.5 1795.8 646.5 1801.3 650.5 1806.6 654.8 1812.0 659.2" stroke="#93b0bc" stroke-width="2.4"/>
<path d="M1812.0 659.2 1817.1 663.6 1822.0 668.1 1826.8 672.9 1831.5 677.8 1835.9 682.8" stroke="#92afbb" stroke-width="2.1"/>
<path d="M1835.9 682.8 1840.2 688.1 1844.2 693.6 1848.0 699.2 1851.3 704.4 1853.4 709.8" stroke="#91adb9" stroke-width="1.9"/>
<path d="M1853.4 709.8 1857.1 716.8 1860.4 723.4 1863.5 730.2 1866.4 737.0 1869.1 743.9" stroke="#8facb8" stroke-width="1.9"/>
<path d="M1869.1 743.9 1871.6 750.9 1873.9 758.0 1876.0 765.2 1878.0 772.5 1879.7 779.8" stroke="#8daab6" stroke-width="1.8"/>
<path d="M1879.7 779.8 1881.2 787.2 1882.6 794.7 1883.7 802.3 1884.6 809.9 1885.4 817.5" stroke="#8ca8b4" stroke-width="1.7"/>
<path d="M1885.4 817.5 1885.9 825.3 1886.2 833.0 1886.4 840.8 1886.3 848.7 1886.0 856.5" stroke="#8aa6b2" stroke-width="1.6"/>
<path d="M1886.0 856.5 1885.4 864.4 1884.7 872.3 1883.7 880.3 1882.6 888.2 1881.3 896.1" stroke="#88a4b0" stroke-width="1.6"/>
<path d="M1881.3 896.1 1879.7 904.1 1878.0 912.0 1876.1 919.9 1874.0 927.8 1871.6 935.7" stroke="#88a3af" stroke-width="1.6"/>
<path d="M1871.6 935.7 1869.1 943.6 1866.5 951.4 1863.6 959.3 1860.5 967.0 1857.3 974.8" stroke="#87a3af" stroke-width="1.6"/>
<path d="M1857.3 974.8 1853.8 982.4 1850.2 990.1 1846.4 997.7 1842.4 1005.2 1838.3 1012.6" stroke="#87a2ae" stroke-width="1.6"/>
<path d="M1838.3 1012.6 1834.0 1020.0 1829.5 1027.4 1824.8 1034.6 1820.0 1041.8 1815.0 1048.8" stroke="#86a2ae" stroke-width="1.6"/>
<path d="M1815.0 1048.8 1809.9 1055.8 1804.5 1062.7 1799.1 1069.5 1793.5 1076.2 1787.7 1082.8" stroke="#86a1ad" stroke-width="1.6"/>
<path d="M1787.7 1082.8 1781.8 1089.2 1775.7 1095.6 1769.6 1101.8 1763.2 1107.9 1756.8 1113.9" stroke="#85a0ac" stroke-width="1.6"/>
<path d="M1756.8 1113.9 1750.2 1119.8 1743.5 1125.5 1736.7 1131.1 1729.7 1136.5 1722.6 1141.8" stroke="#85a0ac" stroke-width="1.6"/>
<path d="M1722.6 1141.8 1715.5 1147.0 1708.2 1152.0 1700.8 1156.8 1693.3 1161.5 1685.8 1166.0" stroke="#849fab" stroke-width="1.6"/>
<path d="M1685.8 1166.0 1678.1 1170.4 1670.4 1174.6 1662.6 1178.6 1654.7 1182.4 1646.7 1186.1" stroke="#839eaa" stroke-width="1.6"/>
<path d="M1646.7 1186.1 1638.7 1189.6 1630.6 1192.9 1622.5 1196.0 1614.3 1198.9 1606.0 1201.6" stroke="#829da9" stroke-width="1.6"/>
<path d="M1606.0 1201.6 1597.8 1204.2 1589.5 1206.5 1581.1 1208.7 1572.8 1210.7 1564.4 1212.4" stroke="#829da9" stroke-width="1.6"/>
<path d="M1564.4 1212.4 1556.0 1214.0 1547.6 1215.3 1539.1 1216.5 1530.7 1217.4 1522.3 1218.2" stroke="#829da9" stroke-width="1.6"/>
<path d="M1522.3 1218.2 1513.9 1218.4 1505.5 1218.5 1497.2 1218.4 1488.9 1218.0 1480.6 1217.4" stroke="#85a0ac" stroke-width="1.7"/>
<path d="M1480.6 1217.4 1472.4 1216.7 1464.3 1215.7 1456.2 1214.5 1448.2 1213.1 1440.2 1211.5" stroke="#88a4b0" stroke-width="2.0"/>
<path d="M1440.2 1211.5 1432.4 1209.7 1424.6 1207.7 1416.9 1205.6 1409.3 1203.2 1401.7 1200.6" stroke="#8ba8b4" stroke-width="2.3"/>
<path d="M1401.7 1200.6 1394.3 1197.8 1387.0 1194.8 1379.8 1191.6 1372.7 1188.2 1365.8 1184.5" stroke="#8eabb7" stroke-width="2.6"/>
<path d="M1365.8 1184.5 1359.1 1180.5 1352.5 1176.3 1346.1 1172.0 1339.8 1167.5 1333.6 1162.8" stroke="#92afbb" stroke-width="3.0"/>
<path d="M1333.6 1162.8 1327.6 1157.9 1321.8 1152.9 1316.1 1147.8 1310.6 1142.4 1305.2 1137.0" stroke="#95b3bf" stroke-width="3.6"/>
<path d="M1305.2 1137.0 1299.9 1131.4 1294.5 1126.0 1289.1 1120.5 1284.0 1114.8 1278.9 1108.9" stroke="#95b3bf" stroke-width="4.1"/>
<path d="M1278.9 1108.9 1274.0 1102.9 1269.3 1096.7 1264.7 1090.4 1260.3 1083.9 1256.0 1077.3" stroke="#95b3bf" stroke-width="4.1"/>
<path d="M1256.0 1077.3 1251.8 1070.5 1247.9 1063.6 1244.0 1056.5 1240.4 1049.3 1236.9 1042.0" stroke="#95b3bf" stroke-width="4.1"/>
<path d="M1236.9 1042.0 1233.5 1034.5 1230.4 1026.8 1227.4 1019.1 1224.5 1011.2 1221.8 1003.2" stroke="#95b3bf" stroke-width="4.1"/>
<path d="M1221.8 1003.2 1219.3 995.0 1217.0 986.7 1214.8 978.1" stroke="#95b3bf" stroke-width="4.1"/>
</g></g>
<g clip-path="url(#coneclip)">
<path d="M954.8 393.2L961.4 393.2L1192.5 970.0L1190.3 970.6Z" fill="#7d95a0"/>
<path d="M959.3 393.2L965.9 393.1L1194.0 969.6L1191.8 970.2Z" fill="#8099a4"/>
<path d="M963.8 393.2L970.4 393.1L1195.5 969.1L1193.3 969.8Z" fill="#829ba6"/>
<path d="M968.3 393.1L974.9 393.1L1197.0 968.7L1194.8 969.3Z" fill="#839ca7"/>
<path d="M972.8 393.1L979.4 393.0L1198.5 968.3L1196.3 968.9Z" fill="#849ea9"/>
<path d="M977.3 393.0L983.9 393.0L1200.0 967.9L1197.8 968.5Z" fill="#859faa"/>
<path d="M981.8 393.0L988.4 393.0L1201.5 967.5L1199.3 968.1Z" fill="#86a0ab"/>
<path d="M986.3 393.0L993.0 392.9L1203.0 967.1L1200.8 967.7Z" fill="#87a1ac"/>
<path d="M990.8 392.9L997.5 392.9L1204.5 966.6L1202.3 967.3Z" fill="#87a2ad"/>
<path d="M995.3 392.9L1002.0 392.8L1206.0 966.2L1203.8 966.8Z" fill="#88a2ad"/>
<path d="M999.8 392.9L1006.5 392.8L1207.5 965.8L1205.3 966.4Z" fill="#89a3ae"/>
<path d="M1004.3 392.8L1011.0 392.8L1209.1 965.4L1206.8 966.0Z" fill="#89a4af"/>
<path d="M1008.8 392.8L1015.5 392.7L1210.6 965.0L1208.3 965.6Z" fill="#8aa4af"/>
<path d="M1013.3 392.8L1020.0 392.7L1212.1 964.6L1209.8 965.2Z" fill="#8aa5b0"/>
<path d="M1017.8 392.7L1024.5 392.7L1213.6 964.1L1211.3 964.8Z" fill="#8ba6b1"/>
<path d="M1022.3 392.7L1029.0 392.6L1215.1 963.7L1212.8 964.3Z" fill="#8ba6b1"/>
<path d="M1026.8 392.6L1033.5 392.6L1216.6 963.3L1214.3 963.9Z" fill="#8ca7b2"/>
<path d="M1031.3 392.6L1038.0 392.6L1218.1 962.9L1215.8 963.5Z" fill="#8ea9b4"/>
<path d="M1035.8 392.6L1042.5 392.5L1219.6 962.5L1217.3 963.1Z" fill="#8faab5"/>
<path d="M1040.3 392.5L1047.0 392.5L1221.1 962.0L1218.8 962.7Z" fill="#91acb7"/>
<path d="M1044.8 392.5L1051.5 392.5L1222.6 961.6L1220.3 962.2Z" fill="#93aeb9"/>
<path d="M1049.3 392.5L1056.0 392.4L1224.1 961.2L1221.9 961.8Z" fill="#95b0bb"/>
<path d="M1053.8 392.4L1060.5 392.4L1225.6 960.8L1223.4 961.4Z" fill="#97b2bd"/>
<path d="M1058.3 392.4L1065.0 392.3L1227.1 960.4L1224.9 961.0Z" fill="#9ab5c0"/>
<path d="M1062.8 392.4L1069.5 392.3L1228.6 960.0L1226.4 960.6Z" fill="#9db8c3"/>
<path d="M1067.3 392.3L1074.0 392.3L1230.1 959.5L1227.9 960.2Z" fill="#9ebac5"/>
<path d="M1071.8 392.3L1078.5 392.2L1231.6 959.1L1229.4 959.7Z" fill="#9bb6c1"/>
<path d="M1076.3 392.3L1083.0 392.2L1233.1 958.7L1230.9 959.3Z" fill="#97b2bd"/>
<path d="M1080.8 392.2L1087.5 392.2L1234.6 958.3L1232.4 958.9Z" fill="#93aeb9"/>
<path d="M1085.3 392.2L1092.0 392.1L1236.1 957.9L1233.9 958.5Z" fill="#8faab5"/>
<path d="M1089.8 392.1L1096.5 392.1L1237.6 957.5L1235.4 958.1Z" fill="#8ba6b1"/>
<path d="M1094.3 392.1L1101.0 392.1L1239.1 957.0L1236.9 957.7Z" fill="#87a1ac"/>
<path d="M1098.8 392.1L1105.5 392.0L1240.6 956.6L1238.4 957.2Z" fill="#859ea9"/>
<path d="M1103.3 392.0L1110.0 392.0L1242.1 956.2L1239.9 956.8Z" fill="#839ca7"/>
<path d="M1107.8 392.0L1114.5 391.9L1243.6 955.8L1241.4 956.4Z" fill="#819aa4"/>
<path d="M1112.3 392.0L1119.0 391.9L1245.1 955.4L1242.9 956.0Z" fill="#7f98a2"/>
<path d="M1116.9 391.9L1123.5 391.9L1246.6 955.0L1244.4 955.6Z" fill="#7d96a0"/>
<path d="M1121.4 391.9L1128.0 391.8L1248.1 954.5L1245.9 955.2Z" fill="#7b949e"/>
<path d="M1125.9 391.9L1132.5 391.8L1249.6 954.1L1247.4 954.7Z" fill="#7a929c"/>
<path d="M1130.4 391.8L1137.0 391.8L1251.1 953.7L1248.9 954.3Z" fill="#78909a"/>
</g>
<path d="M1190.3 970.6C1191 966 1193 963 1196.5 961.3L1237.5 943.6Q1241 942.6 1243.6 945.3L1259.2 965.8L1216.5 985.3Q1206 989 1199.5 984.5Q1193.5 979 1190.3 970.6Z" fill="#a2c2ce" stroke="#111" stroke-width="1"/>
<path d="M1257.4 943L1257.4 898L1266.5 898L1265.8 946Z" fill="#7d97a2"/>
<path d="M1251.2 949.4L1257.4 942.4L1265.8 945.9L1274 957.5L1283.9 957.4Q1285 968 1278 975Q1269 981 1259 974Q1256 970 1255 966Z" fill="#8faab6"/>
<path d="M1251.5 950Q1256 947 1257.6 942.6L1273 958.5Q1274 964 1269 967Q1264 969 1260 966Z" fill="#a2c2ce" stroke="#111" stroke-width=".9"/>
<path d="M1255.3 967Q1259 977 1268 978.6Q1280 978 1284 966Q1284.5 960 1283.5 957.5" fill="none" stroke="#111" stroke-width=".9"/>
<path d="M1259.5 966.5Q1266 970 1271 966.5Q1274 963 1273.5 958.5" fill="none" stroke="#111" stroke-width=".9"/>
<path d="M1274 957.8h10" stroke="#111" stroke-width=".9"/>
<path d="M1354.5 1079.8 1350.7 1075.0 1347.0 1069.9 1343.5 1064.8 1340.2 1059.6 1337.0 1054.2 1333.9 1048.8 1331.1 1043.2 1328.4 1037.5 1325.8 1031.8 1323.4 1025.9 1321.2 1020.0 1319.2 1014.0 1317.3 1007.9 1315.7 1001.7 1314.2 995.5 1312.8 989.2 1311.7 982.8 1310.7 976.4 1309.9 969.9 1309.3 963.4 1308.9 956.8 1308.6 950.2 1308.5 943.6 1308.7 936.9 1308.9 930.2 1309.4 923.5 1310.1 916.7 1310.9 910.0 1311.9 903.2 1313.1 896.5 1314.5 889.7 1316.0 882.9 1317.7 876.2 1319.6 869.5 1321.7 862.8 1323.9 856.1 1326.3 849.4 1328.9 842.8 1331.6 836.2 1334.5 829.7 1337.6 823.2 1340.8 816.8 1344.2 810.4 1347.8 804.1 1351.5 797.8 1355.3 791.6 1359.3 785.5 1363.5 779.5 1367.8 773.5 1372.2 767.7 1376.8 761.9 1381.5 756.2 1386.3 750.6 1391.2 745.2 1396.3 739.8 1401.5 734.5 1406.8 729.4 1412.3 724.3 1417.8 719.4 1423.5 714.6 1429.2 709.9 1435.1 705.4 1441.0 701.0 1447.1 696.7 1453.2 692.6 1459.4 688.6 1465.7 684.7 1472.0 681.0 1478.4 677.5 1484.9 674.1 1491.4 670.8 1498.0 667.8 1504.7 664.8 1511.4 662.1 1518.1 659.5 1524.9 657.0 1531.7 654.7 1538.6 652.6 1545.4 650.7 1552.3 648.9 1559.2 647.3 1566.1 645.9 1573.0 644.6 1579.9 643.6 1586.8 642.7 1593.7 641.9 1600.6 641.4 1607.4 641.0 1614.2 640.8 1621.0 640.8 1627.8 640.9 1634.5 641.3 1641.2 641.8 1647.9 642.5 1654.5 643.3 1661.0 644.4 1667.5 645.6 1673.9 647.0 1680.2 648.5 1686.5 650.3 1692.6 652.2 1698.8 654.2 1704.8 656.5 1710.7 658.9 1716.5 661.4 1722.3 664.2 1727.9 667.1 1733.4 670.1 1738.8 673.3 1744.1 676.7 1749.3 680.2 1754.3 683.9 1759.3 687.7 1764.1 691.6 1768.8 695.7 1773.3 700.0 1777.7 704.3" fill="none" stroke="#0b0b0b" stroke-width="1.1"/>
<path d="M1777.7 704.3 1782.0 708.9 1786.1 713.5 1790.0 718.3 1793.9 723.1 1797.5 728.2 1801.1 733.3 1804.4 738.5 1807.6 743.9 1810.6 749.3 1813.5 754.9 1816.2 760.6 1818.8 766.3 1821.1 772.2 1823.3 778.1 1825.4 784.1 1827.2 790.2 1828.9 796.4 1830.4 802.6 1831.7 808.9 1832.9 815.3 1833.9 821.7 1834.7 828.2 1835.3 834.7 1835.7 841.3 1836.0 847.9 1836.0 854.5 1835.9 861.2 1835.6 867.9 1835.2 874.6 1834.5 881.4 1833.7 888.1 1832.7 894.9 1831.5 901.6 1830.1 908.4 1828.6 915.2 1826.9 921.9 1825.0 928.6 1822.9 935.3 1820.7 942.0 1818.3 948.7 1815.7 955.3 1813.0 961.9 1810.0 968.4 1807.0 974.9 1803.7 981.3 1800.4 987.7 1796.8 994.0 1793.1 1000.3 1789.3 1006.5 1785.3 1012.6 1781.1 1018.6 1776.8 1024.6 1772.4 1030.4 1767.8 1036.2 1763.1 1041.9 1758.3 1047.5 1753.3 1052.9 1748.3 1058.3 1743.1 1063.6 1737.7 1068.7 1732.3 1073.8 1726.8 1078.7 1721.1 1083.5 1715.4 1088.2 1709.5 1092.7 1703.6 1097.1 1697.5 1101.4 1691.4 1105.5 1685.2 1109.5 1678.9 1113.4 1672.6 1117.1 1666.2 1120.6 1659.7 1124.0 1653.1 1127.3 1646.5 1130.3 1639.9 1133.3 1633.2 1136.0 1626.4 1138.6 1619.7 1141.1 1612.9 1143.4 1606.0 1145.5 1599.2 1147.4 1592.3 1149.2 1585.4 1150.8 1578.5 1152.2 1571.6 1153.5 1564.7 1154.5 1557.8 1155.4 1550.9 1156.2 1544.0 1156.7 1537.2 1157.1 1530.3 1157.3 1523.5 1157.3 1516.8 1157.2 1510.0 1156.8 1503.4 1156.3 1496.7 1155.6 1490.1 1154.8 1483.6 1153.7 1477.1 1152.5 1470.7 1151.1 1464.4 1149.6 1458.1 1147.8 1451.9 1145.9 1445.8 1143.9 1439.8 1141.6 1433.9 1139.2 1428.1 1136.7 1422.3 1133.9 1416.7 1131.0 1411.2 1128.0 1405.8 1124.8 1400.5 1121.4 1395.3 1117.9 1390.2 1114.2 1385.3 1110.4 1380.5 1106.5 1375.8 1102.4 1371.3 1098.1 1366.9 1093.8 1362.6 1089.2 1358.5 1084.6 1354.5 1079.8" fill="none" stroke="#0b0b0b" stroke-width="1.1"/>
<path d="M1777.7 704.3 1781.1 709.2 1784.4 714.4 1787.5 719.7 1790.5 725.1 1793.3 730.6 1795.9 736.2 1798.4 741.9 1800.7 747.7 1802.8 753.6 1804.8 759.5 1806.5 765.6 1808.1 771.7 1809.6 777.9 1810.8 784.1 1811.9 790.4 1812.8 796.8 1813.5 803.2 1814.0 809.7 1814.4 816.2 1814.6 822.8 1814.6 829.4 1814.4 836.0 1814.0 842.7 1813.4 849.4 1812.7 856.0 1811.8 862.8 1810.7 869.5 1809.4 876.2 1808.0 882.9 1806.4 889.6 1804.6 896.3 1802.6 903.0 1800.5 909.7 1798.2 916.3 1795.7 922.9 1793.0 929.5 1790.2 936.1 1787.2 942.6 1784.1 949.0 1780.8 955.4 1777.3 961.8 1773.7 968.1 1769.9 974.3 1766.0 980.5 1761.9 986.6 1757.7 992.6 1753.4 998.5 1748.9 1004.4 1744.3 1010.1 1739.5 1015.8 1734.6 1021.4 1729.6 1026.8 1724.4 1032.2 1719.2 1037.5 1713.8 1042.6 1708.3 1047.6 1702.7 1052.5 1697.0 1057.3 1691.2 1062.0 1685.3 1066.5 1679.4 1070.9 1673.3 1075.2 1667.1 1079.4 1660.9 1083.3 1654.6 1087.2 1648.2 1090.9 1641.7 1094.5 1635.2 1097.9 1628.6 1101.1 1622.0 1104.2 1615.3 1107.2 1608.6 1110.0 1601.9 1112.6 1595.1 1115.0 1588.2 1117.3 1581.4 1119.5 1574.5 1121.4 1567.6 1123.2 1560.7 1124.8 1553.8 1126.3 1546.9 1127.6 1540.0 1128.7 1533.1 1129.6 1526.2 1130.4 1519.4 1131.0 1512.5 1131.4 1505.7 1131.6 1498.9 1131.7 1492.1 1131.5 1485.4 1131.2 1478.7 1130.8 1472.1 1130.1 1465.6 1129.3 1459.1 1128.3 1452.6 1127.1 1446.2 1125.8 1439.9 1124.3 1433.7 1122.6 1427.5 1120.7 1421.5 1118.7 1415.5 1116.5 1409.6 1114.2 1403.8 1111.7 1398.1 1109.0 1392.5 1106.1 1387.1 1103.1 1381.7 1100.0 1376.4 1096.7 1371.3 1093.2 1366.3 1089.6 1361.4 1085.8 1356.7 1081.9 1354.5 1079.8" fill="none" stroke="#0b0b0b" stroke-width="1.1"/>
<path d="M1265.7 945.9 1265.2 938.9 1264.8 931.7 1264.7 924.6 1264.8 917.3 1265.0 910.1 1265.5 902.7 1266.2 895.4 1267.0 888.0 1268.1 880.6 1269.4 873.2 1270.8 865.8 1272.5 858.4 1274.4 850.9 1276.4 843.5 1278.7 836.1 1281.1 828.7 1283.8 821.3 1286.6 813.9 1289.6 806.6 1292.8 799.3 1296.2 792.1 1299.8 784.9 1303.6 777.8 1307.5 770.7 1311.6 763.7 1315.9 756.7 1320.4 749.8 1325.0 743.0 1329.8 736.3 1334.7 729.7 1339.8 723.2 1345.1 716.7 1350.5 710.4 1356.0 704.2 1361.7 698.0 1367.5 692.0 1373.5 686.1 1379.6 680.4 1385.8 674.7 1392.2 669.2 1398.6 663.8 1405.2 658.6 1411.9 653.5 1418.7 648.5 1425.6 643.7 1432.6 639.1 1439.6 634.6 1446.8 630.2 1454.1 626.0 1461.4 622.0 1468.8 618.1 1476.2 614.5 1483.8 610.9 1491.4 607.6 1499.0 604.4 1506.7 601.4 1514.4 598.6 1522.2 596.0 1530.0 593.5 1537.8 591.2 1545.6 589.1 1553.5 587.2 1561.4 585.5 1569.3 584.0 1577.2 582.6 1585.1 581.5 1592.9 580.5 1600.8 579.8 1608.6 579.2 1616.5 578.8 1624.3 578.6 1632.0 578.6 1639.8 578.8 1647.4 579.2 1655.1 579.8 1662.7 580.5 1670.2 581.5 1677.7 582.6 1685.1 584.0 1692.4 585.5 1699.6 587.2 1706.8 589.1 1713.9 591.2 1720.9 593.5 1727.8 595.9 1734.6 598.5 1741.3 601.4 1747.9 604.3 1754.4 607.5 1760.8 610.8 1767.0 614.3 1773.2 618.0 1779.2 621.7 1785.2 625.6 1791.1 629.6 1796.8 633.7 1802.4 638.0 1808.0 642.5 1813.3 647.0 1818.7 651.7 1823.9 656.5 1828.9 661.4 1833.8 666.5 1838.4 671.8 1842.9 677.3 1847.2 682.9 1851.3 688.6 1855.3 694.5 1859.0 700.6 1862.5 706.7 1865.8 713.0 1868.9 719.4 1871.9 725.9 1874.6 732.5 1877.2 739.2 1879.6 746.0 1881.8 752.8 1883.8 759.8 1885.7 766.8 1887.4 773.8" fill="none" stroke="#0b0b0b" stroke-width="1.1" clip-path="url(#ringclip)"/>
<path d="M1257.4 943V933" fill="none" stroke="#0b0b0b" stroke-width="1.1"/>
<path d="M1196.8 982.7 1199.1 991.6 1201.5 1000.3 1204.2 1008.8 1207.0 1017.3 1210.0 1025.6 1213.1 1033.8 1216.5 1041.8 1220.0 1049.7 1223.7 1057.5 1227.6 1065.1 1231.6 1072.6 1235.9 1080.0 1240.2 1087.2 1244.8 1094.2 1249.5 1101.1 1254.4 1107.8 1259.5 1114.4 1264.7 1120.8 1270.1 1127.1 1275.6 1133.2 1281.3 1139.1 1287.1 1144.8 1293.1 1150.4 1299.2 1155.7 1305.5 1160.9 1311.9 1165.9 1318.5 1170.8 1325.1 1175.4 1331.9 1179.9" fill="none" stroke="#0b0b0b" stroke-width="1.1" />
<path d="M1286.8 780.8Q1294 787 1297.1 791.7Q1302 799 1310 802.5L1341.3 815.2" fill="none" stroke="#0b0b0b" stroke-width="1.1"/>
<path d="M1283.9 957.4L1308.2 945.9" fill="none" stroke="#0b0b0b" stroke-width="1.1"/>
<path d="M1265.8 946L1274 957.6" stroke="#0b0b0b" stroke-width="2" fill="none"/>
<path d="M1083.9 706.2C1092 688 1115 668 1141.3 663.5C1162 661 1181 665 1192.8 673.8" fill="none" stroke="#0b0b0b" stroke-width="1.1"/>
<path d="M990.7 481.3C990.6 479.7 989.6 475.8 990.2 471.9C990.8 468.0 991.6 462.8 994.2 457.7C996.8 452.6 1000.5 446.5 1006.0 441.2C1011.5 435.9 1019.4 430.2 1027.2 425.9C1035.0 421.6 1044.9 417.9 1053.1 415.3C1061.3 412.7 1069.5 411.3 1076.6 410.1C1083.7 408.9 1089.6 408.4 1095.5 408.3C1101.4 408.2 1106.9 408.4 1112.0 409.4C1117.1 410.4 1121.2 411.8 1126.1 414.2C1131.0 416.6 1138.9 422.0 1141.4 423.6" fill="none" stroke="#1a1aff" stroke-width="1.3"/>
<path d="M990.3 481.3L1189.9 970.6" stroke="#c060c8" stroke-width="1.6"/>
<path d="M990.7 481.3L1190.3 970.6" stroke="#1a1aff" stroke-width="1.2" stroke-dasharray="9 2"/>
<path d="M1141.4 423.6L1250.4 953.9" stroke="#1a1aff" stroke-width="1.3" stroke-dasharray="9.5 2"/>
<path d="M1196.5 961.3L1237.5 943.6Q1241 942.6 1243.6 945.3" stroke="#1a1aff" stroke-width="1.2" fill="none"/>
<defs><g id="triad">
<path d="M-4.3 1.2L4.8-2L-6-36.5L-15.2-33.6Z" fill="#0000e6"/>
<path d="M-15.8-56.2L-18.6-37.2Q-10 -31.5 -1.4-40.4Z" fill="#1010f0"/><path d="M-15.8-56.2L-17-38L-12-36.5Z" fill="#4848ff"/>
<path d="M-1.2-3.5L2.8 4.2L-36 22.5L-40 14.5Z" fill="#ff1010"/><path d="M-2 -1.2L-38 16.4L-37 18.6L-1 1Z" fill="#ff8a8a"/>
<path d="M-59.8 27.7L-43.5 10.8Q-36 16 -36.6 26.6Z" fill="#f00000"/><path d="M-59.8 27.7L-43.5 10.8L-40 14Z" fill="#ff7070"/>
<path d="M-2 1.5L4-3.5L20 13L13 18.5Z" fill="#00e400"/>
<path d="M27.500 28.700L11.500 22.500Q9.500 17 15.500 12.800Q22.500 10 26.300 13.500Z" fill="#00ee00"/><path d="M27.500 28.700L11.500 22.500Q10.500 20 11.500 17.500Z" fill="#00b800"/>
</g></defs>
<use href="#triad" x="1559.4" y="885.9"/>
<g clip-path="url(#vpclip)"><use href="#triad" x="414.7" y="1303"/></g>
<defs><clipPath id="vpclip"><rect x="361" y="194" width="2199" height="1165"/></clipPath></defs>
<text x="389.5" y="1243.5" font-family="Liberation Sans, sans-serif" font-size="17.5" fill="#1010ff">Z</text>
<text x="441.5" y="1344" font-family="Liberation Sans, sans-serif" font-size="17.5" fill="#00e000">Y</text>
<text x="365" y="1355.5" font-family="Liberation Sans, sans-serif" font-size="17.3" fill="#111" textLength="100.5" lengthAdjust="spacingAndGlyphs">432.345 mm</text>
<defs>
<linearGradient id="gb" x1="0" y1="0" x2="0" y2="1"><stop offset="0" stop-color="#4fc3e6"/><stop offset="1" stop-color="#0b7fae"/></linearGradient>
<linearGradient id="gbh" x1="0" y1="0" x2="1" y2="0"><stop offset="0" stop-color="#0b86b6"/><stop offset=".35" stop-color="#6fd2ee"/><stop offset="1" stop-color="#0a6d98"/></linearGradient>
<linearGradient id="gbt" x1="0" y1="0" x2="1" y2="1"><stop offset="0" stop-color="#7fd8f0"/><stop offset="1" stop-color="#1a93c0"/></linearGradient>
<linearGradient id="gy" x1="0" y1="0" x2="1" y2="1"><stop offset="0" stop-color="#fff06a"/><stop offset="1" stop-color="#f7a400"/></linearGradient>
<linearGradient id="gyv" x1="0" y1="0" x2="0" y2="1"><stop offset="0" stop-color="#ffb21c"/><stop offset="1" stop-color="#ffe83a"/></linearGradient>
<linearGradient id="gg" x1="0" y1="0" x2="1" y2="0"><stop offset="0" stop-color="#8a8a8a"/><stop offset=".4" stop-color="#f2f2f2"/><stop offset="1" stop-color="#7c7c7c"/></linearGradient>
<linearGradient id="ggv" x1="0" y1="0" x2="0" y2="1"><stop offset="0" stop-color="#9a9a9a"/><stop offset=".4" stop-color="#f4f4f4"/><stop offset="1" stop-color="#858585"/></linearGradient>
<radialGradient id="gsh"><stop offset="0" stop-color="#000" stop-opacity=".35"/><stop offset="1" stop-color="#000" stop-opacity="0"/></radialGradient>
</defs>
<g transform="translate(10 52)"><path d="M1 16L15 8L32 19L16 29Z" fill="#bfe3f5" stroke="#6fb4da" stroke-width=".8"/><path d="M6 19l14-8M11 22l14-8M9 13l14 9M14 10l14 9" stroke="#8cc4e4" stroke-width=".6"/><path d="M14 10.5a7 7 0 1 0 0 13" fill="none" stroke="#d21f2b" stroke-width="2.3"/><path d="M14 22l3-7L29 1.5l4 3L21 18z" fill="url(#gy)" stroke="#e08a00" stroke-width=".6"/><path d="M14 22l3-7l4 3z" fill="#f5d5a8"/><path d="M14 22l1.2-2.8 1.8 1.4z" fill="#333"/></g>
<g transform="translate(52 52)"><ellipse cx="17" cy="28.5" rx="13" ry="3" fill="url(#gsh)"/><path d="M9 6v20a8 3.2 0 0 0 16 0V6z" fill="url(#gbh)"/><ellipse cx="17" cy="6" rx="8" ry="3.2" fill="#8fdcf2" stroke="#2a9cc6" stroke-width=".6"/></g>
<g transform="translate(94.5 52)"><ellipse cx="17" cy="28.5" rx="13" ry="3" fill="url(#gsh)"/><path d="M1 12L17 4L32 9L32 20L16 28L1 23Z" fill="url(#gb)"/><path d="M1 12L17 4L32 9L16 17Z" fill="url(#gbt)"/><path d="M1.5 12.5L16 17V27.5L1.5 22.8Z" fill="url(#gy)" stroke="#d4541a" stroke-width="1"/><path d="M20 29c4-1 7-3 8.5-5.5L26.5 22l6-1.5-.8 6.5-1.7-1.6C28 29 24 31 21.5 31.5z" fill="#d21f2b"/></g>
<g transform="translate(130.5 52)"><ellipse cx="17" cy="28.5" rx="13" ry="3" fill="url(#gsh)"/><path d="M2 14a8 4 0 0 1 16 0v10a8 4 0 0 1-16 0z" fill="url(#gbh)"/><path d="M8 6a5 2.5 0 0 1 10 0v12h-10z" fill="url(#gbh)"/><ellipse cx="13" cy="6" rx="5" ry="2.5" fill="#a9e4f5" stroke="#2a9cc6" stroke-width=".5"/><path d="M13 7v15l9 4v-9l-4-1.5V8.5z" fill="url(#gy)" stroke="#d4541a" stroke-width=".9"/><path d="M18 14a8 4 0 0 1 5 4v8l-1 .5v-9l-4-1.5z" fill="#bfeaf7"/><path d="M24 28c2-3 3.500-6 3.500-9.500L25 19l4.500-4 2.500 5.500-2.200-.6c-.3 3.600-1.800 7-3.800 9.600z" fill="#d21f2b"/></g>
<g transform="translate(166.5 52)"><ellipse cx="17" cy="28.5" rx="13" ry="3" fill="url(#gsh)"/><path d="M1 12C8 10 14 4 22 4L32 7V18C24 18 18 24 11 26L1 23Z" fill="url(#gb)"/><path d="M1 12C8 10 14 4 22 4L32 7C24 7 18 14 11 15.500Z" fill="url(#gbt)"/><path d="M1.500 12.500L11 15.500V25.500L1.500 22.600Z" fill="url(#gy)" stroke="#d4541a" stroke-width="1"/><path d="M12 30c3-2.500 6-2 9-2.500s5-1.500 6.500-3L25.500 23l6.500-1-1.500 6-1.500-1.700c-2 2-4.500 3-7.500 3.400s-5 0-7.500 1.800z" fill="#d21f2b"/></g>
<g transform="translate(202.5 52)"><ellipse cx="17" cy="28.5" rx="13" ry="3" fill="url(#gsh)"/><path d="M1 22C2 13 8 5 19 4.500c8 0 12 8 13 14.500L17 27.500z" fill="#2a9fd0" stroke="#d4541a" stroke-width=".8"/><path d="M7 11c3-4 8-6.500 12-6.500 2 3 4 8 5 13L13 13z" fill="url(#gy)"/><path d="M24.500 9c3 2.500 5 6 6 9l-6 3c0-4-.5-8-2-11z" fill="url(#gy)"/><path d="M13 13l11 5c.5 2 .5 4 .3 5.500l-7 3.500c-1-5-2.500-9-6.300-12.500z" fill="#ffd23a" opacity=".9"/><path d="M19 4.500c3 6 5 13 5.300 19M7 11c6 2 13 6 17.500 10M12 6.500c6 2 13 7 17 11.500" stroke="#1d7faa" stroke-width=".7" fill="none"/><path d="M1 22c1-6 3-9.500 6-11 4.500 3.500 8 9 10 16.500z" fill="url(#gy)" stroke="#d4541a" stroke-width=".8"/></g>
<g transform="translate(247 52)"><ellipse cx="17" cy="28.5" rx="13" ry="3" fill="url(#gsh)"/><path d="M1 10L14 3L32 12V20L19 28L1 20Z" fill="url(#gb)"/><path d="M1 10L14 3L20 6L8 13.500Z" fill="url(#gbt)"/><path d="M8 13.500L20 6C27 7 31 11 32 17L19 25C19 19 15 14.500 8 13.500Z" fill="url(#gy)" stroke="#d4541a" stroke-width=".8"/><path d="M1 10L8 13.500C15 14.500 19 19 19 25V28L1 20Z" fill="url(#gbh)" opacity=".9"/></g>
<g transform="translate(283 52)"><ellipse cx="17" cy="28.5" rx="13" ry="3" fill="url(#gsh)"/><path d="M1 10L14 3L32 17V20L19 28L1 20Z" fill="url(#gb)"/><path d="M1 10L14 3L20 6L8 13.500Z" fill="url(#gbt)"/><path d="M8 13.500L20 6L32 17L19 24.500Z" fill="url(#gy)" stroke="#d4541a" stroke-width=".8"/><path d="M1 10L8 13.500L19 24.500V28L1 20Z" fill="url(#gbh)" opacity=".9"/></g>
<g transform="translate(319 52)"><path d="M1 15L13 9L31 14V23L19 29L1 24Z" fill="url(#gb)"/><path d="M1 15L19 20V29L1 24Z" fill="#7fd8f0" opacity=".6"/><path d="M1 15L5 7L16 3L29 7L31 14L19 20Z" fill="url(#gy)" stroke="#d4541a" stroke-width=".8"/><path d="M5 7L20 11L29 7M20 11L19 20" stroke="#d4541a" stroke-width=".7" fill="none"/><path d="M7 22v6M7 28l-6 4M7 28l6 4" stroke="#d21f2b" stroke-width="2.200" stroke-linecap="round"/></g>
<g transform="translate(353 52)"><rect x="4" y="6" width="24" height="24" rx="1.500" fill="url(#gb)"/><rect x="4" y="6" width="24" height="24" rx="1.500" fill="url(#gbh)" opacity=".35"/><rect x="12.500" y="6" width="6" height="24" fill="#ffe53a" stroke="#e0a000" stroke-width=".5"/><path d="M15.500 4v28" stroke="#7aa" stroke-width=".8" stroke-dasharray="2 1.500"/></g>
<g transform="translate(385 52)"><ellipse cx="17" cy="28.5" rx="13" ry="3" fill="url(#gsh)"/><path d="M3 9L15 1V18L30 23L18 30L3 25Z" fill="url(#gb)"/><path d="M3 9L15 1L16.500 2L4.500 10Z" fill="#9fe0f3"/><path d="M15 18L30 23L18 30L3 25Z" fill="url(#gbt)"/><path d="M10 6L24 24L21 26L10 21Z" fill="url(#gy)" stroke="#d4541a" stroke-width=".8"/><path d="M10 6l3-1.500L27 22.500 24 24z" fill="#e8871a" stroke="#d4541a" stroke-width=".6"/></g>
<g transform="translate(419.5 52)"><rect x="18" y="5" width="14" height="23" fill="url(#ggv)"/><path d="M0 6l4-1 9 22-4 1zM6 5l4-1 9 22-4 1zM12 4l4-1 9 22-4 1zM18 4l3-1 5 12-3 1z" fill="url(#gbh)" stroke="#0a6a94" stroke-width=".4"/><path d="M19 16l6-2-1.500 5.500z" fill="url(#gy)" stroke="#d4541a" stroke-width=".6"/></g>
<g transform="translate(455.5 52)"><ellipse cx="17" cy="28.5" rx="13" ry="3" fill="url(#gsh)"/><path d="M1 9L14 3L24 7V14L32 17V22L19 29L1 21Z" fill="url(#gb)"/><path d="M1 9L14 3L24 7L11 13Z" fill="url(#gbt)"/><path d="M11 13L24 7V14L11 20Z" fill="#f0a010" stroke="#d4541a" stroke-width=".6"/><path d="M11 20L24 14L32 17L19 23.500Z" fill="url(#gy)" stroke="#d4541a" stroke-width=".6"/><path d="M1 9L11 13V20L19 23.500V29L1 21Z" fill="url(#gbh)" opacity=".85"/></g>
<g transform="translate(491.5 52)"><ellipse cx="17" cy="28.5" rx="13" ry="3" fill="url(#gsh)"/><path d="M1 12L18 4L31 9V21L14 29L1 23Z" fill="#ffd65a" opacity=".75" stroke="#e0952a" stroke-width=".8"/><path d="M1 12L14 17L31 9M14 17V29" stroke="#e0952a" stroke-width=".8" fill="none"/><path d="M4 22c0-7 4-9 8-9s6 4 6 8M4 22l14-1M12 13l12-5" stroke="#5aa6c8" stroke-width=".8" fill="none"/></g>
<g transform="translate(542 52)"><ellipse cx="17" cy="28.5" rx="13" ry="3" fill="url(#gsh)"/><path d="M1 9L12 3L31 14V20L20 27L1 16Z" fill="url(#gb)"/><path d="M1 9L12 3L31 14L20 20Z" fill="#5cc8e8" opacity=".7"/><path d="M4 10L24 21.500V25L4 14Z" fill="#a8d070" opacity=".8"/><path d="M5 8L11 5L28 15L23 18Z" fill="url(#gy)" stroke="#d4541a" stroke-width=".7"/><path d="M1 9L20 20V27L1 16Z" fill="none" stroke="#0a6a94" stroke-width=".7"/></g>
<g transform="translate(584.5 52)"><ellipse cx="17" cy="28.5" rx="13" ry="3" fill="url(#gsh)"/><path d="M1 10L13 3L32 13V20L20 27L1 17Z" fill="url(#gb)"/><path d="M1 10L13 3L32 13L20 20Z" fill="url(#gy)" stroke="#d4541a" stroke-width=".8"/><path d="M9 12L17 8L24 12L16 16.500Z" fill="#fff" stroke="#c98a20" stroke-width=".6"/><path d="M1 10L20 20V27L1 17Z" fill="url(#gbh)" opacity=".8"/></g>
<g transform="translate(620.5 52)"><path d="M1 12C6 6 12 10 17 6S27 2 31 6V14C27 10 22 16 17 20S8 22 4 24Z" fill="url(#gbt)" stroke="#0a6a94" stroke-width=".5"/><path d="M4 9l8 10M10 8l9 9M17 6l8 8M23 4l7 6M3 14c6-4 20-12 27-7M6 20c6-4 17-12 24-10" stroke="#1d8fba" stroke-width=".6" fill="none"/><path d="M1 12C3 18 8 24 17 26S29 18 31 14V9C28 14 24 21 17 22S4 16 1 12Z" fill="url(#gy)" stroke="#d4541a" stroke-width=".8"/></g>
<g transform="translate(668.5 52)"><ellipse cx="17" cy="28.5" rx="13" ry="3" fill="url(#gsh)"/><path d="M9 14v13a8 3 0 0 0 16 0V14z" fill="url(#gbh)"/><path d="M1 15L17 10L32 14V20L16 25L1 21Z" fill="url(#gy)" stroke="#d4541a" stroke-width=".8"/><path d="M1 15L16 19.500L32 14M16 19.500V25" stroke="#d4541a" stroke-width=".7" fill="none"/><path d="M9 4v12a8 3 0 0 0 16 0V4z" fill="url(#gbh)"/><ellipse cx="17" cy="4" rx="8" ry="3" fill="#8fdcf2" stroke="#2a9cc6" stroke-width=".6"/></g>
<g transform="translate(716.1 52)"><ellipse cx="17" cy="28.5" rx="13" ry="3" fill="url(#gsh)"/><path d="M1 12L12 7V21L1 25Z" fill="url(#gb)"/><path d="M14 11L26 6L32 9V22L20 28L14 25Z" fill="url(#gb)"/><path d="M14 11L26 6L32 9L20 14Z" fill="url(#gbt)"/><path d="M1 12L6 9.500 12 7l2 1-8 4z" fill="url(#gbt)"/><path d="M6 3L26 0V22L6 28Z" fill="#e8e8e8" opacity=".6" stroke="#aaa" stroke-width=".6"/><path d="M6 16C12 8 18 14 26 6V10C18 18 12 12 6 20Z" fill="#f08a5a" opacity=".7"/></g>
<g transform="translate(752.1 52)"><ellipse cx="17" cy="28.5" rx="13" ry="3" fill="url(#gsh)"/><path d="M1 9L14 3L32 8V20L18 28L1 21Z" fill="url(#gb)"/><path d="M1 9L14 3L32 8L19 13Z" fill="#8fdcf2"/><path d="M11 10L26 8L32 18L18 26Z" fill="#c86a3a" stroke="#d4541a" stroke-width=".7"/><path d="M11 10L26 8L28 12L14 15Z" fill="#58b080"/><path d="M1 9L18 15V28L1 21Z" fill="url(#gbh)" opacity=".8"/></g>
<g transform="translate(788.5 52)"><path d="M1 22L18 17L32 21L15 28Z" fill="#2aa6d2" stroke="#0a6a94" stroke-width=".5"/><path d="M8 6L17 2L26 5V16L17 20L8 17Z" fill="url(#gb)"/><path d="M8 6L17 2L26 5L17 9Z" fill="url(#gbt)"/><path d="M8 17V24M26 16V23M17 20V27" stroke="#d21f2b" stroke-width=".9"/><path d="M8 24L17 20L26 23L17 27Z" fill="url(#gy)" stroke="#d21f2b" stroke-width=".8"/></g>
<g transform="translate(842.5 52)"><path d="M2 15L12 17L14 30L4 27Z" fill="#5cc8e8" stroke="#0a6a94" stroke-width=".6" opacity=".9"/><path d="M12 17L24 2L30 5V22L14 30Z" fill="url(#gb)" opacity=".92"/><path d="M24 2L30 5L16 22L12 17Z" fill="#6fd2ee"/><path d="M2 15L14 30M4 27L12 17" stroke="#0a6a94" stroke-width=".5"/><path d="M11 15.500l11 3" stroke="#d21f2b" stroke-width="2.600"/></g>
<g transform="translate(897 52)"><path d="M1 16C8 12 14 14 20 10L31 18C26 24 18 22 12 28Z" fill="#bfe6f7" stroke="#58aed6" stroke-width=".7"/><path d="M7 16l12-4 6 4-5 2 3 2-9 5-5-3 6-3z" fill="#1c8fc0"/><rect x="15.500" y=".5" width="16" height="13" fill="#f2f2f2" stroke="#888"/><path d="M17 10c2-10 4-10 6-3s4 6 6-3" fill="none" stroke="#1a3fa8" stroke-width="1.300"/><circle cx="17.500" cy="10" r="1.300" fill="#d21f2b"/><circle cx="21" cy="3" r="1.300" fill="#d21f2b"/><circle cx="25.500" cy="10.500" r="1.300" fill="#d21f2b"/><circle cx="29.500" cy="4" r="1.300" fill="#d21f2b"/></g>
<g transform="translate(953.5 52)"><ellipse cx="17" cy="28.5" rx="13" ry="3" fill="url(#gsh)"/><path d="M3 23L28 18L32 24L8 30Z" fill="url(#gb)"/><path d="M3 23L28 18L29 20L4 25Z" fill="#8fdcf2"/><path d="M3 24C10 20 12 12 6 4L12 3C20 10 17 22 8 29Z" fill="url(#gy)" stroke="#d9a000" stroke-width=".8"/><path d="M17 8l6-2v3c3 1 4.500 4 4.500 8h-2.500c0-3-1-5-3-5.500V14z" fill="#d21f2b"/></g>
<g transform="translate(1037.5 52)"><ellipse cx="17" cy="28.5" rx="13" ry="3" fill="url(#gsh)"/><path d="M6 12v14a9 3.500 0 0 0 18 0V12z" fill="url(#gbh)"/><path d="M6 12a9 3.500 0 0 1 18 0c2 0 4-1 5-2l1 2c-2 2-4 3-6 3a9 3.500 0 0 1-18-3z" fill="#39b4dc"/><circle cx="29" cy="11" r="2" fill="#d21f2b"/><path d="M10 4c5-4 12-4 17 0l1.500-2 1.500 7-7-1 2-2c-4-3-9-3-13 0z" fill="#d21f2b"/></g>
<g transform="translate(1121 52)"><ellipse cx="17" cy="28.5" rx="13" ry="3" fill="url(#gsh)"/><path d="M2 8v18a7 3 0 0 0 14 0V8z" fill="url(#gbh)"/><ellipse cx="9" cy="8" rx="7" ry="3" fill="#8fdcf2" stroke="#2a9cc6" stroke-width=".6"/><path d="M2 13c3 2 8 2 11 1v10c-3 1-8 1-11-1z" fill="url(#gy)" stroke="#d4541a" stroke-width=".7"/><path d="M19 12L27 9L34 12V16L26 20L19 16Z" fill="url(#gb)"/><path d="M19 12L27 9L34 12L26 15Z" fill="#8fdcf2"/><path d="M19 15l-9 6 1-4-3 1 8-6z" fill="#d21f2b"/></g>
<g transform="translate(1193 52)"><path d="M6 3C12 1 20 3 27 1C25 10 30 20 28 29C20 31 12 28 7 30C9 20 4 12 6 3Z" fill="url(#gb)"/><rect x="10" y="7" width="3.600" height="4.600" fill="#ffd83a"/><rect x="15.5" y="7" width="3.600" height="4.600" fill="#ffd83a"/><rect x="21" y="7" width="3.600" height="4.600" fill="#ffd83a"/><rect x="10" y="14" width="3.600" height="4.600" fill="#ffd83a"/><rect x="15.5" y="14" width="3.600" height="4.600" fill="#ffd83a"/><rect x="21" y="14" width="3.600" height="4.600" fill="#ffd83a"/><rect x="10" y="21" width="3.600" height="4.600" fill="#ffd83a"/><rect x="15.5" y="21" width="3.600" height="4.600" fill="#ffd83a"/><rect x="21" y="21" width="3.600" height="4.600" fill="#ffd83a"/></g>
<g transform="translate(1279.5 52)"><rect x="6" y="6" width="4.400" height="4.400" rx="1" fill="#9fd4ee" stroke="#4a9ccc" stroke-width=".7"/><rect x="14.5" y="6" width="4.400" height="4.400" rx="1" fill="#9fd4ee" stroke="#4a9ccc" stroke-width=".7"/><rect x="23" y="6" width="4.400" height="4.400" rx="1" fill="#9fd4ee" stroke="#4a9ccc" stroke-width=".7"/><rect x="6" y="14.5" width="4.400" height="4.400" rx="1" fill="#9fd4ee" stroke="#4a9ccc" stroke-width=".7"/><rect x="14.5" y="14.5" width="4.400" height="4.400" rx="1" fill="#9fd4ee" stroke="#4a9ccc" stroke-width=".7"/><rect x="23" y="14.5" width="4.400" height="4.400" rx="1" fill="#9fd4ee" stroke="#4a9ccc" stroke-width=".7"/><rect x="6" y="23" width="4.400" height="4.400" rx="1" fill="#d21f2b" stroke="#d21f2b" stroke-width=".7"/><rect x="14.5" y="23" width="4.400" height="4.400" rx="1" fill="#9fd4ee" stroke="#4a9ccc" stroke-width=".7"/><rect x="23" y="23" width="4.400" height="4.400" rx="1" fill="#9fd4ee" stroke="#4a9ccc" stroke-width=".7"/></g>
<g transform="translate(1351.9 52)"><path d="M16 4v26" stroke="#2a9ccc" stroke-width="2.400"/><rect x="7" y="14.500" width="4.400" height="4.400" rx="1" fill="#d21f2b"/><rect x="21" y="14.500" width="4.400" height="4.400" rx="1" fill="#9fd4ee" stroke="#4a9ccc" stroke-width=".7"/></g>
<g transform="translate(1406 52)"><g transform="translate(4 2)"><path d="M0 9C0 3 5 0 9 0V19C9 23 0 26 0 23Z" fill="url(#gg)" stroke="#aaa" stroke-width=".6" stroke-dasharray="1 1"/></g><g transform="translate(22 2)"><path d="M0 9C0 3 5 0 9 0V19C9 23 0 26 0 23Z" fill="url(#gbh)" stroke="#0a6a94" stroke-width=".5"/><ellipse cx="4.500" cy="5" rx="5" ry="3.200" transform="rotate(-42 4.500 5)" fill="#a9e4f5" stroke="#2a9cc6" stroke-width=".5"/></g><circle cx="4.500" cy="24" r="2.300" fill="#d21f2b"/><circle cx="22.500" cy="24" r="2.300" fill="#d21f2b"/><path d="M5 30.500h21v-2.500l5.500 3.500-5.500 3.500v-2.500H5z" fill="#d21f2b" transform="translate(0 -1.500)"/></g>
<g transform="translate(1442 52)"><g transform="translate(3 2)"><path d="M0 9C0 3 5 0 9 0V19C9 23 0 26 0 23Z" fill="url(#gbh)" stroke="#0a6a94" stroke-width=".5"/><ellipse cx="4.500" cy="5" rx="5" ry="3.200" transform="rotate(-42 4.500 5)" fill="#a9e4f5" stroke="#2a9cc6" stroke-width=".5"/></g><g transform="translate(21 2)"><path d="M0 9C0 3 5 0 9 0V19C9 23 0 26 0 23Z" fill="url(#gbh)" stroke="#0a6a94" stroke-width=".5"/><ellipse cx="4.500" cy="5" rx="5" ry="3.200" transform="rotate(-42 4.500 5)" fill="#a9e4f5" stroke="#2a9cc6" stroke-width=".5"/></g><circle cx="3.500" cy="24" r="2.300" fill="#d21f2b"/><circle cx="21.500" cy="24" r="2.300" fill="#d21f2b"/><path d="M4 30.500h21v-2.500l5.500 3.500-5.500 3.500v-2.500H4z" fill="#d21f2b" transform="translate(0 -1.500)"/></g>
<g transform="translate(1477.5 52)"><path d="M5.500 2L9.500 8H7V26H9.500L5.500 32L1.500 26H4V8H1.500Z" fill="#d21f2b"/><path d="M15 10C15 4 20 1 29 1V26C29 31 15 34 15 30Z" fill="url(#gg)" stroke="#aaa" stroke-width=".6" stroke-dasharray="1 1"/><g transform="translate(18 9)"><path d="M0 9C0 3 5 0 9 0V19C9 23 0 26 0 23Z" fill="url(#gbh)" stroke="#0a6a94" stroke-width=".5"/><ellipse cx="4.500" cy="5" rx="5" ry="3.200" transform="rotate(-42 4.500 5)" fill="#a9e4f5" stroke="#2a9cc6" stroke-width=".5"/></g></g>
<g transform="translate(1529.5 52)"><rect x="2.500" y="3.500" width="27" height="27" fill="#fff" stroke="#2a9ccc" stroke-width="1.800"/><rect x="4" y="5" width="24" height="24" fill="none" stroke="#8fd2ee" stroke-width=".8"/><path d="M16 4v13h13" fill="none" stroke="#2a9ccc" stroke-width="1.600"/><circle cx="16" cy="17" r="1.800" fill="#d21f2b"/><text x="5.500" y="15.500" font-family="Liberation Sans, sans-serif" font-weight="bold" font-size="11" fill="#d21f2b">3</text><text x="5.500" y="28.500" font-family="Liberation Sans, sans-serif" font-weight="bold" font-size="11" fill="#d21f2b">1</text><text x="18.500" y="28.500" font-family="Liberation Sans, sans-serif" font-weight="bold" font-size="11" fill="#d21f2b">2</text></g>
<path d="M4 4h15.500l-5.500 12.500h3l-5 2.500-5-2.500h2.500z" fill="#1c86cc"/><path d="M4 4h7.500l.5 15-5-2.500h2.500z" fill="#2aa0e0"/><path d="M9.500 17.500h5l1 1.500h-7z" fill="#222"/><path d="M7.500 10.500c1.500-1 2-3 3.500-4.500l2 1-1.500 3 2.500-1 .8 1.500-3.500 2.500-1 3-1.600-.5.600-3z" fill="#fff" stroke="#223" stroke-width=".5"/><circle cx="11.500" cy="4.500" r="1.400" fill="#fff" stroke="#223" stroke-width=".5"/>
<line x1="24.5" y1="5" x2="24.5" y2="18" stroke="#8a8f96" stroke-width="1"/>
<path d="M39.500 6.500h6l3 3v8.500h-9z" fill="#fff" stroke="#b9c4d4"/><path d="M45.500 6.500v3h3" fill="none" stroke="#b9c4d4"/>
<path d="M62 10h5l1.500 1.500H75.500v7H62z" fill="#ffb400"/><path d="M62 18.500l2.500-6H77l-2.500 6z" fill="#ffd84a"/><path d="M61 9.500l4-4v2.500c3 0 5.500.5 6.500 3-2-1.500-4-1.500-6.500-1.300v2.800z" fill="#e0202a"/>
<rect x="84.500" y="4.500" width="15.500" height="14" rx="1" fill="#1a5a94" stroke="#0e3c6a"/><rect x="87" y="5" width="10.500" height="6.500" fill="#dff0fb"/><path d="M87 7h10.500M87 9h10.500" stroke="#8cc0e0" stroke-width=".7"/><rect x="88" y="13.500" width="8.500" height="5" fill="#e8e8e8"/><rect x="93.500" y="14.500" width="2" height="3.500" fill="#1a3a5a"/>
<g transform="translate(108.5 0)"><path d="M3.500 10l1-4h6.500l1 4z" fill="#fff" stroke="#aaa" stroke-width=".6"/><rect x=".5" y="9.500" width="14" height="6.500" rx="1.500" fill="#8d8d8d"/><rect x="1" y="13" width="13" height="4.500" rx="1" fill="#5e5e5e"/><rect x="8" y="12.500" width="2.500" height="1.400" fill="#e8e000"/></g>
<g transform="translate(132.5 0)"><path d="M3.500 10l1-4h6.500l1 4z" fill="#fff" stroke="#aaa" stroke-width=".6"/><rect x=".5" y="9.500" width="14" height="6.500" rx="1.500" fill="#8d8d8d"/><rect x="1" y="13" width="13" height="4.500" rx="1" fill="#5e5e5e"/><rect x="8" y="12.500" width="2.500" height="1.400" fill="#e8e000"/><path d="M.5 8h6M3.500 5v6" stroke="#e0202a" stroke-width="1.800"/></g>
<path d="M158 12.500l4.500-4.500v2.500c4 0 6.500 1.500 7.500 4.500-2-1.800-4.500-2.200-7.500-2v2.500z" fill="#3aa0d0"/>
<path d="M194 12.500l-4.500-4.500v2.500c-4 0-6.500 1.500-7.500 4.500 2-1.800 4.500-2.200 7.500-2v2.500z" fill="#c2c6cb"/>
<g fill="none" stroke="#3aa0d0" stroke-width="1.700"><path d="M206 9.500a6.500 6.500 0 0 1 4-4"/><path d="M214 5.500a6.500 6.500 0 0 1 4 4"/><path d="M218 14a6.500 6.500 0 0 1-4 4"/><path d="M210 18a6.500 6.500 0 0 1-4-4"/></g><path d="M209 3.500l3 2-3 2zM219.500 8.500l-2 3-2-3zM215 20l-3-2 3-2zM204.500 15l2-3 2 3z" fill="#3aa0d0"/>
<path d="M228 10.200h7M228.300 12.700h6.400l-3.200 3.200z" stroke="#000" fill="#000" stroke-width="1"/>
<path d="M250 7.600v10.200l-6-5.100z" fill="#1e90e8"/>
<rect x="2497.500" y="12.500" width="7" height="3" rx=".8" fill="#fff" stroke="#8a8f96"/>
<rect x="2520.500" y="6.500" width="8" height="7" rx="1" fill="#fff" stroke="#8a8f96"/><rect x="2517.500" y="9.500" width="8" height="7" rx="1" fill="#fff" stroke="#8a8f96"/><rect x="2519.500" y="12.500" width="3" height="2" fill="none" stroke="#8a8f96" stroke-width=".8"/>
<path d="M2542 7.500l9.500 8M2551.500 7.500l-9.500 8" stroke="#8a8f96" stroke-width="3.400"/><path d="M2542 7.500l9.500 8M2551.500 7.500l-9.500 8" stroke="#fff" stroke-width="1.600"/>
<path d="M2261.500 36.500l4-4 4 4" fill="none" stroke="#333" stroke-width="2.600" stroke-linejoin="round"/><path d="M2261.500 36.500l4-4 4 4" fill="none" stroke="#fff" stroke-width=".9"/>
<rect x="2282.5" y="25.5" width="158" height="19" fill="#fff" stroke="#b4bac3" stroke-width="1"/>
<text class="t" x="2285" y="39.94" font-size="12" fill="#8a8a8a">查找命令</text>
<circle cx="2425" cy="34.500" r="5.300" fill="none" stroke="#999" stroke-width="1.100"/><path d="M2429 38.500l2.500 2.500" stroke="#3a9ad8" stroke-width="1.600"/>
<g transform="translate(2457.800 35)" fill="#f4f4f4" stroke="#9a9a9a" stroke-width=".9"><rect x="-1.600" y="-7.800" width="3.200" height="3.400" rx=".8" transform="rotate(0)"/><rect x="-1.600" y="-7.800" width="3.200" height="3.400" rx=".8" transform="rotate(45)"/><rect x="-1.600" y="-7.800" width="3.200" height="3.400" rx=".8" transform="rotate(90)"/><rect x="-1.600" y="-7.800" width="3.200" height="3.400" rx=".8" transform="rotate(135)"/><rect x="-1.600" y="-7.800" width="3.200" height="3.400" rx=".8" transform="rotate(180)"/><rect x="-1.600" y="-7.800" width="3.200" height="3.400" rx=".8" transform="rotate(225)"/><rect x="-1.600" y="-7.800" width="3.200" height="3.400" rx=".8" transform="rotate(270)"/><rect x="-1.600" y="-7.800" width="3.200" height="3.400" rx=".8" transform="rotate(315)"/><circle r="5.600"/><circle r="2.600" fill="#e3e6ea"/></g>
<circle cx="2486" cy="35" r="7.500" fill="#1c4eb6" stroke="#d8dce4" stroke-width="1.200"/><circle cx="2486" cy="35" r="8.300" fill="none" stroke="#7a8090" stroke-width=".5"/><text x="2486" y="39.600" text-anchor="middle" font-family="Liberation Sans, sans-serif" font-weight="bold" font-size="12.500" fill="#fff">?</text>
<path d="M2500 32.8h5l-2.5 2.8z" fill="#333"/>
<rect x="2515" y="38" width="7" height="2.200" fill="#000"/>
<rect x="2533.500" y="31.500" width="5" height="4.500" fill="none" stroke="#000" stroke-width="1.300"/><rect x="2531.500" y="34" width="5" height="4.500" fill="#e3e6ea" stroke="#000" stroke-width="1.300"/>
<path d="M2548 33l6.500 8M2554.500 33l-6.500 8" stroke="#000" stroke-width="1.800"/>
<g transform="translate(99 317)"><path d="M7 9L1 15M7 9l7 4M7 9V2" stroke="#b0b0b0" stroke-width="1.100" fill="none"/><path d="M2 2l2 2.500M4 2L2 4.500M12 13l2 2M14 13l-2 2" stroke="#b8b8b8" stroke-width=".6"/><rect x="8.500" y=".5" width="7" height="7" fill="#1e6e9e" stroke="#0e4a72" stroke-width=".8"/><rect x="10.300" y="2.300" width="3.400" height="3.400" fill="#d8eef8"/><path d="M12 2.500v3" stroke="#1e6e9e" stroke-width=".9"/></g>
<g transform="translate(99 335)"><path d="M.3 9c1.500-3.500 5.500-5.500 9-4l6.500 5-6.500 5.300c-3.500.5-7.500-2-9-6.300z" fill="#ececec" stroke="#a8a8a8" stroke-width=".8"/><path d="M2.500 8.500a3.500 3 0 1 0 5.500 2" fill="none" stroke="#8e8e8e" stroke-width="1.300"/><path d="M4.500 13l8.500-3.500M7.500 14.500l7-4" stroke="#bdbdbd" stroke-width=".7"/><rect x="8.500" y=".5" width="7" height="7" fill="#1e6e9e" stroke="#0e4a72" stroke-width=".8"/><rect x="10.300" y="2.300" width="3.400" height="3.400" fill="#d8eef8"/><path d="M12 2.500v3" stroke="#1e6e9e" stroke-width=".9"/></g>
<g transform="translate(99 353)"><rect x="1.500" y="2.500" width="12" height="12" fill="#f4f4f4" stroke="#a8a8a8"/><path d="M7.500 2.500v6h6" fill="none" stroke="#b8b8b8" stroke-width=".8"/><path d="M4 10.500v3M10 10.500h2v1.500h-2v1.500h2M4 4.500h1.500v2H4" stroke="#b0b0b0" stroke-width=".7" fill="none"/><rect x="8.500" y=".5" width="7" height="7" fill="#1e6e9e" stroke="#0e4a72" stroke-width=".8"/><rect x="10.300" y="2.300" width="3.400" height="3.400" fill="#d8eef8"/><path d="M12 2.500v3" stroke="#1e6e9e" stroke-width=".9"/></g>
<g transform="translate(99 371)"><path d="M.3 9c1.500-3.500 5.500-5.500 9-4l6.500 5-6.500 5.300c-3.500.5-7.500-2-9-6.300z" fill="#ececec" stroke="#a8a8a8" stroke-width=".8"/><path d="M2.500 8.500a3.500 3 0 1 0 5.500 2" fill="none" stroke="#8e8e8e" stroke-width="1.300"/><path d="M4.500 13l8.500-3.500M7.500 14.500l7-4" stroke="#bdbdbd" stroke-width=".7"/><rect x="8.500" y=".5" width="7" height="7" fill="#1e6e9e" stroke="#0e4a72" stroke-width=".8"/><rect x="10.300" y="2.300" width="3.400" height="3.400" fill="#d8eef8"/><path d="M12 2.500v3" stroke="#1e6e9e" stroke-width=".9"/></g>
<g transform="translate(99 389)"><path d="M.3 9c1.500-3.500 5.500-5.500 9-4l6.500 5-6.500 5.300c-3.500.5-7.500-2-9-6.300z" fill="#ececec" stroke="#a8a8a8" stroke-width=".8"/><path d="M2.500 8.500a3.500 3 0 1 0 5.500 2" fill="none" stroke="#8e8e8e" stroke-width="1.300"/><path d="M4.500 13l8.500-3.500M7.500 14.500l7-4" stroke="#bdbdbd" stroke-width=".7"/><rect x="8.500" y=".5" width="7" height="7" fill="#1e6e9e" stroke="#0e4a72" stroke-width=".8"/><rect x="10.300" y="2.300" width="3.400" height="3.400" fill="#d8eef8"/><path d="M12 2.500v3" stroke="#1e6e9e" stroke-width=".9"/></g>
<g transform="translate(99 407)"><rect x="1.500" y="2.500" width="12" height="12" fill="#f4f4f4" stroke="#a8a8a8"/><path d="M7.500 2.500v6h6" fill="none" stroke="#b8b8b8" stroke-width=".8"/><path d="M4 10.500v3M10 10.500h2v1.500h-2v1.500h2M4 4.500h1.500v2H4" stroke="#b0b0b0" stroke-width=".7" fill="none"/><rect x="8.500" y=".5" width="7" height="7" fill="#1e6e9e" stroke="#0e4a72" stroke-width=".8"/><rect x="10.300" y="2.300" width="3.400" height="3.400" fill="#d8eef8"/><path d="M12 2.500v3" stroke="#1e6e9e" stroke-width=".9"/></g>
<g transform="translate(99 425)"><rect x="1.500" y="2.500" width="12" height="12" fill="#f4f4f4" stroke="#a8a8a8"/><path d="M7.500 2.500v6h6" fill="none" stroke="#b8b8b8" stroke-width=".8"/><path d="M4 10.500v3M10 10.500h2v1.500h-2v1.500h2M4 4.500h1.500v2H4" stroke="#b0b0b0" stroke-width=".7" fill="none"/><rect x="8.500" y=".5" width="7" height="7" fill="#1e6e9e" stroke="#0e4a72" stroke-width=".8"/><rect x="10.300" y="2.300" width="3.400" height="3.400" fill="#d8eef8"/><path d="M12 2.500v3" stroke="#1e6e9e" stroke-width=".9"/></g>
<g transform="translate(99 443)"><rect x="1.500" y="2.500" width="12" height="12" fill="#f4f4f4" stroke="#a8a8a8"/><path d="M7.500 2.500v6h6" fill="none" stroke="#b8b8b8" stroke-width=".8"/><path d="M4 10.500v3M10 10.500h2v1.500h-2v1.500h2M4 4.500h1.500v2H4" stroke="#b0b0b0" stroke-width=".7" fill="none"/><rect x="8.500" y=".5" width="7" height="7" fill="#1e6e9e" stroke="#0e4a72" stroke-width=".8"/><rect x="10.300" y="2.300" width="3.400" height="3.400" fill="#d8eef8"/><path d="M12 2.500v3" stroke="#1e6e9e" stroke-width=".9"/></g>
<g transform="translate(99 461)"><path d="M.3 9c1.500-3.500 5.500-5.500 9-4l6.500 5-6.500 5.300c-3.500.5-7.500-2-9-6.300z" fill="#ececec" stroke="#a8a8a8" stroke-width=".8"/><path d="M2.500 8.500a3.500 3 0 1 0 5.500 2" fill="none" stroke="#8e8e8e" stroke-width="1.300"/><path d="M4.500 13l8.500-3.500M7.500 14.500l7-4" stroke="#bdbdbd" stroke-width=".7"/><rect x="8.500" y=".5" width="7" height="7" fill="#1e6e9e" stroke="#0e4a72" stroke-width=".8"/><rect x="10.300" y="2.300" width="3.400" height="3.400" fill="#d8eef8"/><path d="M12 2.500v3" stroke="#1e6e9e" stroke-width=".9"/><path d="M1.600 1.500v8" stroke="#e8401a" stroke-width="2.400" stroke-linecap="round"/><circle cx="1.600" cy="13" r="1.400" fill="#e8401a"/></g>
<g transform="translate(99 479)"><path d="M.3 9c1.500-3.500 5.500-5.500 9-4l6.500 5-6.500 5.300c-3.500.5-7.500-2-9-6.300z" fill="#ececec" stroke="#a8a8a8" stroke-width=".8"/><path d="M2.500 8.500a3.500 3 0 1 0 5.500 2" fill="none" stroke="#8e8e8e" stroke-width="1.300"/><path d="M4.500 13l8.500-3.500M7.500 14.500l7-4" stroke="#bdbdbd" stroke-width=".7"/><rect x="8.500" y=".5" width="7" height="7" fill="#1e6e9e" stroke="#0e4a72" stroke-width=".8"/><rect x="10.300" y="2.300" width="3.400" height="3.400" fill="#d8eef8"/><path d="M12 2.500v3" stroke="#1e6e9e" stroke-width=".9"/><path d="M1.600 1.500v8" stroke="#e8401a" stroke-width="2.400" stroke-linecap="round"/><circle cx="1.600" cy="13" r="1.400" fill="#e8401a"/></g>
<g transform="translate(99 497)"><path d="M.3 9c1.500-3.500 5.500-5.500 9-4l6.500 5-6.500 5.300c-3.500.5-7.500-2-9-6.300z" fill="#ececec" stroke="#a8a8a8" stroke-width=".8"/><path d="M2.500 8.500a3.500 3 0 1 0 5.500 2" fill="none" stroke="#8e8e8e" stroke-width="1.300"/><path d="M4.500 13l8.500-3.500M7.500 14.500l7-4" stroke="#bdbdbd" stroke-width=".7"/><rect x="8.500" y=".5" width="7" height="7" fill="#1e6e9e" stroke="#0e4a72" stroke-width=".8"/><rect x="10.300" y="2.300" width="3.400" height="3.400" fill="#d8eef8"/><path d="M12 2.500v3" stroke="#1e6e9e" stroke-width=".9"/></g>
<g transform="translate(99 515)"><path d="M.3 9c1.500-3.500 5.500-5.500 9-4l6.500 5-6.500 5.300c-3.500.5-7.500-2-9-6.300z" fill="#ececec" stroke="#a8a8a8" stroke-width=".8"/><path d="M2.500 8.500a3.500 3 0 1 0 5.500 2" fill="none" stroke="#8e8e8e" stroke-width="1.300"/><path d="M4.500 13l8.500-3.500M7.500 14.500l7-4" stroke="#bdbdbd" stroke-width=".7"/><rect x="8.500" y=".5" width="7" height="7" fill="#1e6e9e" stroke="#0e4a72" stroke-width=".8"/><rect x="10.300" y="2.300" width="3.400" height="3.400" fill="#d8eef8"/><path d="M12 2.500v3" stroke="#1e6e9e" stroke-width=".9"/></g>
<g transform="translate(99 533)"><path d="M.3 9c1.500-3.500 5.500-5.500 9-4l6.500 5-6.500 5.300c-3.500.5-7.500-2-9-6.300z" fill="#ececec" stroke="#a8a8a8" stroke-width=".8"/><path d="M2.500 8.500a3.500 3 0 1 0 5.500 2" fill="none" stroke="#8e8e8e" stroke-width="1.300"/><path d="M4.500 13l8.500-3.500M7.500 14.500l7-4" stroke="#bdbdbd" stroke-width=".7"/><rect x="8.500" y=".5" width="7" height="7" fill="#1e6e9e" stroke="#0e4a72" stroke-width=".8"/><rect x="10.300" y="2.300" width="3.400" height="3.400" fill="#d8eef8"/><path d="M12 2.500v3" stroke="#1e6e9e" stroke-width=".9"/></g>
<g transform="translate(99 551)"><path d="M.3 9c1.500-3.500 5.500-5.500 9-4l6.500 5-6.500 5.300c-3.500.5-7.500-2-9-6.300z" fill="#ececec" stroke="#a8a8a8" stroke-width=".8"/><path d="M2.500 8.500a3.500 3 0 1 0 5.500 2" fill="none" stroke="#8e8e8e" stroke-width="1.300"/><path d="M4.500 13l8.500-3.500M7.500 14.500l7-4" stroke="#bdbdbd" stroke-width=".7"/><rect x="8.500" y=".5" width="7" height="7" fill="#1e6e9e" stroke="#0e4a72" stroke-width=".8"/><rect x="10.300" y="2.300" width="3.400" height="3.400" fill="#d8eef8"/><path d="M12 2.500v3" stroke="#1e6e9e" stroke-width=".9"/></g>
<g transform="translate(99 569)"><path d="M.3 9c1.500-3.500 5.500-5.500 9-4l6.500 5-6.500 5.300c-3.500.5-7.500-2-9-6.300z" fill="#ececec" stroke="#a8a8a8" stroke-width=".8"/><path d="M2.500 8.500a3.500 3 0 1 0 5.500 2" fill="none" stroke="#8e8e8e" stroke-width="1.300"/><path d="M4.500 13l8.500-3.500M7.500 14.500l7-4" stroke="#bdbdbd" stroke-width=".7"/><rect x="8.500" y=".5" width="7" height="7" fill="#1e6e9e" stroke="#0e4a72" stroke-width=".8"/><rect x="10.300" y="2.300" width="3.400" height="3.400" fill="#d8eef8"/><path d="M12 2.500v3" stroke="#1e6e9e" stroke-width=".9"/></g>
<g transform="translate(99 587)"><path d="M.3 9c1.500-3.500 5.500-5.500 9-4l6.500 5-6.500 5.300c-3.500.5-7.500-2-9-6.300z" fill="#ececec" stroke="#a8a8a8" stroke-width=".8"/><path d="M2.500 8.500a3.500 3 0 1 0 5.500 2" fill="none" stroke="#8e8e8e" stroke-width="1.300"/><path d="M4.500 13l8.500-3.500M7.500 14.500l7-4" stroke="#bdbdbd" stroke-width=".7"/><rect x="8.500" y=".5" width="7" height="7" fill="#1e6e9e" stroke="#0e4a72" stroke-width=".8"/><rect x="10.300" y="2.300" width="3.400" height="3.400" fill="#d8eef8"/><path d="M12 2.500v3" stroke="#1e6e9e" stroke-width=".9"/></g>
<g transform="translate(99 605)"><path d="M.3 9c1.500-3.500 5.500-5.500 9-4l6.500 5-6.500 5.300c-3.500.5-7.500-2-9-6.300z" fill="#ececec" stroke="#a8a8a8" stroke-width=".8"/><path d="M2.500 8.500a3.500 3 0 1 0 5.500 2" fill="none" stroke="#8e8e8e" stroke-width="1.300"/><path d="M4.500 13l8.500-3.500M7.500 14.500l7-4" stroke="#bdbdbd" stroke-width=".7"/><rect x="8.500" y=".5" width="7" height="7" fill="#1e6e9e" stroke="#0e4a72" stroke-width=".8"/><rect x="10.300" y="2.300" width="3.400" height="3.400" fill="#d8eef8"/><path d="M12 2.500v3" stroke="#1e6e9e" stroke-width=".9"/></g>
<g transform="translate(99 623)"><path d="M.5 8L8 2.500 15.500 8 8 14.500z" fill="#f2b8c0" stroke="#d05a6a" stroke-width=".7"/><path d="M3 6.200l7.500 6.500M5.500 4.300l7.500 6.500M10.500 4.300L3 10.800M13 6.200L5.500 12.700" stroke="#c8485a" stroke-width=".6"/><path d="M8 2.500L15.500 8" stroke="#5a7ad0" stroke-width=".6"/></g>
<g transform="translate(99 641)"><path d="M8 1v14" stroke="#3aa0d0" stroke-width="1.500"/><circle cx="3.500" cy="8" r="1.300" fill="#d21f2b"/><circle cx="12" cy="8" r="1.200" fill="#9fd4ee" stroke="#4a9ccc" stroke-width=".5"/></g>
<g transform="translate(99 659)"><path d="M.5 11C1 6 4 2.500 9 2.500c4 0 6 3.500 6.500 6.500L8.500 13.500z" fill="#ffc928" stroke="#d4841a" stroke-width=".7"/><path d="M3 6c3-3 8-4 10-1l2.500 4-4 2.500C11 8 8 5.500 3 6z" fill="#2aa6d2" opacity=".75"/><path d="M.5 11c.5-3 1.500-4.500 3-5 2 1 4 4 5 7.500z" fill="#ffd84a" stroke="#d4841a" stroke-width=".6"/></g>
<g transform="translate(99 677)"><path d="M.5 9.500L8 6.500l7.500 3L8 15.500z" fill="#8fd2ee" stroke="#2a8cc0" stroke-width=".6"/><path d="M6 5.500h4v4h2.500L8 13.500 3.500 9.500H6z" fill="#2a9cd0"/><path d="M4.500 7V.8h2l3 3.800V.8h2V7h-2l-3-3.800V7z" fill="#d21f2b"/></g>
<g transform="translate(99 695)"><path d="M.5 9.500L8 6.500l7.500 3L8 15.500z" fill="#8fd2ee" stroke="#2a8cc0" stroke-width=".6"/><path d="M6 5.500h4v4h2.500L8 13.500 3.500 9.500H6z" fill="#2a9cd0"/><path d="M4.500 7V.8h2l3 3.800V.8h2V7h-2l-3-3.800V7z" fill="#d21f2b"/></g>
<g transform="translate(99 713)"><path d="M.3 9c1.500-3.500 5.500-5.500 9-4l6.500 5-6.500 5.300c-3.500.5-7.500-2-9-6.300z" fill="#ececec" stroke="#a8a8a8" stroke-width=".8"/><path d="M2.500 8.500a3.500 3 0 1 0 5.500 2" fill="none" stroke="#8e8e8e" stroke-width="1.300"/><path d="M4.500 13l8.500-3.500M7.500 14.500l7-4" stroke="#bdbdbd" stroke-width=".7"/><rect x="8.500" y=".5" width="7" height="7" fill="#1e6e9e" stroke="#0e4a72" stroke-width=".8"/><rect x="10.300" y="2.300" width="3.400" height="3.400" fill="#d8eef8"/><path d="M12 2.500v3" stroke="#1e6e9e" stroke-width=".9"/></g>
<g transform="translate(99 731)"><path d="M.5 5L8 1.500 15.500 4v6.500L8 14.500.5 11z" fill="url(#gb)"/><path d="M.5 5L8 1.500 15.500 4 8 7.500z" fill="#7fd8f0"/><path d="M.8 5.300L8 7.800v6.500L.8 10.800z" fill="url(#gy)" stroke="#d4541a" stroke-width=".7"/><path d="M10 14.500c2-.5 3.500-1.500 4-3l-1-.6 3-.9-.3 3.300-.9-.8c-.8 1.600-2.400 2.600-4.200 2.900z" fill="#d21f2b"/></g>
<g transform="translate(99 749)"><path d="M4.500 7v6a3.500 1.500 0 0 0 7 0V7z" fill="#bfe6f5"/><path d="M.5 8.500L8 6l7.500 2v2.500L8 13 .5 11z" fill="url(#gy)" stroke="#d4541a" stroke-width=".6"/><path d="M4.500 2.500v6a3.500 1.500 0 0 0 7 0v-6z" fill="#bfe6f5"/><ellipse cx="8" cy="2.500" rx="3.500" ry="1.500" fill="#e4f4fb"/></g>
<g transform="translate(99 767)"><path d="M.5 5L7 1.500 15.500 6v4.500L9.500 14.500.5 10z" fill="url(#gb)"/><path d="M.5 5L7 1.500 10 3 4 6.700z" fill="#7fd8f0"/><path d="M4 6.700L10 3c3.500.5 5 2.500 5.500 5.500L9.500 12.300C9.500 9.300 7.500 7.200 4 6.700z" fill="url(#gy)" stroke="#d4541a" stroke-width=".6"/></g>
<g transform="translate(99 785)"><path d="M.3 9c1.500-3.500 5.500-5.500 9-4l6.500 5-6.500 5.300c-3.500.5-7.500-2-9-6.300z" fill="#ececec" stroke="#a8a8a8" stroke-width=".8"/><path d="M2.500 8.500a3.500 3 0 1 0 5.500 2" fill="none" stroke="#8e8e8e" stroke-width="1.300"/><path d="M4.500 13l8.500-3.500M7.500 14.500l7-4" stroke="#bdbdbd" stroke-width=".7"/><rect x="8.500" y=".5" width="7" height="7" fill="#1e6e9e" stroke="#0e4a72" stroke-width=".8"/><rect x="10.300" y="2.300" width="3.400" height="3.400" fill="#d8eef8"/><path d="M12 2.500v3" stroke="#1e6e9e" stroke-width=".9"/></g>
<g transform="translate(99 803)"><path d="M.3 9c1.500-3.500 5.500-5.500 9-4l6.500 5-6.500 5.300c-3.500.5-7.500-2-9-6.300z" fill="#ececec" stroke="#a8a8a8" stroke-width=".8"/><path d="M2.500 8.500a3.500 3 0 1 0 5.500 2" fill="none" stroke="#8e8e8e" stroke-width="1.300"/><path d="M4.500 13l8.500-3.500M7.500 14.500l7-4" stroke="#bdbdbd" stroke-width=".7"/><rect x="8.500" y=".5" width="7" height="7" fill="#1e6e9e" stroke="#0e4a72" stroke-width=".8"/><rect x="10.300" y="2.300" width="3.400" height="3.400" fill="#d8eef8"/><path d="M12 2.500v3" stroke="#1e6e9e" stroke-width=".9"/></g>
<g transform="translate(99 821)"><path d="M.3 9c1.500-3.500 5.500-5.500 9-4l6.500 5-6.500 5.300c-3.500.5-7.500-2-9-6.300z" fill="#ececec" stroke="#a8a8a8" stroke-width=".8"/><path d="M2.500 8.500a3.500 3 0 1 0 5.500 2" fill="none" stroke="#8e8e8e" stroke-width="1.300"/><path d="M4.500 13l8.500-3.500M7.500 14.500l7-4" stroke="#bdbdbd" stroke-width=".7"/><rect x="8.500" y=".5" width="7" height="7" fill="#1e6e9e" stroke="#0e4a72" stroke-width=".8"/><rect x="10.300" y="2.300" width="3.400" height="3.400" fill="#d8eef8"/><path d="M12 2.500v3" stroke="#1e6e9e" stroke-width=".9"/></g>
<g transform="translate(99 839)"><path d="M.5 8L8 2.500 15.500 8 8 14.500z" fill="#f2b8c0" stroke="#d05a6a" stroke-width=".7"/><path d="M3 6.200l7.500 6.500M5.500 4.300l7.500 6.500M10.500 4.300L3 10.800M13 6.200L5.500 12.700" stroke="#c8485a" stroke-width=".6"/><path d="M8 2.500L15.500 8" stroke="#5a7ad0" stroke-width=".6"/></g>
<g transform="translate(99 857)"><path d="M8 1v14" stroke="#3aa0d0" stroke-width="1.500"/><circle cx="3.500" cy="8" r="1.300" fill="#d21f2b"/><circle cx="12" cy="8" r="1.200" fill="#9fd4ee" stroke="#4a9ccc" stroke-width=".5"/></g>
<g transform="translate(99 875)"><path d="M.5 11C1 6 4 2.500 9 2.500c4 0 6 3.500 6.500 6.500L8.500 13.500z" fill="#ffc928" stroke="#d4841a" stroke-width=".7"/><path d="M3 6c3-3 8-4 10-1l2.500 4-4 2.500C11 8 8 5.500 3 6z" fill="#2aa6d2" opacity=".75"/><path d="M.5 11c.5-3 1.500-4.500 3-5 2 1 4 4 5 7.500z" fill="#ffd84a" stroke="#d4841a" stroke-width=".6"/></g>
<g transform="translate(99 893)"><path d="M.5 9.500L8 6.500l7.500 3L8 15.500z" fill="#8fd2ee" stroke="#2a8cc0" stroke-width=".6"/><path d="M6 5.500h4v4h2.500L8 13.500 3.500 9.500H6z" fill="#2a9cd0"/><path d="M4.500 7V.8h2l3 3.800V.8h2V7h-2l-3-3.800V7z" fill="#d21f2b"/></g>
<g transform="translate(99 911)"><path d="M.5 9.500L8 6.500l7.500 3L8 15.500z" fill="#8fd2ee" stroke="#2a8cc0" stroke-width=".6"/><path d="M6 5.500h4v4h2.500L8 13.500 3.500 9.500H6z" fill="#2a9cd0"/><path d="M4.500 7V.8h2l3 3.800V.8h2V7h-2l-3-3.800V7z" fill="#d21f2b"/></g>
<g transform="translate(99 929)"><path d="M4.500 7v6a3.500 1.500 0 0 0 7 0V7z" fill="url(#gbh)"/><path d="M.5 8.500L8 6l7.500 2v2.500L8 13 .5 11z" fill="url(#gy)" stroke="#d4541a" stroke-width=".6"/><path d="M4.500 2.500v6a3.500 1.500 0 0 0 7 0v-6z" fill="url(#gbh)"/><ellipse cx="8" cy="2.500" rx="3.500" ry="1.500" fill="#9fe0f3"/></g>
<g transform="translate(99 947)"><path d="M.3 9c1.500-3.500 5.500-5.500 9-4l6.500 5-6.500 5.300c-3.500.5-7.500-2-9-6.300z" fill="#ececec" stroke="#a8a8a8" stroke-width=".8"/><path d="M2.500 8.500a3.500 3 0 1 0 5.500 2" fill="none" stroke="#8e8e8e" stroke-width="1.300"/><path d="M4.500 13l8.500-3.500M7.500 14.500l7-4" stroke="#bdbdbd" stroke-width=".7"/><rect x="8.500" y=".5" width="7" height="7" fill="#1e6e9e" stroke="#0e4a72" stroke-width=".8"/><rect x="10.300" y="2.300" width="3.400" height="3.400" fill="#d8eef8"/><path d="M12 2.500v3" stroke="#1e6e9e" stroke-width=".9"/></g>
<g transform="translate(99 965)"><path d="M.3 9c1.500-3.500 5.500-5.500 9-4l6.500 5-6.500 5.300c-3.500.5-7.500-2-9-6.300z" fill="#ececec" stroke="#a8a8a8" stroke-width=".8"/><path d="M2.500 8.500a3.500 3 0 1 0 5.500 2" fill="none" stroke="#8e8e8e" stroke-width="1.300"/><path d="M4.500 13l8.500-3.500M7.500 14.500l7-4" stroke="#bdbdbd" stroke-width=".7"/><rect x="8.500" y=".5" width="7" height="7" fill="#1e6e9e" stroke="#0e4a72" stroke-width=".8"/><rect x="10.300" y="2.300" width="3.400" height="3.400" fill="#d8eef8"/><path d="M12 2.500v3" stroke="#1e6e9e" stroke-width=".9"/></g>
<g transform="translate(99 983)"><rect x="1.500" y="2.500" width="12" height="12" fill="#f4f4f4" stroke="#a8a8a8"/><path d="M7.500 2.500v6h6" fill="none" stroke="#b8b8b8" stroke-width=".8"/><path d="M4 10.500v3M10 10.500h2v1.500h-2v1.500h2M4 4.500h1.500v2H4" stroke="#b0b0b0" stroke-width=".7" fill="none"/><rect x="8.500" y=".5" width="7" height="7" fill="#1e6e9e" stroke="#0e4a72" stroke-width=".8"/><rect x="10.300" y="2.300" width="3.400" height="3.400" fill="#d8eef8"/><path d="M12 2.500v3" stroke="#1e6e9e" stroke-width=".9"/></g>
<g transform="translate(99 1001)"><rect x="1.500" y="2.500" width="12" height="12" fill="#f4f4f4" stroke="#a8a8a8"/><path d="M7.500 2.500v6h6" fill="none" stroke="#b8b8b8" stroke-width=".8"/><path d="M4 10.500v3M10 10.500h2v1.500h-2v1.500h2M4 4.500h1.500v2H4" stroke="#b0b0b0" stroke-width=".7" fill="none"/><rect x="8.500" y=".5" width="7" height="7" fill="#1e6e9e" stroke="#0e4a72" stroke-width=".8"/><rect x="10.300" y="2.300" width="3.400" height="3.400" fill="#d8eef8"/><path d="M12 2.500v3" stroke="#1e6e9e" stroke-width=".9"/></g>
<g transform="translate(99 1019)"><path d="M.3 9c1.500-3.500 5.500-5.500 9-4l6.500 5-6.500 5.300c-3.500.5-7.500-2-9-6.300z" fill="#ececec" stroke="#a8a8a8" stroke-width=".8"/><path d="M2.500 8.500a3.500 3 0 1 0 5.500 2" fill="none" stroke="#8e8e8e" stroke-width="1.300"/><path d="M4.500 13l8.500-3.500M7.500 14.500l7-4" stroke="#bdbdbd" stroke-width=".7"/><rect x="8.500" y=".5" width="7" height="7" fill="#1e6e9e" stroke="#0e4a72" stroke-width=".8"/><rect x="10.300" y="2.300" width="3.400" height="3.400" fill="#d8eef8"/><path d="M12 2.500v3" stroke="#1e6e9e" stroke-width=".9"/></g>
<g transform="translate(99 1037)"><path d="M.3 9c1.500-3.500 5.500-5.500 9-4l6.500 5-6.500 5.300c-3.500.5-7.500-2-9-6.300z" fill="#ececec" stroke="#a8a8a8" stroke-width=".8"/><path d="M2.500 8.500a3.500 3 0 1 0 5.500 2" fill="none" stroke="#8e8e8e" stroke-width="1.300"/><path d="M4.500 13l8.500-3.500M7.500 14.500l7-4" stroke="#bdbdbd" stroke-width=".7"/><rect x="8.500" y=".5" width="7" height="7" fill="#1e6e9e" stroke="#0e4a72" stroke-width=".8"/><rect x="10.300" y="2.300" width="3.400" height="3.400" fill="#d8eef8"/><path d="M12 2.500v3" stroke="#1e6e9e" stroke-width=".9"/></g>
<g transform="translate(99 1055)"><path d="M.3 9c1.500-3.500 5.500-5.500 9-4l6.500 5-6.500 5.300c-3.500.5-7.500-2-9-6.300z" fill="#ececec" stroke="#a8a8a8" stroke-width=".8"/><path d="M2.500 8.500a3.500 3 0 1 0 5.500 2" fill="none" stroke="#8e8e8e" stroke-width="1.300"/><path d="M4.500 13l8.500-3.500M7.500 14.500l7-4" stroke="#bdbdbd" stroke-width=".7"/><rect x="8.500" y=".5" width="7" height="7" fill="#1e6e9e" stroke="#0e4a72" stroke-width=".8"/><rect x="10.300" y="2.300" width="3.400" height="3.400" fill="#d8eef8"/><path d="M12 2.500v3" stroke="#1e6e9e" stroke-width=".9"/></g>
<g transform="translate(99 1073)"><path d="M.5 8L8 2.500 15.500 8 8 14.500z" fill="#f2b8c0" stroke="#d05a6a" stroke-width=".7"/><path d="M3 6.200l7.500 6.500M5.500 4.300l7.500 6.500M10.500 4.300L3 10.800M13 6.200L5.500 12.700" stroke="#c8485a" stroke-width=".6"/><path d="M8 2.500L15.500 8" stroke="#5a7ad0" stroke-width=".6"/></g>
<g transform="translate(99 1109)"><path d="M8 1v14" stroke="#c2c2c2" stroke-width="1.500"/><circle cx="3.500" cy="8" r="1.300" fill="#bdbdbd"/><circle cx="12" cy="8" r="1.200" fill="#ddd" stroke="#bbb" stroke-width=".5"/></g>
<g transform="translate(99 1127)"><path d="M.5 9.500L8 6.500l7.500 3L8 15.500z" fill="#dcdcdc" stroke="#b0b0b0" stroke-width=".6"/><path d="M6 5.500h4v4h2.500L8 13.500 3.500 9.500H6z" fill="#b8b8b8"/><path d="M4.500 7V.8h2l3 3.800V.8h2V7h-2l-3-3.800V7z" fill="#9a9a9a"/></g>
<g transform="translate(99 1145)"><path d="M.5 9.500L8 6.500l7.500 3L8 15.500z" fill="#dcdcdc" stroke="#b0b0b0" stroke-width=".6"/><path d="M6 5.500h4v4h2.500L8 13.500 3.500 9.500H6z" fill="#b8b8b8"/><path d="M4.500 7V.8h2l3 3.800V.8h2V7h-2l-3-3.800V7z" fill="#9a9a9a"/></g>
<g transform="translate(99 1163)"><path d="M4.500 7v6a3.500 1.500 0 0 0 7 0V7z" fill="url(#gg)"/><path d="M.5 8.500L8 6l7.500 2v2.500L8 13 .5 11z" fill="#d8d8d8" stroke="#aaa" stroke-width=".6"/><path d="M4.500 2.500v6a3.500 1.500 0 0 0 7 0v-6z" fill="url(#gg)"/><ellipse cx="8" cy="2.500" rx="3.500" ry="1.500" fill="#eee"/></g>
<g transform="translate(52.5 245.5)"><rect x="4.500" y=".5" width="6" height="4" fill="#2ec4e8" stroke="#1a92b8" stroke-width=".8"/><path d="M7.500 4.500v3M2.500 10V7.500h10V10" stroke="#5a9ab8" stroke-width=".9" fill="none"/><rect x=".3" y="9.500" width="5.400" height="4.200" fill="#2ec4e8" stroke="#1a92b8" stroke-width=".8"/><rect x="8.800" y="9.500" width="5.400" height="4.200" fill="#2ec4e8" stroke="#1a92b8" stroke-width=".8"/></g>
<g transform="translate(66 263)"><rect x="4.500" y="5.500" width="10.500" height="10" fill="#ffd42a" stroke="#d4541a" stroke-width=".9"/><path d="M.5 4L7 .5l5 1.500v5L6 10.500.5 8.500z" fill="url(#gb)"/><path d="M.5 4L7 .5l5 1.500L6 5.500z" fill="#7fd8f0"/></g>
<g transform="translate(66 281)"><rect x="4.500" y="6" width="10.500" height="9.500" fill="#ffd42a" stroke="#d4541a" stroke-width=".9"/><path d="M0 3L6.500 0l7 7.500L8 10z" fill="#3ab0dc"/><path d="M2.500 2l7 7M5 .8l7 7" stroke="#8fdcf2" stroke-width=".9"/></g>
<g transform="translate(67 299)"><path d="M1.500 4.500h4l1.500 1.500h6v8h-11.500z" fill="#ffb81a" stroke="#e08a00" stroke-width=".7"/><path d="M1 14l1.500-6.500H14L12.500 14z" fill="#ffe27a" stroke="#e08a00" stroke-width=".7"/><path d="M3.500 4.500l1.500-2.500h4l1 2v2" fill="none" stroke="#e08a00" stroke-width=".7"/></g>
<g transform="translate(5 201)"><path d="M1 6l7-3.500 6 2v7.500L7.500 16 1 13.500z" fill="#e8f4fb" stroke="#6fb4da" stroke-width=".7"/><path d="M1 6l7-3.500 6 2L7.500 8z" fill="#2aa6d2"/><path d="M7.500 8v8" stroke="#6fb4da" stroke-width=".7"/><path d="M16 12.500h7M11.500 14v9.500M11.500 19h3.500" stroke="#4a7a9a" stroke-width="1" fill="none"/><rect x="16.500" y="16.500" width="5.500" height="5" fill="#fff" stroke="#4a7a9a"/></g>
<g transform="translate(5 251)"><rect x=".5" y=".5" width="22" height="22" fill="#e8f6fc" stroke="#58b4dc"/><rect x=".5" y=".5" width="22" height="3.500" fill="#2aa6d2"/><path d="M3.500 11l7-3.500 8 2.500v7l-7.500 4-7.500-3.500z" fill="#ffb81a" stroke="#d4541a" stroke-width=".7"/><path d="M3.500 11l7-3.500 8 2.500-7.500 3.500z" fill="#ffe27a"/><path d="M11 13.500V21" stroke="#d4541a" stroke-width=".7"/></g>
<g transform="translate(4 298)"><rect x=".5" y=".5" width="23" height="23" fill="#bfe6f7" stroke="#2a8cc0"/><circle cx="17.500" cy="6" r="3.600" fill="#ffb81a"/><path d="M.5 14c3-5 6-6 9-2s4 3 6 1 5-2 8 1v9.500H.5z" fill="#2aa6d2"/><path d="M.5 18c4-3 8-2 12 0s8 1 11-1v6.500H.5z" fill="#7fd2ee"/><path d="M1 17h8v-3l5.500 4.500L9 23v-3H1z" fill="#f08a1a" stroke="#c05a00" stroke-width=".5"/></g>
<g transform="translate(4 346)"><circle cx="17" cy="7" r="4.500" fill="#ffb81a"/><path d="M9 21c1-6 4-8 8-8s7 2.500 8 8z" fill="#ffb81a"/><circle cx="10" cy="6.500" r="5.500" fill="#3ab0dc" stroke="#1a7aa8" stroke-width=".6"/><path d="M0 22c1-7 5-9.500 10-9.500s9 2.500 10 9.500z" fill="#3ab0dc" stroke="#1a7aa8" stroke-width=".6"/></g>
<path d="M14 149.500v12l3-2.500 2 4.500 2-1-2-4.500h4z" fill="#1e8ee0" stroke="#0e5a9a" stroke-width=".6"/><circle cx="25" cy="154.500" r="3.300" fill="#ffe27a" stroke="#e0a000" stroke-width=".6"/><path d="M23.500 158h3v2.500h-3z" fill="#888"/>
<path d="M42 150.500h5v4.500h4.500v5H47v4.500h-5V160h-4.500v-5H42z" fill="#8cc63a" stroke="#5a9a1a" stroke-width=".7"/>
<rect x="62" y="155" width="15" height="4.500" rx="1" fill="#e0202a" stroke="#a81018" stroke-width=".6"/>
<rect x="85.500" y="152.500" width="12" height="12" fill="none" stroke="#1a6aaa" stroke-width="1.200" stroke-dasharray="2 1.500"/><path d="M88 160h6M91 157v6" stroke="#d21f2b" stroke-width="1.200"/><path d="M95 152h6M98 149v6" stroke="#d21f2b" stroke-width="1.300"/>
<path d="M106 155.5h5l-2.5 3z" fill="#333"/>
<circle cx="129" cy="157" r="7" fill="none" stroke="#2a8cc0" stroke-width="1.600" stroke-dasharray="2.500 2"/>
<rect x="152" y="158" width="3.500" height="9" fill="#e0202a"/><rect x="155.500" y="155.500" width="3.500" height="11.500" fill="#2a9a2a"/><rect x="159" y="158" width="3.500" height="9" fill="#2a4ad0"/><path d="M160.500 149.500h7l-2.700 3.200v3.500l-1.600-.8v-2.700z" fill="#1e9ad6"/>
<path d="M275 153l7.500-3.500 8.500 3v6.500l-8 4.500-8-4z" fill="#2aa6d2" stroke="#0a6a94" stroke-width=".6"/><path d="M275 153l7.500-3.500 8.500 3-8 3.500z" fill="#9fe0f3"/><path d="M279 151l6 4 4-6z" fill="#ffd42a" stroke="#d4541a" stroke-width=".6"/><path d="M276 158l7 3.500 7-4v3l-7 4-7-3.500z" fill="#ffd42a" stroke="#d4541a" stroke-width=".6"/>
<g stroke="#b4b8bd" fill="none" stroke-width="1.200"><circle cx="436" cy="151.500" r="2"/><circle cx="442" cy="151.500" r="2"/><path d="M431 151.500h3M444 151.500h3M431 157.500h16M437 162h8M437 165h8"/></g>
<g fill="#b4b8bd"><path d="M457 160h14v2.500h-14z"/><circle cx="464" cy="154.500" r="5" fill="#d5d8dc"/><path d="M462 163.500h8v3h-8z"/></g>
<g transform="translate(486 149)"><rect x="1" y="2" width="7" height="2.600" fill="#aaa"/><rect x="1" y="6.2" width="7" height="2.600" fill="#aaa"/><rect x="1" y="10.4" width="7" height="2.600" fill="#aaa"/><path d="M8.500 6v8l2-1.800 1.300 3 1.300-.6-1.300-3h2.700z" fill="#fff" stroke="#9a9a9a" stroke-width=".5"/></g>
<path d="M489 148.500l2 2 3-3.500" stroke="#aaa" fill="none" stroke-width="1"/>
<g transform="translate(510 149)"><rect x="1" y="2" width="7" height="2.600" fill="#1e8ec8"/><rect x="1" y="6.2" width="7" height="2.600" fill="#1e8ec8"/><rect x="1" y="10.4" width="7" height="2.600" fill="#1e8ec8"/><path d="M8.500 6v8l2-1.800 1.300 3 1.300-.6-1.300-3h2.700z" fill="#fff" stroke="#9a9a9a" stroke-width=".5"/></g>
<path d="M513 148.500l2 2 3-3.500" stroke="#2a9a2a" fill="none" stroke-width="1.100"/><circle cx="511.500" cy="164" r="1.600" fill="#d21f2b"/>
<g transform="translate(535 149)"><rect x="1" y="2" width="7" height="2.600" fill="#1e5ea8"/><rect x="1" y="6.2" width="7" height="2.600" fill="#1e5ea8"/><rect x="1" y="10.4" width="7" height="2.600" fill="#1e5ea8"/><path d="M8.500 6v8l2-1.800 1.300 3 1.300-.6-1.300-3h2.700z" fill="#fff" stroke="#9a9a9a" stroke-width=".5"/></g>
<circle cx="537" cy="152.500" r="1.500" fill="#d21f2b"/><circle cx="537" cy="156.500" r="1.500" fill="#d21f2b"/><circle cx="537" cy="161" r="1.500" fill="#d21f2b"/>
<g transform="translate(559 149)"><rect x="1" y="2" width="7" height="2.600" fill="#b0b0b0"/><rect x="1" y="6.2" width="7" height="2.600" fill="#b0b0b0"/><rect x="1" y="10.4" width="7" height="2.600" fill="#b0b0b0"/><path d="M8.500 6v8l2-1.800 1.300 3 1.300-.6-1.300-3h2.700z" fill="#fff" stroke="#9a9a9a" stroke-width=".5"/></g>
<path d="M585 150v12l3-2.500 2 4.500 2-1-2-4.500h4z" fill="#8a8a8a"/>
<rect x="607" y="150" width="14" height="4" fill="#ffc21a" stroke="#d08a00" stroke-width=".5"/><path d="M609 152h7l-2-1.500M616 152l-2 1.500" stroke="#d21f2b" stroke-width="1" fill="none"/><rect x="607" y="155.500" width="14" height="3.500" rx=".8" fill="#d8dce0" stroke="#9aa0a8" stroke-width=".5"/><rect x="607" y="160.500" width="14" height="3.500" rx=".8" fill="#d8dce0" stroke="#9aa0a8" stroke-width=".5"/>
<rect x="631.500" y="149.500" width="12" height="13" fill="#2aa6d2" stroke="#0a6a94" stroke-width=".6"/><rect x="634.500" y="153.500" width="11" height="11" fill="#ffc21a" stroke="#d4541a" stroke-width=".7"/><rect x="637" y="156" width="6" height="6" fill="none" stroke="#d21f2b" stroke-width=".9" stroke-dasharray="1.500 1"/><path d="M641 159l4 4" stroke="#d21f2b" stroke-width="1.200"/>
<rect x="659" y="149.500" width="10" height="15" fill="#2aa6d2" stroke="#0a6a94" stroke-width=".6"/><circle cx="661.500" cy="157" r="6.300" fill="#ffd89a" stroke="#c98a40" stroke-width=".6"/><path d="M657 158c2-2 4-1 5 1s3 2 5 0v3c-2 3-8 3-10-1z" fill="#4ab46a"/><path d="M658 152l5 2-1 2" stroke="#d21f2b" fill="none" stroke-width="1"/>
<path d="M680 153v7c0 2 2 3.500 5 3.500h7" fill="none" stroke="#2a5ab0" stroke-width="1.800"/><rect x="684" y="158" width="9" height="5.500" fill="#2a9cd0" stroke="#d21f2b" stroke-width=".8"/><circle cx="689" cy="153" r="3.200" fill="#ffb81a" stroke="#e07a00" stroke-width=".7"/><path d="M689 148v1.500M689 156.500v1.500M684 153h1.500M692.500 153h1.500M685.500 149.500l1 1M692.500 149.500l-1 1" stroke="#e07a00" stroke-width=".9"/>
<circle cx="717" cy="157" r="7.200" fill="none" stroke="#b4b8bd" stroke-width="1.300"/><path d="M714.500 152v9l2-1.700 1.300 3 1.200-.6-1.300-3h2.600z" fill="#c5c8cc"/><path d="M717 148.500v2M717 163.500v2" stroke="#b4b8bd"/>
<path d="M737 151c0-2 2-3 4-3s3.500 1.500 3.500 3.500V163" fill="none" stroke="#b4b8bd" stroke-width="1.300"/><path d="M737 150v6" stroke="#b4b8bd" stroke-width="1.300"/><circle cx="744.500" cy="164" r="1.200" fill="#b4b8bd"/>
<rect x="758" y="150.500" width="13" height="13" fill="#f8f8f8" stroke="#c5c8cc"/><rect x="760.500" y="152.500" width="8.500" height="8.500" fill="#4a4a4a"/>
<path d="M881 149.500v12.500l3-2.500 2.200 4.500 2-1-2.200-4.500h4.200z" fill="#b4b8bd"/>
<path d="M905 154v10l2.500-2 1.800 3.500 1.500-.8-1.700-3.500h3.300z" fill="#a8acb1"/><g transform="translate(913.500 153)" fill="none" stroke="#b4b8bd" stroke-width="1.100"><circle r="3.500"/><path d="M0-5.500v2M0 3.500v2M-5.500 0h2M3.500 0h2M-3.900-3.900l1.400 1.400M2.500 2.500l1.400 1.400M3.900-3.900l-1.400 1.400M-2.500 2.500l-1.400 1.400"/></g>
<circle cx="935" cy="157" r="7" fill="#e8eaec" stroke="#b4b8bd" stroke-width="1.300"/><path d="M932.500 152.500v9l7-4.500z" fill="#b0b4b9"/>
<g fill="#9aa0a6"><circle cx="953" cy="154.500" r="1"/><circle cx="957.500" cy="152.500" r="1"/><circle cx="957.500" cy="158" r="1.600"/><circle cx="962.500" cy="155" r="1.200"/><circle cx="966" cy="154" r="1"/><circle cx="962.500" cy="161" r="1.200"/></g>
<path d="M976 164l14-13" stroke="#9aa0a6" stroke-width="1.300"/><circle cx="989.500" cy="151.500" r="1.500" fill="#9aa0a6"/>
<path d="M1000 164l14-13" stroke="#9aa0a6" stroke-width="1.300"/><circle cx="1007.500" cy="157" r="1.500" fill="#9aa0a6"/>
<circle cx="1031" cy="157" r="7" fill="none" stroke="#9aa0a6" stroke-width="1.200"/><circle cx="1031" cy="157" r="1.600" fill="#9aa0a6"/>
<circle cx="1055" cy="157" r="7" fill="none" stroke="#9aa0a6" stroke-width="1.200"/><g fill="#9aa0a6"><circle cx="1055" cy="150" r="1.300"/><circle cx="1055" cy="164" r="1.300"/><circle cx="1048" cy="157" r="1.300"/><circle cx="1062" cy="157" r="1.300"/></g>
<path d="M1073 159c2-10 5-10 7-1s5 6 6-4" fill="none" stroke="#9aa0a6" stroke-width="1.200"/><circle cx="1076" cy="150.500" r=".9" fill="#9aa0a6"/><circle cx="1081.500" cy="164" r=".9" fill="#9aa0a6"/>
<path d="M1097 159c2-9 5-8 6.500-1s4.500 6 6-2" fill="none" stroke="#9aa0a6" stroke-width="1.300"/><circle cx="1100.500" cy="152.500" r="1.100" fill="#9aa0a6"/>
<path d="M1120 153c5-2 11-2 15 0M1123 162c0-6 2-9 5-9s5 3 5 9" fill="none" stroke="#9aa0a6" stroke-width="1.300"/>
<path d="M1144 164l14-13" stroke="#9aa0a6" stroke-width="1.300"/><circle cx="1156" cy="153" r="1.600" fill="#9aa0a6"/>
<g transform="translate(1167 150)"><path d="M0 5l8-4 8 4-8 5z" fill="#b8bcc0" stroke="#8a9096" stroke-width=".5"/><path d="M1 8l7 4 7-4M2 3.500l8 4.500M5 2l8 4.500M11 2L3 6.500" stroke="#8a9096" stroke-width=".5" fill="none"/><path d="M3 11l5 3 5-3" stroke="#a8acb0" stroke-width=".8" fill="none"/></g>
<g transform="translate(1191 150)"><path d="M0 5l8-4 8 4-8 5z" fill="#b8bcc0" stroke="#8a9096" stroke-width=".5"/><path d="M1 8l7 4 7-4M2 3.500l8 4.500M5 2l8 4.500M11 2L3 6.500" stroke="#8a9096" stroke-width=".5" fill="none"/><path d="M3 11l5 3 5-3" stroke="#a8acb0" stroke-width=".8" fill="none"/></g>
<path d="M1171.500 201.500h8.500v13h-8.500" fill="none" stroke="#9aa0a6" stroke-width="1.400"/><path d="M1166 208l4.500-3.500v2.200h5.500v2.600h-5.500v2.200z" fill="#b8bcc0" stroke="#8a9096" stroke-width=".5"/>
<path d="M1190 209l8 3.500 9-4" fill="none" stroke="#4ab44a" stroke-width="1.200"/><path d="M1191 211l8 3.500 9-4M1192 207l7 3" fill="none" stroke="#4ab44a" stroke-width=".9"/><path d="M1207 204v6" stroke="#e08a1a" stroke-width="1.300"/><circle cx="1194.500" cy="203" r="3" fill="#5aa8e0" stroke="#2a6aa8" stroke-width=".5"/><path d="M1193 206h3.500v3H1193z" fill="#d84a2a"/>
<path d="M1210 206h5l-2.5 3z" fill="#333"/>
<path d="M1231 212l6.500-8 3 2.500-6.500 8z" fill="#e8603a" stroke="#a83a1a" stroke-width=".5"/><path d="M1237.500 204l1.500-1.800 3 2.500-1.500 1.800z" fill="#ffd42a"/><path d="M1231 212l-.8 3 3.300-.500z" fill="#f5d5a8"/>
<path d="M1251 206l8-3 8 3v6l-8 3.500-8-3.500z" fill="#7fd2ee" stroke="#2a8cc0" stroke-width=".5"/><path d="M1251 206l8-3 8 3-8 3z" fill="#ffe83a" stroke="#c9a000" stroke-width=".5"/><path d="M1259 199v5M1257 201l2-2.500 2 2.500" stroke="#2a9a2a" stroke-width="1.100" fill="none"/>
<path d="M1276 204l9-3.500 8.500 3v8l-9 4.500-8.500-4z" fill="url(#gb)"/><path d="M1276 204l9-3.500 8.500 3-9 3.500z" fill="#bfeaf7"/><path d="M1284.500 207v9l9-4.500v-8z" fill="#0d7aaa"/>
<path d="M1297 206h5l-2.5 3z" fill="#333"/>
<path d="M1314 203l9-2.500 7 4v7l-9 3-7-4.500z" fill="url(#gb)"/><path d="M1321 207.500l9-3v7l-9 3z" fill="#0d7aaa"/><rect x="1312.500" y="200.500" width="7.500" height="7" fill="#dff0fb" stroke="#1e6e9e"/><rect x="1314.500" y="202.500" width="3.500" height="3" fill="#1e6e9e"/>
<path d="M1334 206h5l-2.5 3z" fill="#333"/>
<path d="M1350 204l8-3.500 8 3.500v8.500l-8 3.500-8-3.500z" fill="#1a9ad0" stroke="#0a6a94" stroke-width=".5"/><path d="M1350 204l8 3v9l-8-3.500z" fill="#ffb81a" stroke="#d4541a" stroke-width=".6"/><path d="M1358 207l8-3" stroke="#0a6a94" stroke-width=".6"/>
<path d="M1371 206h5l-2.5 3z" fill="#333"/>
<rect x="1387.500" y="200.500" width="15" height="15" fill="#9fd4ee" stroke="#2a7ab0" stroke-width="1.200"/><circle cx="1394" cy="207.500" r="5.300" fill="#ffe8a0" stroke="#e0a000" stroke-width="1.300"/><path d="M1392.500 205h4l1.500 1.500v5h-5.500z" fill="#f4f4f4" stroke="#999" stroke-width=".5"/><path d="M1399 212.500l4 4" stroke="#2a6aa8" stroke-width="1.600"/>
<path d="M1408 206h5l-2.5 3z" fill="#333"/>
<circle cx="1432" cy="208" r="5" fill="none" stroke="#d21f2b" stroke-width="1.200"/><path d="M1432 200.500v15M1424.500 208h15" stroke="#d21f2b" stroke-width="1"/><path d="M1432 201a7 7 0 0 1 6.500 4.500" fill="none" stroke="#2a6ab0" stroke-width="1.300"/><circle cx="1432" cy="208" r="1.600" fill="#2a6ab0"/>
<path d="M1445 206h5l-2.5 3z" fill="#333"/>
<rect x="1461.500" y="200.500" width="15" height="15" fill="#f4fafd" stroke="#8cc0e0"/><path d="M1470 203c2 0 4 1.500 4.500 3.500M1473 203.500l1.500 3" stroke="#7ab8dc" fill="none"/><rect x="1464" y="210" width="3.500" height="3" fill="#2a7ab0"/>
<path d="M1489 200.500v11M1501 200.500v11M1489 205.500h12" stroke="#2a8cc0" stroke-width="1.300"/><path d="M1489 214.500h12M1489 214.500l2.500-1.800M1489 214.500l2.500 1.800M1501 214.500l-2.500-1.800M1501 214.500l-2.500 1.800" stroke="#d21f2b" stroke-width="1.100" fill="none"/>
<path d="M1507 206h5l-2.5 3z" fill="#333"/>
<rect x="1523" y="200.500" width="16" height="12.500" rx="1" fill="#6a7078" stroke="#4a4e54" stroke-width=".8"/><rect x="1524.500" y="202" width="13" height="9" fill="#8a94a4"/><path d="M1524.500 208l13-4v7h-13z" fill="#5a6474"/><path d="M1527 215.500h8l1-2h-10z" fill="#9a9ea4"/>
<path d="M1544 206h5l-2.5 3z" fill="#333"/>
<rect x="1560" y="204.500" width="16" height="6" fill="#000"/>
<rect x="1585.500" y="200.500" width="15" height="15" fill="#c5e6f7" stroke="#000" stroke-width="1.2"/>
<path d="M1610 206l8-3.500 8.500 3-8.500 4z" fill="#5ac0dc" stroke="#2a8cb0" stroke-width=".5"/><path d="M1610 206v3l8 3.500 8.500-4v-3l-8.500 4z" fill="#3a9ab8"/><path d="M1612 211l6.500 3 7-3.500" stroke="#7ab8cc" fill="none" stroke-width="1"/><path d="M1612 206.500l6 2.500M1615 205l6 2.500M1621.500 204l-6 3" stroke="#bfe6f2" stroke-width=".5"/>
<path d="M1631 206h5l-2.5 3z" fill="#333"/>
<path d="M1652.500 210c-2-1.500-3-3-3-5a4.500 4.500 0 0 1 9 0c0 2-1 3.500-3 5z" fill="#fffbe0" stroke="#555" stroke-width=".8"/><path d="M1652.500 210.500h3M1652.500 212h3M1653 213.500h2" stroke="#2a6ab0" stroke-width=".9"/>
<circle cx="1672" cy="207.500" r="5.600" fill="#ffe23a" stroke="#555" stroke-width=".8"/><path d="M1666.500 202l1 1M1677.500 202l-1 1M1666.500 213l1-1M1677.500 213l-1-1" stroke="#c9a000" stroke-width="1.200"/>
</svg>
</body></html>
